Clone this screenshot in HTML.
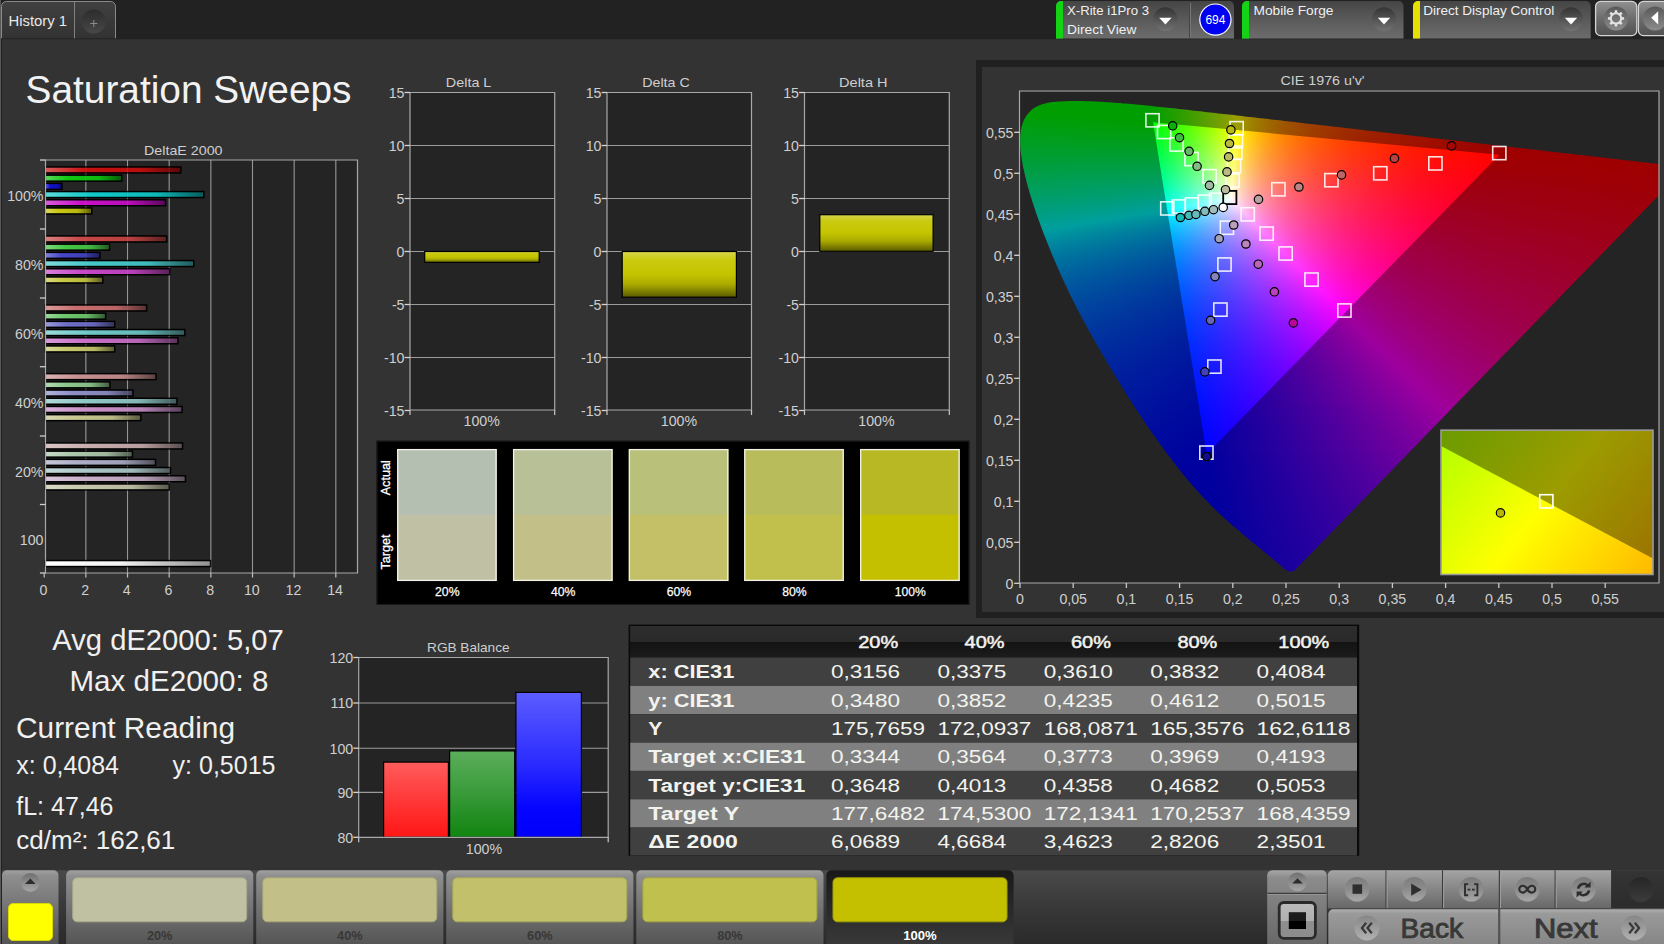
<!DOCTYPE html>
<html><head><meta charset="utf-8"><title>Saturation Sweeps</title><style>
html,body{margin:0;padding:0}
body{width:1664px;height:944px;overflow:hidden;position:relative;background:#333;font-family:"Liberation Sans", sans-serif}
#plot{position:absolute;left:1020px;top:92px;width:639px;height:491px;background:#242424;overflow:hidden}
.cl{position:absolute;left:0;top:0;width:100%;height:100%}
.cl i{display:block;height:2px}
.r1 i{height:1px}
#ov{position:absolute;left:0;top:0}
#ov text{font-family:"Liberation Sans", sans-serif}
.a{position:absolute}
</style></head><body>
<div class="a" style="left:975.5px;top:60px;width:700px;height:558px;background:#202020"></div>
<div class="a" style="left:982px;top:67px;width:700px;height:545px;background:#333"></div>
<div id="plot"><div class="cl r1" style="clip-path:polygon(274.2px 478.8px,270.7px 479.8px,267.7px 478.8px,265.3px 477.4px,263.3px 475.9px,261.5px 474.4px,259.8px 472.8px,258.0px 471.3px,256.2px 469.8px,254.4px 468.3px,252.6px 466.8px,250.7px 465.3px,248.9px 463.8px,247.0px 462.3px,245.2px 460.8px,243.4px 459.3px,241.5px 457.8px,239.7px 456.3px,237.9px 454.8px,236.1px 453.3px,234.2px 451.8px,232.4px 450.2px,230.6px 448.7px,228.8px 447.2px,227.0px 445.7px,225.2px 444.2px,223.4px 442.7px,221.6px 441.2px,219.8px 439.6px,218.0px 438.1px,216.2px 436.6px,214.4px 435.0px,212.6px 433.5px,210.9px 431.9px,209.1px 430.4px,207.3px 428.8px,205.6px 427.2px,203.9px 425.7px,202.1px 424.1px,200.4px 422.5px,198.7px 420.9px,197.0px 419.3px,195.4px 417.7px,193.7px 416.1px,192.0px 414.4px,190.4px 412.8px,188.8px 411.1px,187.2px 409.5px,185.6px 407.8px,184.0px 406.2px,182.4px 404.5px,180.9px 402.8px,179.3px 401.1px,177.8px 399.4px,176.2px 397.7px,174.7px 396.0px,173.2px 394.3px,171.7px 392.6px,170.3px 390.9px,168.8px 389.1px,167.4px 387.4px,165.9px 385.7px,164.5px 383.9px,163.0px 382.2px,161.6px 380.4px,160.2px 378.7px,158.8px 376.9px,157.4px 375.1px,156.0px 373.4px,154.7px 371.6px,153.3px 369.8px,151.9px 368.0px,150.6px 366.3px,149.2px 364.5px,147.9px 362.7px,146.5px 360.9px,145.2px 359.1px,143.9px 357.3px,142.5px 355.5px,141.2px 353.7px,139.9px 351.9px,138.6px 350.1px,137.3px 348.3px,136.0px 346.5px,134.7px 344.7px,133.5px 342.9px,132.2px 341.1px,130.9px 339.3px,129.7px 337.5px,128.4px 335.6px,127.1px 333.8px,125.9px 332.0px,124.7px 330.2px,123.4px 328.3px,122.2px 326.5px,121.0px 324.7px,119.8px 322.8px,118.5px 321.0px,117.3px 319.1px,116.1px 317.3px,114.9px 315.5px,113.7px 313.6px,112.5px 311.8px,111.4px 309.9px,110.2px 308.1px,109.0px 306.2px,107.8px 304.4px,106.7px 302.5px,105.5px 300.6px,104.4px 298.8px,103.2px 296.9px,102.0px 295.1px,100.9px 293.2px,99.8px 291.3px,98.6px 289.5px,97.5px 287.6px,96.4px 285.7px,95.2px 283.9px,94.1px 282.0px,93.0px 280.1px,91.9px 278.3px,90.7px 276.4px,89.6px 274.5px,88.5px 272.6px,87.4px 270.8px,86.3px 268.9px,85.2px 267.0px,84.1px 265.1px,83.0px 263.2px,81.9px 261.4px,80.8px 259.5px,79.7px 257.6px,78.6px 255.7px,77.5px 253.8px,76.4px 252.0px,75.4px 250.1px,74.3px 248.2px,73.2px 246.3px,72.1px 244.4px,71.1px 242.5px,70.0px 240.6px,69.0px 238.7px,67.9px 236.8px,66.9px 234.9px,65.8px 233.0px,64.8px 231.1px,63.8px 229.2px,62.7px 227.3px,61.7px 225.4px,60.7px 223.5px,59.7px 221.6px,58.7px 219.7px,57.7px 217.7px,56.7px 215.8px,55.7px 213.9px,54.8px 212.0px,53.8px 210.1px,52.8px 208.1px,51.9px 206.2px,50.9px 204.3px,50.0px 202.4px,49.1px 200.4px,48.1px 198.5px,47.2px 196.5px,46.3px 194.6px,45.4px 192.7px,44.5px 190.7px,43.6px 188.8px,42.7px 186.8px,41.8px 184.9px,40.9px 182.9px,40.0px 181.0px,39.2px 179.0px,38.3px 177.1px,37.5px 175.1px,36.6px 173.2px,35.8px 171.2px,34.9px 169.3px,34.1px 167.3px,33.3px 165.3px,32.4px 163.4px,31.6px 161.4px,30.8px 159.4px,30.0px 157.5px,29.2px 155.5px,28.4px 153.5px,27.6px 151.6px,26.8px 149.6px,26.0px 147.6px,25.3px 145.6px,24.5px 143.7px,23.7px 141.7px,23.0px 139.7px,22.2px 137.7px,21.5px 135.7px,20.7px 133.8px,20.0px 131.8px,19.3px 129.8px,18.5px 127.8px,17.8px 125.8px,17.1px 123.8px,16.4px 121.8px,15.7px 119.8px,15.1px 117.8px,14.4px 115.8px,13.7px 113.8px,13.1px 111.8px,12.4px 109.8px,11.8px 107.8px,11.2px 105.8px,10.5px 103.8px,9.9px 101.8px,9.3px 99.8px,8.8px 97.8px,8.2px 95.7px,7.6px 93.7px,7.1px 91.7px,6.5px 89.7px,6.0px 87.6px,5.5px 85.6px,5.0px 83.6px,4.6px 81.5px,4.1px 79.5px,3.7px 77.4px,3.2px 75.4px,2.8px 73.3px,2.5px 71.3px,2.1px 69.2px,1.8px 67.2px,1.5px 65.1px,1.2px 63.0px,0.9px 61.0px,0.7px 58.9px,0.5px 56.8px,0.4px 54.7px,0.3px 52.6px,0.2px 50.5px,0.2px 48.5px,0.2px 46.4px,0.3px 44.3px,0.5px 42.2px,0.7px 40.1px,1.0px 37.9px,1.4px 35.8px,1.9px 33.8px,2.6px 31.7px,3.3px 29.6px,4.2px 27.6px,5.3px 25.5px,6.5px 23.6px,7.9px 21.7px,9.5px 19.9px,11.3px 18.2px,13.2px 16.6px,15.4px 15.3px,17.7px 14.0px,20.2px 13.0px,22.7px 12.1px,25.3px 11.4px,28.0px 10.8px,30.6px 10.3px,33.3px 10.0px,36.0px 9.7px,38.7px 9.5px,41.4px 9.4px,44.1px 9.3px,46.8px 9.2px,49.4px 9.1px,52.1px 9.1px,54.8px 9.1px,57.5px 9.1px,60.2px 9.1px,62.9px 9.1px,65.5px 9.2px,68.2px 9.2px,70.9px 9.3px,73.6px 9.4px,76.2px 9.6px,78.9px 9.7px,81.6px 9.8px,84.3px 10.0px,86.9px 10.2px,89.6px 10.3px,92.3px 10.5px,94.9px 10.7px,97.6px 10.9px,100.2px 11.1px,102.9px 11.4px,105.6px 11.6px,108.2px 11.8px,110.9px 12.0px,113.5px 12.3px,116.2px 12.5px,118.8px 12.8px,121.5px 13.1px,124.2px 13.3px,126.8px 13.6px,129.5px 13.8px,132.1px 14.1px,134.8px 14.4px,137.4px 14.7px,140.1px 14.9px,142.7px 15.2px,145.4px 15.5px,148.0px 15.8px,150.7px 16.1px,153.3px 16.3px,155.9px 16.6px,158.6px 16.9px,161.2px 17.2px,163.9px 17.5px,166.5px 17.8px,169.2px 18.1px,171.8px 18.4px,174.5px 18.7px,177.1px 19.0px,179.8px 19.3px,182.4px 19.6px,185.0px 19.9px,187.7px 20.2px,190.3px 20.5px,193.0px 20.8px,195.6px 21.1px,198.3px 21.4px,200.9px 21.7px,203.6px 22.0px,206.2px 22.2px,208.8px 22.5px,211.5px 22.8px,214.1px 23.1px,216.8px 23.5px,219.4px 23.8px,222.1px 24.1px,224.7px 24.4px,227.3px 24.7px,230.0px 25.0px,232.6px 25.3px,235.3px 25.6px,237.9px 25.9px,240.6px 26.2px,243.2px 26.5px,245.9px 26.8px,248.5px 27.1px,251.1px 27.4px,253.8px 27.7px,256.4px 28.0px,259.1px 28.3px,261.7px 28.6px,264.4px 28.9px,267.0px 29.2px,269.6px 29.5px,272.3px 29.8px,274.9px 30.1px,277.6px 30.4px,280.2px 30.8px,282.9px 31.1px,285.5px 31.4px,288.1px 31.7px,290.8px 32.0px,293.4px 32.3px,296.1px 32.6px,298.7px 32.9px,301.4px 33.2px,304.0px 33.5px,306.6px 33.8px,309.3px 34.1px,311.9px 34.4px,314.6px 34.7px,317.2px 35.0px,319.9px 35.3px,322.5px 35.6px,325.1px 35.9px,327.8px 36.2px,330.4px 36.5px,333.1px 36.8px,335.7px 37.1px,338.4px 37.4px,341.0px 37.7px,343.6px 38.0px,346.3px 38.4px,348.9px 38.7px,351.6px 39.0px,354.2px 39.3px,356.9px 39.6px,359.5px 39.9px,362.1px 40.2px,364.8px 40.5px,367.4px 40.8px,370.1px 41.1px,372.7px 41.4px,375.4px 41.7px,378.0px 42.0px,380.6px 42.3px,383.3px 42.6px,385.9px 42.9px,388.6px 43.2px,391.2px 43.6px,393.9px 43.9px,396.5px 44.2px,399.1px 44.5px,401.8px 44.8px,404.4px 45.1px,407.1px 45.4px,409.7px 45.7px,412.4px 46.0px,415.0px 46.3px,417.6px 46.6px,420.3px 46.9px,422.9px 47.2px,425.6px 47.5px,428.2px 47.8px,430.9px 48.1px,433.5px 48.4px,436.1px 48.7px,438.8px 49.0px,441.4px 49.3px,444.1px 49.6px,446.7px 49.9px,449.4px 50.2px,452.0px 50.6px,454.6px 50.9px,457.3px 51.2px,459.9px 51.5px,462.6px 51.8px,465.2px 52.1px,467.9px 52.4px,470.5px 52.7px,473.1px 53.0px,475.8px 53.3px,478.4px 53.6px,481.1px 53.9px,483.7px 54.2px,486.4px 54.5px,489.0px 54.8px,491.6px 55.1px,494.3px 55.4px,496.9px 55.7px,499.6px 56.0px,502.2px 56.3px,504.9px 56.6px,507.5px 56.9px,510.2px 57.2px,512.8px 57.5px,515.4px 57.8px,518.1px 58.1px,520.7px 58.4px,523.4px 58.7px,526.0px 59.0px,528.7px 59.4px,531.3px 59.7px,533.9px 60.0px,536.6px 60.3px,539.2px 60.6px,541.9px 60.9px,544.5px 61.2px,547.1px 61.5px,549.8px 61.8px,552.4px 62.1px,555.1px 62.4px,557.7px 62.7px,560.4px 63.0px,563.0px 63.3px,565.6px 63.6px,568.3px 63.9px,570.9px 64.2px,573.6px 64.5px,576.2px 64.8px,578.9px 65.1px,581.5px 65.4px,584.2px 65.8px,586.8px 66.1px,589.4px 66.4px,592.1px 66.7px,594.7px 67.0px,597.4px 67.3px,600.0px 67.6px,602.7px 67.9px,605.3px 68.2px,607.9px 68.5px,610.6px 68.8px,613.2px 69.1px,615.9px 69.4px,618.5px 69.7px,621.1px 70.0px,623.8px 70.3px,626.4px 70.6px,629.1px 70.9px,631.7px 71.2px,634.4px 71.5px,637.0px 71.8px,639.7px 72.1px,642.3px 72.4px,644.9px 72.7px,647.6px 73.1px,650.2px 73.4px,652.9px 73.7px,655.5px 74.0px,658.2px 74.3px,660.8px 74.6px,664.2px 77.1px)"><i></i><i></i><i></i><i></i><i></i><i></i><i></i><i></i><i></i><i style="background:linear-gradient(90deg,#009e00 31px,#009e00 87px)"></i><i style="background:linear-gradient(90deg,#009e00 24px,#009e00 101px)"></i><i style="background:linear-gradient(90deg,#009e00 21px,#009e00 113px)"></i><i style="background:linear-gradient(90deg,#009e00 18px,#009e00 123px)"></i><i style="background:linear-gradient(90deg,#009e00 15px,#009e00 130px,#059e00 134px)"></i><i style="background:linear-gradient(90deg,#009e00 13px,#009e00 130px,#129e00 143px)"></i><i style="background:linear-gradient(90deg,#009e00 12px,#009e00 130px,#219e00 153px)"></i><i style="background:linear-gradient(90deg,#009e00 10px,#009e00 130px,#2f9e00 162px)"></i><i style="background:linear-gradient(90deg,#009e00 9px,#009e00 131px,#3e9e00 171px)"></i><i style="background:linear-gradient(90deg,#009e00 8px,#009e00 131px,#259e00 156px,#4e9e00 180px)"></i><i style="background:linear-gradient(90deg,#009e01 7px,#009e00 131px,#2c9e00 160px,#5f9e00 189px)"></i><i style="background:linear-gradient(90deg,#009e02 6px,#009e00 131px,#349e00 165px,#719e00 198px)"></i><i style="background:linear-gradient(90deg,#009e03 5px,#009e00 40px,#019e00 132px,#3e9e00 171px,#829e00 206px)"></i><i style="background:linear-gradient(90deg,#009e04 4px,#009e00 50px,#009e00 132px,#239e00 155px,#479e00 176px,#6d9e00 196px,#969e00 215px)"></i><i style="background:linear-gradient(90deg,#009e05 4px,#009e00 61px,#009e00 132px,#249e00 156px,#4a9e00 178px,#739e00 199px,#9d9e00 218px,#9e9200 224px)"></i><i style="background:linear-gradient(90deg,#009e06 3px,#009e00 72px,#009e00 132px,#239e00 155px,#4a9e00 178px,#739e00 199px,#9d9e00 218px,#9e8000 233px)"></i><i style="background:linear-gradient(90deg,#009e07 3px,#009e00 82px,#009e00 132px,#219e00 154px,#489e00 177px,#719e00 198px,#9e9e00 218px,#9e8700 229px,#9e7300 241px)"></i><i style="background:linear-gradient(90deg,#009e08 2px,#009e00 93px,#009e00 132px,#219e00 154px,#489e00 177px,#719e00 198px,#9e9e00 218px,#9e8000 233px,#9e6700 250px)"></i><i style="background:linear-gradient(90deg,#009e09 2px,#009e00 104px,#009e00 132px,#1f9e00 153px,#489e00 177px,#719e00 198px,#9e9e00 218px,#9e7b00 236px,#9e5c00 259px)"></i><i style="background:linear-gradient(90deg,#009e0b 1px,#009e00 133px,#249e00 156px,#4a9e00 178px,#729e00 198px,#9e9e00 218px,#9e8800 228px,#9e7400 240px,#9e5300 268px)"></i><i style="background:linear-gradient(90deg,#009e0c 1px,#009e00 133px,#249e00 156px,#4a9e00 178px,#729e00 198px,#9e9e00 218px,#9e8400 230px,#9e6f00 243px,#9e5d00 258px,#9e4b00 276px)"></i><i style="background:linear-gradient(90deg,#009e0d 0px,#009e00 133px,#239e00 156px,#489e00 177px,#709e00 197px,#9e9d00 218px,#9e8200 231px,#9e6a00 247px,#9e5500 265px,#9e4400 285px)"></i><i style="background:linear-gradient(90deg,#009e0e 0px,#009e02 133px,#229e00 155px,#489e00 177px,#6e9e00 196px,#9e9d00 218px,#9e7f00 233px,#9e6600 250px,#9e5000 270px,#9e3e00 293px)"></i><i style="background:linear-gradient(90deg,#009e0f 0px,#009e03 133px,#209e00 154px,#489e00 177px,#729e00 198px,#9d9e00 217px,#9e7d00 234px,#9e6200 253px,#9e4b00 275px,#9e3800 302px)"></i><i style="background:linear-gradient(90deg,#009e10 0px,#019e04 134px,#259e01 157px,#4a9e00 178px,#729e00 198px,#9d9e00 217px,#9e7b00 235px,#9e5e00 256px,#9e4600 281px,#9e3300 311px)"></i><i style="background:linear-gradient(90deg,#009e11 0px,#009e06 134px,#249e03 157px,#4a9e00 178px,#729e00 198px,#9d9e00 217px,#9e7900 236px,#9e5a00 259px,#9e4200 286px,#9e2e00 320px)"></i><i style="background:linear-gradient(90deg,#009e12 0px,#009e07 134px,#249e04 157px,#4a9e02 178px,#729e00 198px,#9e9e00 217px,#9e7700 237px,#9e5800 261px,#9e3e00 291px,#9e2a00 328px)"></i><i style="background:linear-gradient(90deg,#009e13 0px,#009e08 134px,#249e06 157px,#4a9e03 178px,#729e00 198px,#9e9e00 217px,#9e8800 227px,#9e7500 238px,#9e5500 264px,#9e3b00 296px,#9e2600 337px)"></i><i style="background:linear-gradient(90deg,#009e14 0px,#009e0a 134px,#229e07 156px,#4a9e05 178px,#729e02 198px,#9e9e00 217px,#9e8800 227px,#9e7300 239px,#9e6200 252px,#9e5100 267px,#9e3700 302px,#9e2200 346px)"></i><i style="background:linear-gradient(90deg,#009e15 0px,#009e0b 134px,#219e09 155px,#489e06 177px,#709e04 197px,#9e9e01 217px,#9e8600 228px,#9e7200 240px,#9e5f00 254px,#9e4f00 269px,#9e3400 306px,#9e1f00 354px)"></i><i style="background:linear-gradient(90deg,#009e16 0px,#009e0d 134px,#1f9e0b 154px,#489e08 177px,#709e05 197px,#9c9e03 216px,#9e8200 230px,#9e6e00 242px,#9e5c00 256px,#9e4c00 272px,#9e3100 312px,#9e1c00 363px)"></i><i style="background:linear-gradient(90deg,#009e17 0px,#019e0e 135px,#249e0c 157px,#499e09 178px,#729e07 198px,#9c9e04 216px,#9e8202 230px,#9e6d00 243px,#9e5a00 258px,#9e4a00 275px,#9e2e00 317px,#9e1900 372px)"></i><i style="background:linear-gradient(90deg,#009e18 0px,#009e0f 135px,#239e0d 157px,#499e0b 178px,#739e09 198px,#9c9e06 216px,#9e8203 230px,#9e6d01 243px,#9e5900 259px,#9e4800 277px,#9e2b00 322px,#9e1600 380px)"></i><i style="background:linear-gradient(90deg,#009e19 0px,#009e11 135px,#239e0f 157px,#499e0d 178px,#739e0a 198px,#9d9e08 216px,#9e8105 230px,#9e6b02 244px,#9e5700 260px,#9e4600 279px,#9e3700 301px,#9e2900 326px,#9e1400 389px)"></i><i style="background:linear-gradient(90deg,#009e1a 0px,#009e12 135px,#239e10 157px,#499e0e 178px,#739e0c 198px,#9d9e0a 216px,#9e8106 230px,#9e6904 245px,#9e5501 262px,#9e4300 282px,#9e3400 305px,#9e2700 332px,#9e1100 398px)"></i><i style="background:linear-gradient(90deg,#009e1b 0px,#009e14 135px,#219e12 156px,#499e10 178px,#739e0e 198px,#9d9e0c 216px,#9e8108 230px,#9e6905 245px,#9e5402 263px,#9e4100 284px,#9e3200 308px,#9e2500 336px,#9e0f00 406px)"></i><i style="background:linear-gradient(90deg,#009e1c 0px,#009e15 135px,#1e9e14 154px,#459e12 176px,#6a9e10 194px,#9e9c0d 217px,#9e810a 230px,#9e6706 246px,#9e5203 264px,#9e4001 286px,#9e3000 311px,#9e2200 341px,#9e0d00 415px)"></i><i style="background:linear-gradient(90deg,#009e1e 0px,#019e17 136px,#239e15 157px,#479e13 177px,#6a9e12 194px,#9e9c0f 217px,#9e7e0b 231px,#9e6607 247px,#9e5004 266px,#9e3d02 289px,#9e2e00 315px,#9e2000 346px,#9e0b00 424px)"></i><i style="background:linear-gradient(90deg,#009e1f 0px,#009e18 136px,#249e17 158px,#4b9e15 179px,#739e13 198px,#9e9e11 216px,#9e800d 230px,#9e6609 247px,#9e4f05 267px,#9e3c02 290px,#9e2c00 318px,#9e1f00 350px,#9e0a00 432px)"></i><i style="background:linear-gradient(90deg,#009e20 0px,#009e1a 136px,#249e18 158px,#4b9e17 179px,#739e15 198px,#9e9e13 216px,#9e7e0e 231px,#9e640a 248px,#9e4e06 268px,#9e3b03 292px,#9e2b01 320px,#9e1d00 354px,#9e0800 441px)"></i><i style="background:linear-gradient(90deg,#009e21 0px,#009e1b 136px,#229e1a 157px,#499e18 178px,#719e17 197px,#9e9e15 216px,#9e7e10 231px,#9e640b 248px,#9e4d07 269px,#9e3904 294px,#9e2901 324px,#9e1b00 359px,#9e0600 450px)"></i><i style="background:linear-gradient(90deg,#009e22 0px,#009e1d 136px,#229e1b 157px,#499e1a 178px,#719e19 197px,#9e9e17 216px,#9e7d11 231px,#9e620c 249px,#9e4c08 270px,#9e3805 296px,#9e2702 327px,#9e1a00 363px,#9e0500 458px)"></i><i style="background:linear-gradient(90deg,#009e23 0px,#009e1e 136px,#209e1d 156px,#479e1c 177px,#6f9e1b 196px,#9e9d19 216px,#9e7d13 231px,#9e610d 250px,#9e4a09 272px,#9e3605 299px,#9e2602 330px,#9e1800 368px,#9e0300 467px)"></i><i style="background:linear-gradient(90deg,#009e24 0px,#019e20 137px,#239e1f 158px,#499e1d 178px,#6f9e1c 196px,#9e9d1b 216px,#9e7b14 232px,#9e5f0e 251px,#9e480a 274px,#9e3406 301px,#9e2403 334px,#9e1600 373px,#9e0200 476px)"></i><i style="background:linear-gradient(90deg,#009e25 0px,#009e21 137px,#239e20 158px,#499e1f 178px,#6f9e1e 196px,#9e9d1d 216px,#9e7b16 232px,#9e5e0f 252px,#9e460b 275px,#9e3306 303px,#9e2303 337px,#9e1500 377px,#9e0000 485px)"></i><i style="background:linear-gradient(90deg,#009e26 0px,#009e23 137px,#239e22 158px,#499e21 178px,#6d9e20 195px,#9e9d1f 216px,#9e7b17 232px,#9e5d11 252px,#9e450b 276px,#9e3207 305px,#9e2104 340px,#9e1300 383px,#9e0800 438px,#9e0000 493px)"></i><i style="background:linear-gradient(90deg,#009e27 0px,#009e24 137px,#219e24 157px,#479e23 177px,#6b9e22 194px,#9e9c21 216px,#9e7918 233px,#9e5c12 253px,#9e440c 278px,#9e3008 308px,#9e1f04 346px,#9e1101 392px,#9e0400 459px,#9e0000 502px)"></i><i style="background:linear-gradient(90deg,#009e29 0px,#009e26 137px,#219e25 157px,#479e24 177px,#6b9e24 194px,#9e9c22 216px,#9e781a 233px,#9e5b13 254px,#9e420d 280px,#9e2e08 311px,#9e1d04 351px,#9e0f01 401px,#9e0000 483px,#9e0000 511px)"></i><i style="background:linear-gradient(90deg,#009e2a 0px,#009e27 137px,#1f9e27 156px,#459e26 176px,#689e26 193px,#9e9e25 215px,#9e9c24 216px,#9e761b 234px,#9e5914 255px,#9e410e 281px,#9e2d09 313px,#9e1b04 355px,#9e0d01 408px,#9e0000 484px,#9e0000 519px)"></i><i style="background:linear-gradient(90deg,#009e2b 0px,#019e29 138px,#249e28 159px,#4b9e28 179px,#749e27 198px,#9e9e27 215px,#9e781d 233px,#9e5915 255px,#9e400f 282px,#9e2c09 314px,#9e1a05 359px,#9e0b01 415px,#9e0000 483px,#9e0000 528px)"></i><i style="background:linear-gradient(90deg,#009e2c 0px,#009e2b 138px,#249e2a 159px,#4a9e2a 179px,#729e29 197px,#9e9e29 215px,#9e8923 224px,#9e781f 233px,#9e5916 255px,#9e3f0f 283px,#9e2a0a 317px,#9e1805 364px,#9e0901 424px,#9e0000 483px,#9e0000 537px)"></i><i style="background:linear-gradient(90deg,#009e2d 0px,#009e2c 138px,#249e2c 159px,#4a9e2c 179px,#729e2b 197px,#9e9e2b 215px,#9e8925 224px,#9e7720 233px,#9e5717 256px,#9e3e10 284px,#9e290a 319px,#9e1605 369px,#9e0801 432px,#9e0000 482px,#9e0000 545px)"></i><i style="background:linear-gradient(90deg,#009e2e 0px,#009e2e 138px,#229e2e 158px,#489e2d 178px,#709e2d 196px,#9e9e2d 215px,#9e8827 224px,#9e7521 234px,#9e5618 257px,#9e3c11 286px,#9e280b 321px,#9e1505 373px,#9e0601 440px,#9e0000 481px,#9e0000 554px)"></i><i style="background:linear-gradient(90deg,#009e2f 0px,#009e2f 138px,#229e2f 158px,#489e2f 178px,#709e2f 196px,#9e9d2f 215px,#9e8829 224px,#9e7523 234px,#9e5419 258px,#9e3b12 287px,#9e260b 324px,#9e1306 379px,#9e0401 450px,#9e0000 480px,#9e0000 563px)"></i><i style="background:linear-gradient(90deg,#009e31 0px,#009e31 138px,#209e31 157px,#469e31 177px,#6d9e31 195px,#9e9d31 215px,#9e882a 224px,#9e7525 234px,#9e541a 258px,#9e3a12 288px,#9e250c 326px,#9e1206 383px,#9e0301 458px,#9e0000 479px,#9e0000 571px)"></i><i style="background:linear-gradient(90deg,#009e32 0px,#009e33 138px,#1e9e33 156px,#469e33 177px,#6d9e33 195px,#9e9d33 215px,#9e872c 224px,#9e7326 235px,#9e531b 259px,#9e3913 290px,#9e240c 328px,#9e1006 388px,#9e0201 467px,#9e0000 580px)"></i><i style="background:linear-gradient(90deg,#009e33 0px,#009e34 139px,#239e35 159px,#489e35 178px,#6d9e35 195px,#9e9d35 215px,#9e872e 224px,#9e7327 235px,#9e521c 260px,#9e3814 291px,#9e230d 331px,#9e0f06 393px,#9e0001 476px,#9e0000 589px)"></i><i style="background:linear-gradient(90deg,#009e34 0px,#009e36 139px,#239e36 159px,#489e37 178px,#6b9e37 194px,#9e9c37 215px,#9e8730 224px,#9e7229 235px,#9e511e 260px,#9e3714 292px,#9e220d 333px,#9e0f07 394px,#9e0002 475px,#9e0000 597px)"></i><i style="background:linear-gradient(90deg,#009e35 0px,#009e38 139px,#219e38 158px,#469e39 177px,#699e39 193px,#9e9c39 215px,#9e8732 224px,#9e722a 235px,#9e6024 247px,#9e501e 261px,#9e3515 294px,#9e210e 335px,#9e0e07 396px,#9e0002 475px,#9e0000 606px)"></i><i style="background:linear-gradient(90deg,#009e36 0px,#009e39 139px,#219e3a 158px,#469e3b 177px,#709e3b 196px,#9e9e3c 214px,#9e9c3b 215px,#9e8433 225px,#9e702b 236px,#9e4f1f 262px,#9e3416 295px,#9e200e 337px,#9e0e08 397px,#9e0003 474px,#9e0000 615px)"></i><i style="background:linear-gradient(90deg,#009e38 0px,#009e3b 139px,#209e3c 158px,#489e3c 178px,#729e3d 197px,#9e9e3e 214px,#9e8635 224px,#9e712e 235px,#9e6027 247px,#9e4f21 261px,#9e3417 295px,#9e1f0f 338px,#9e0d08 397px,#9e0003 473px,#9e0000 623px)"></i><i style="background:linear-gradient(90deg,#009e39 0px,#009e3d 139px,#1e9e3d 157px,#489e3e 178px,#709e3f 196px,#9e9e40 214px,#9e8637 224px,#9e712f 235px,#9e5e28 248px,#9e4e22 262px,#9e3317 296px,#9e1e0f 340px,#9e0d09 398px,#9e0004 472px,#9e0000 632px)"></i><i style="background:linear-gradient(90deg,#009e3a 0px,#019e3e 140px,#249e3f 160px,#4a9e40 179px,#709e41 196px,#9e9e43 214px,#9e8639 224px,#9e7131 235px,#9e5e29 248px,#9e4e23 262px,#9e3218 297px,#9e1d10 341px,#9e0d09 398px,#9e0004 471px,#9e0000 639px)"></i><i style="background:linear-gradient(90deg,#009e3b 0px,#009e40 140px,#249e41 160px,#4a9e42 179px,#709e44 196px,#9e9d45 214px,#9e853b 224px,#9e7132 235px,#9e5e2b 248px,#9e4e24 262px,#9e3219 297px,#9e1d11 341px,#9e0d0a 398px,#9e0005 470px,#9e0000 639px)"></i><i style="background:linear-gradient(90deg,#009e3c 0px,#009e42 140px,#239e43 160px,#4a9e44 179px,#709e46 196px,#9e9d47 214px,#9e853d 224px,#9e7034 235px,#9e5d2c 248px,#9e4d26 262px,#9e321a 297px,#9e1d11 341px,#9e0d0b 397px,#9e0005 469px,#9e0000 639px)"></i><i style="background:linear-gradient(90deg,#009e3e 0px,#009e44 140px,#219e45 159px,#479e46 178px,#6e9e48 195px,#9e9d49 214px,#9e853f 224px,#9e7036 235px,#9e5d2e 248px,#9e4d27 262px,#9e321b 297px,#9e1d12 341px,#9e0d0b 397px,#9e0006 468px,#9e0000 639px)"></i><i style="background:linear-gradient(90deg,#009e3f 1px,#009e45 140px,#1f9e47 158px,#479e48 178px,#6c9e4a 194px,#9e9d4b 214px,#9e8440 224px,#9e7037 235px,#9e5d2f 248px,#9e4d28 262px,#9e321c 297px,#9e1d13 341px,#9e0d0c 396px,#9e0006 467px,#9e0000 639px)"></i><i style="background:linear-gradient(90deg,#009e40 1px,#009e47 140px,#1d9e48 157px,#459e4a 177px,#6c9e4c 194px,#9e9c4d 214px,#9e8442 224px,#9e7039 235px,#9e5d30 248px,#9e4d29 262px,#9e311d 297px,#9e1c14 341px,#9e0d0c 396px,#9e0007 466px,#9e0000 639px)"></i><i style="background:linear-gradient(90deg,#009e41 1px,#019e49 141px,#239e4b 160px,#479e4c 178px,#6c9e4e 194px,#9e9c4f 214px,#9e8444 224px,#9e6f3b 235px,#9e5c32 248px,#9e4c2b 262px,#9e311e 297px,#9e1c14 341px,#9e0c0d 396px,#9e0007 465px,#9e0000 639px)"></i><i style="background:linear-gradient(90deg,#009e43 1px,#009e4b 141px,#239e4d 160px,#479e4e 178px,#719e50 196px,#9e9e53 213px,#9e9c52 214px,#9e8446 224px,#9e6f3c 235px,#9e5c33 248px,#9e4c2c 262px,#9e311f 297px,#9e1c15 341px,#9e0c0e 395px,#9e0008 464px,#9e0000 639px)"></i><i style="background:linear-gradient(90deg,#009e44 1px,#009e4d 141px,#229e4e 160px,#479e50 178px,#719e53 196px,#9e9e55 213px,#9e9c54 214px,#9e8348 224px,#9e6f3e 235px,#9e5c35 248px,#9e4c2d 262px,#9e3120 297px,#9e1c16 341px,#9e0c0e 395px,#9e0008 463px,#9e0001 639px)"></i><i style="background:linear-gradient(90deg,#009e45 2px,#009e4e 141px,#229e50 160px,#499e53 179px,#739e55 197px,#9e9e57 213px,#9e854b 223px,#9e7041 234px,#9e5d37 247px,#9e4d2f 261px,#9e3121 296px,#9e1c17 340px,#9e0c0f 394px,#9e0009 462px,#9e0001 639px)"></i><i style="background:linear-gradient(90deg,#009e46 2px,#009e50 141px,#229e52 160px,#499e55 179px,#719e57 196px,#9e9e5a 213px,#9e854d 223px,#9e7042 234px,#9e5c38 247px,#9e4c30 261px,#9e3122 296px,#9e1c18 340px,#9e0c10 393px,#9e0009 461px,#9e0001 639px)"></i><i style="background:linear-gradient(90deg,#009e48 2px,#009e52 141px,#1e9e54 158px,#479e57 178px,#6f9e59 195px,#9e9e5c 213px,#9e854f 223px,#9e6f44 234px,#9e5c3a 247px,#9e4c31 261px,#9e3023 296px,#9e1c18 340px,#9e0c10 393px,#9e000a 460px,#9e0001 639px)"></i><i style="background:linear-gradient(90deg,#009e49 2px,#019e54 142px,#249e56 161px,#499e59 179px,#6f9e5b 195px,#9e9d5e 213px,#9e8451 223px,#9e6f46 234px,#9e5c3b 247px,#9e4c33 261px,#9e3024 296px,#9e1b19 340px,#9e0c11 393px,#9e000b 459px,#9e0002 639px)"></i><i style="background:linear-gradient(90deg,#009e4a 3px,#009e56 142px,#239e58 161px,#499e5b 179px,#6f9e5e 195px,#9e9d60 213px,#9e8453 223px,#9e6f47 234px,#9e5c3d 247px,#9e4b34 261px,#9e3025 296px,#9e1b1a 340px,#9e0c12 392px,#9e000b 458px,#9e0002 639px)"></i><i style="background:linear-gradient(90deg,#009e4c 3px,#009e58 142px,#239e5a 161px,#499e5d 179px,#6f9e60 195px,#9e9d63 213px,#9e8455 223px,#9e6f49 234px,#9e5b3e 247px,#9e4b35 261px,#9e3026 296px,#9e1b1b 340px,#9e0c12 392px,#9e000c 457px,#9e0002 639px)"></i><i style="background:linear-gradient(90deg,#009e4d 3px,#009e5a 142px,#219e5c 160px,#479e5f 178px,#6c9e62 194px,#9e9d65 213px,#9e8457 223px,#9e6e4b 234px,#9e5b40 247px,#9e4b37 261px,#9e3027 295px,#9e1b1b 340px,#9e0c13 391px,#9e000c 456px,#9e0003 639px)"></i><i style="background:linear-gradient(90deg,#009e4e 3px,#009e5c 142px,#219e5e 160px,#479e61 178px,#6a9e64 193px,#9e9c67 213px,#9e8359 223px,#9e6e4d 234px,#9e5b41 247px,#9e4b38 261px,#9e3028 295px,#9e1b1c 340px,#9e0c14 391px,#9e000d 455px,#9e0003 639px)"></i><i style="background:linear-gradient(90deg,#009e50 4px,#009e5e 142px,#1d9e60 158px,#449e63 177px,#6a9e67 193px,#9d9e6b 212px,#9e9c6a 213px,#9e835b 223px,#9e6e4e 234px,#9e5a43 247px,#9e4a39 261px,#9e3029 295px,#9e1a1d 340px,#9e0c14 391px,#9e000d 454px,#9e0003 639px)"></i><i style="background:linear-gradient(90deg,#009e51 4px,#019e60 143px,#239e63 161px,#469e66 178px,#729e6a 196px,#9e9e6d 212px,#9e9c6c 213px,#9e835d 223px,#9e6d50 234px,#9e5b45 246px,#9e4b3b 260px,#9e2f2a 295px,#9e1a1e 340px,#9e0c15 390px,#9e000e 453px,#9e0003 639px)"></i><i style="background:linear-gradient(90deg,#009e52 4px,#009e62 143px,#249e65 162px,#4b9e68 180px,#729e6c 196px,#9e9e70 212px,#9e8560 222px,#9e6f53 233px,#9e5d47 245px,#9e4c3d 259px,#9e302c 293px,#9e1b1f 338px,#9e0c16 388px,#9e000e 452px,#9e0004 639px)"></i><i style="background:linear-gradient(90deg,#009e53 4px,#009e64 143px,#249e67 162px,#4b9e6b 180px,#729e6e 196px,#9e9e72 212px,#9e8764 221px,#9e7056 232px,#9e5c49 245px,#9e4c3f 259px,#9e302d 293px,#9e1b20 338px,#9e0c16 388px,#9e000f 451px,#9e0004 639px)"></i><i style="background:linear-gradient(90deg,#009e55 5px,#009e66 143px,#229e69 161px,#499e6d 179px,#729e71 196px,#9e9e75 212px,#9e8666 221px,#9e7057 232px,#9e5c4b 245px,#9e4b40 259px,#9e302e 293px,#9e1a20 338px,#9e0c17 388px,#9e0010 450px,#9e0004 639px)"></i><i style="background:linear-gradient(90deg,#009e56 5px,#009e68 143px,#229e6b 161px,#489e6f 179px,#6f9e73 195px,#9e9e77 212px,#9e8668 221px,#9e7059 232px,#9e5c4c 245px,#9e4b41 259px,#9e302f 293px,#9e1a21 338px,#9e0c18 387px,#9e0010 449px,#9e0005 639px)"></i><i style="background:linear-gradient(90deg,#009e58 5px,#009e6a 143px,#209e6d 160px,#469e71 178px,#6d9e75 194px,#9e9d7a 212px,#9e866a 221px,#9e6f5b 232px,#9e5b4e 245px,#9e4b43 259px,#9e2f30 293px,#9e1a22 338px,#9e0c18 387px,#9e0011 448px,#9e0005 639px)"></i><i style="background:linear-gradient(90deg,#009e59 5px,#009e6c 143px,#1d9e6f 159px,#469e73 178px,#6d9e78 194px,#9e9d7c 212px,#9e856c 221px,#9e6f5d 232px,#9e5b4f 245px,#9e4a44 259px,#9e2f31 293px,#9e1a23 338px,#9e0c19 386px,#9e0011 447px,#9e0005 639px)"></i><i style="background:linear-gradient(90deg,#009e5a 6px,#019e6e 144px,#239e72 162px,#489e76 179px,#6d9e7a 194px,#9e9d7f 212px,#9e856e 221px,#9e6f5f 232px,#9e5b51 245px,#9e4a45 259px,#9e2f32 293px,#9e1924 338px,#9e0b1a 386px,#9e0012 446px,#9e0006 639px)"></i><i style="background:linear-gradient(90deg,#009e5c 6px,#009e70 144px,#239e74 162px,#489e78 179px,#6d9e7d 194px,#9e9c81 212px,#9e8570 221px,#9e6f61 232px,#9e5a52 245px,#9e4a47 259px,#9e2f33 293px,#9e1924 338px,#9e0b1a 386px,#9e0013 445px,#9e0006 639px)"></i><i style="background:linear-gradient(90deg,#009e5d 6px,#009e72 144px,#219e76 161px,#469e7a 178px,#6b9e7f 193px,#9e9c84 212px,#9e8573 221px,#9e6e62 232px,#9e5a54 245px,#9e4a48 259px,#9e2e35 293px,#9e1925 338px,#9e0b1b 386px,#9e0013 445px,#9e0006 639px)"></i><i style="background:linear-gradient(90deg,#009e5f 7px,#009e68 82px,#009e74 144px,#219e78 161px,#469e7d 178px,#709e82 195px,#9d9e88 211px,#9e9c86 212px,#9e8475 221px,#9e6e64 232px,#9e5a56 245px,#9e4949 259px,#9e2e36 293px,#9e1926 338px,#9e0b1c 386px,#9e0014 444px,#9e0006 639px)"></i><i style="background:linear-gradient(90deg,#009e60 7px,#009e6a 82px,#009e76 144px,#1e9e7a 160px,#439e7f 177px,#709e84 195px,#9e9e8a 211px,#9e9c88 212px,#9e8477 221px,#9e6e66 232px,#9e5a57 245px,#9e494b 259px,#9e2e37 293px,#9e1927 338px,#9e0b1c 385px,#9e0014 443px,#9e0007 639px)"></i><i style="background:linear-gradient(90deg,#009e61 7px,#009e6c 82px,#009e78 144px,#1e9e7c 160px,#489e82 179px,#739e87 196px,#9e9e8d 211px,#9e867b 220px,#9e6f69 231px,#9e5c5b 243px,#9e4b4e 257px,#9e2f39 291px,#9e1928 336px,#9e0b1d 383px,#9e0015 442px,#9e0007 639px)"></i><i style="background:linear-gradient(90deg,#009e63 7px,#009e6e 83px,#019e7a 145px,#249e7f 163px,#4a9e85 180px,#739e8a 196px,#9e9e90 211px,#9e867d 220px,#9e6f6b 231px,#9e5c5d 243px,#9e4b4f 257px,#9e2f3a 291px,#9e1929 336px,#9e0b1e 383px,#9e0016 441px,#9e0007 639px)"></i><i style="background:linear-gradient(90deg,#009e64 8px,#009e6f 83px,#009e7d 145px,#249e82 163px,#4a9e87 180px,#709e8c 195px,#9e9e92 211px,#9e857f 220px,#9e6e6d 231px,#9e5b5e 243px,#9e4a51 257px,#9e2e3b 291px,#9e192a 336px,#9e0b1f 383px,#9e0016 440px,#9e0008 639px)"></i><i style="background:linear-gradient(90deg,#009e66 8px,#009e71 83px,#009e7f 145px,#229e84 162px,#489e89 179px,#709e8f 195px,#9e9d95 211px,#9e8581 220px,#9e6e6f 231px,#9e5b60 243px,#9e4a52 257px,#9e2e3c 291px,#9e192a 336px,#9e0b20 382px,#9e0017 439px,#9e0008 639px)"></i><i style="background:linear-gradient(90deg,#009e67 8px,#009e73 83px,#009e81 145px,#219e86 162px,#489e8c 179px,#6e9e91 194px,#9e9d98 211px,#9e8584 220px,#9e6e71 231px,#9e5b62 243px,#9e4a54 257px,#9e2e3d 291px,#9e182b 336px,#9e0b20 382px,#9e0017 438px,#9e0008 639px)"></i><i style="background:linear-gradient(90deg,#009e69 9px,#009e74 83px,#009e83 145px,#1f9e88 161px,#489e8e 179px,#6e9e94 194px,#9e9d9a 211px,#9e8486 220px,#9e6e73 231px,#9e5a63 243px,#9e4955 257px,#9e2e3e 291px,#9e182c 336px,#9e0b21 381px,#9e0018 437px,#9e000f 525px,#9e0009 639px)"></i><i style="background:linear-gradient(90deg,#009e6a 9px,#009e76 84px,#009e85 145px,#1d9e8a 160px,#459e90 178px,#6b9e96 193px,#9e9d9d 211px,#9e8488 220px,#9e6d75 231px,#9e5a65 243px,#9e4956 257px,#9e2d3f 291px,#9e182d 336px,#9e0b22 381px,#9e0019 436px,#9e0010 524px,#9e0009 638px)"></i><i style="background:linear-gradient(90deg,#009e6b 9px,#009e78 84px,#019e88 146px,#439e92 177px,#8b9e9e 204px,#9e999d 212px,#9e8188 221px,#9e6b75 232px,#9e5865 244px,#9e4857 258px,#9e2d40 292px,#9e172d 337px,#9e0a22 381px,#9e0019 435px,#9e0010 523px,#9e0009 637px)"></i><i style="background:linear-gradient(90deg,#009e6d 10px,#009e7a 85px,#009e8a 146px,#3e9e94 175px,#799e9e 198px,#9e969d 213px,#9e7f89 222px,#9e6976 233px,#9e5766 245px,#9e4658 259px,#9e2c40 293px,#9e172e 338px,#9e0a23 381px,#9e001a 434px,#9e0011 522px,#9e000a 636px)"></i><i style="background:linear-gradient(90deg,#009e6f 10px,#009e7c 85px,#009e8c 146px,#329e95 170px,#699e9e 192px,#9e939d 214px,#9e7c89 223px,#9e6776 234px,#9e5465 247px,#9e4457 261px,#9e2a40 295px,#9e162e 340px,#9e0a23 382px,#9e001b 433px,#9e0011 521px,#9e000a 635px)"></i><i style="background:linear-gradient(90deg,#009e70 10px,#009e7e 85px,#009e8f 146px,#299e96 166px,#599e9e 186px,#9e909d 215px,#9e7a89 224px,#9e6577 235px,#9e5266 248px,#9e4358 262px,#9e2941 296px,#9e152f 341px,#9e0a24 382px,#9e001b 432px,#9e0012 520px,#9e000a 634px)"></i><i style="background:linear-gradient(90deg,#009e72 11px,#009e80 85px,#009e91 146px,#209e97 162px,#4a9e9e 180px,#9e8d9d 216px,#9e7789 225px,#9e6377 236px,#9e5166 249px,#9e4258 263px,#9e2941 297px,#9e152f 342px,#9e001c 431px,#9e0012 519px,#9e000b 633px)"></i><i style="background:linear-gradient(90deg,#009e73 11px,#009e82 85px,#009e93 146px,#179e97 158px,#3b9e9e 174px,#9e8a9d 217px,#9e7388 227px,#9e6076 238px,#9e4e65 251px,#9e3f58 265px,#9e2741 299px,#9e142f 344px,#9e001d 430px,#9e0013 517px,#9e000b 632px)"></i><i style="background:linear-gradient(90deg,#009e75 11px,#009e84 86px,#019e96 147px,#2f9e9e 169px,#9e879d 218px,#9e7188 228px,#9e5e76 239px,#9e4d66 252px,#9e3e58 266px,#9e2641 301px,#9e1330 345px,#9e001d 429px,#9e0013 516px,#9e000b 631px)"></i><i style="background:linear-gradient(90deg,#009e76 12px,#009e85 86px,#009e98 147px,#219e9e 163px,#9e849d 219px,#9e6e88 229px,#9e5c77 240px,#9e3d59 267px,#9e2542 302px,#9e1230 347px,#9e001e 428px,#9e0014 515px,#9e000c 630px)"></i><i style="background:linear-gradient(90deg,#009e78 12px,#009e87 86px,#009e9a 147px,#149e9e 157px,#52929e 186px,#9e819d 220px,#9e6c88 230px,#9e5a77 241px,#9e3c59 268px,#9e2442 303px,#9e1230 348px,#9e001f 427px,#9e0014 514px,#9e000c 629px)"></i><i style="background:linear-gradient(90deg,#009e79 12px,#009e89 86px,#009e9d 147px,#46919e 181px,#9e7f9d 221px,#9e6a89 231px,#9e5877 242px,#9e3b5a 269px,#9e2343 304px,#9e1131 349px,#9e001f 426px,#9e0015 513px,#9e000c 628px)"></i><i style="background:linear-gradient(90deg,#009e7b 13px,#009e8a 81px,#009d9e 147px,#458f9e 181px,#9e7c9d 222px,#9e6889 232px,#9e5778 243px,#9e3959 271px,#9e2243 306px,#9e1131 351px,#9e0020 425px,#9e0015 512px,#9e000d 627px)"></i><i style="background:linear-gradient(90deg,#009e7c 13px,#009e8c 81px,#009e9e 138px,#009b9e 147px,#438d9e 181px,#9e799d 223px,#9e6689 233px,#9e5578 244px,#9e385a 272px,#9e2143 307px,#9e1031 352px,#9e0021 424px,#9e0016 511px,#9e000d 626px)"></i><i style="background:linear-gradient(90deg,#009e7e 13px,#009e8d 78px,#009e9e 132px,#00989e 147px,#408b9e 180px,#9e779d 224px,#9e6489 234px,#9e5378 245px,#9e375a 273px,#9e2144 308px,#9e0f31 354px,#9e0022 423px,#9e0016 510px,#9e000e 625px)"></i><i style="background:linear-gradient(90deg,#009e80 14px,#009e8e 74px,#009e9e 126px,#00969e 148px,#47879e 184px,#9e749d 225px,#9e628a 235px,#9e5077 247px,#9e355b 274px,#9e2044 310px,#9e0f32 355px,#9e0022 422px,#9e0017 509px,#9e000e 624px)"></i><i style="background:linear-gradient(90deg,#009e81 14px,#009e8f 71px,#009e9e 120px,#00949e 148px,#48859e 185px,#9e729d 226px,#9e608a 236px,#9e4f78 248px,#9e345b 275px,#9e1f44 311px,#9e0e32 356px,#9e0023 421px,#9e0017 508px,#9e000e 623px)"></i><i style="background:linear-gradient(90deg,#009e83 14px,#009e9e 114px,#00919e 148px,#47839e 185px,#9e709d 227px,#9e5e8a 237px,#9e4d78 249px,#9e335b 277px,#9e1e44 313px,#9e0d32 358px,#9e0024 420px,#9e0018 507px,#9e000f 622px)"></i><i style="background:linear-gradient(90deg,#009e85 15px,#009e9e 108px,#008f9e 148px,#46819e 185px,#9e6d9d 228px,#9e5c8a 238px,#9e4c78 250px,#9e325b 278px,#9e1d44 314px,#9e0d33 359px,#9e0025 419px,#9e0018 506px,#9e000f 621px)"></i><i style="background:linear-gradient(90deg,#009e86 15px,#009e9e 102px,#008d9e 148px,#437f9e 184px,#9e6b9d 229px,#9e4d7b 249px,#9e3460 274px,#9e214a 305px,#9e1239 343px,#9e0025 418px,#9e0019 505px,#9e000f 620px)"></i><i style="background:linear-gradient(90deg,#009e88 15px,#009e9e 96px,#008b9e 148px,#427d9e 184px,#9e699d 230px,#9e4b7b 250px,#9e3360 275px,#9e204b 306px,#9e1139 344px,#9e0026 417px,#9e0019 504px,#9e0010 619px)"></i><i style="background:linear-gradient(90deg,#009e8a 16px,#009e9e 90px,#00899e 149px,#497a9e 188px,#9e679d 231px,#9e4a7c 251px,#9e3261 276px,#9e1f4b 307px,#9e113a 345px,#9e0027 416px,#9e001a 503px,#9e0010 618px)"></i><i style="background:linear-gradient(90deg,#009e8b 16px,#009e9e 84px,#00879e 149px,#49779e 189px,#9e659d 232px,#9e487c 252px,#9e3161 277px,#9e1f4c 308px,#9e103a 346px,#9e0028 415px,#9e001a 502px,#9e0011 617px)"></i><i style="background:linear-gradient(90deg,#009e8d 16px,#009e9e 78px,#00859e 149px,#48769e 189px,#9e629d 233px,#9e477c 253px,#9e3062 278px,#9e1e4c 309px,#9e0f3b 347px,#9e0028 414px,#9e001b 501px,#9e0011 616px)"></i><i style="background:linear-gradient(90deg,#009e8f 17px,#009e9e 72px,#00839e 149px,#47749e 189px,#9e609d 234px,#9e457d 254px,#9e2f62 279px,#9e1d4c 310px,#9e0f3b 348px,#9e0029 413px,#9e001c 500px,#9e0011 615px)"></i><i style="background:linear-gradient(90deg,#009e90 17px,#009e9e 66px,#00829e 149px,#44739e 188px,#9e5e9d 235px,#9e447d 255px,#9e2e62 280px,#9e1d4d 311px,#9e0e3c 349px,#9e002a 412px,#9e001c 499px,#9e0012 614px)"></i><i style="background:linear-gradient(90deg,#009e92 18px,#009e9e 60px,#00809e 149px,#43719e 188px,#9e5c9d 236px,#9e437d 256px,#9e2d63 281px,#9e1c4d 312px,#9e0e3c 350px,#9e002b 411px,#9e001d 498px,#9e0012 613px)"></i><i style="background:linear-gradient(90deg,#009e94 18px,#009e9e 54px,#017e9e 150px,#4a6e9e 192px,#9e5b9d 237px,#9e417d 257px,#9e2c63 282px,#9e1b4e 313px,#9e0d3c 351px,#9e002b 411px,#9e001d 497px,#9e0013 612px)"></i><i style="background:linear-gradient(90deg,#009e96 18px,#009e9e 48px,#007c9e 150px,#496c9e 192px,#9e599d 238px,#9e407e 258px,#9e2b64 283px,#9e1a4e 314px,#9e0d3d 351px,#9e002c 410px,#9e001e 496px,#9e0013 611px)"></i><i style="background:linear-gradient(90deg,#009e98 19px,#009e9e 42px,#007a9e 150px,#496a9e 193px,#9e579d 239px,#9e3f7e 259px,#9e2a64 284px,#9e1a4f 315px,#9e0d3e 352px,#9e002d 409px,#9e001e 495px,#9e0013 610px)"></i><i style="background:linear-gradient(90deg,#009e99 19px,#009e9e 36px,#00799e 150px,#47699e 192px,#9e559d 240px,#9e3d7e 260px,#9e2964 285px,#9e194f 316px,#9e0c3e 353px,#9e002e 408px,#9e001f 494px,#9e0014 610px)"></i><i style="background:linear-gradient(90deg,#009e9b 19px,#009b9e 39px,#00779e 150px,#46679e 192px,#9e539d 241px,#9e3c7e 261px,#9e2865 286px,#9e184f 317px,#9e0c3e 354px,#9e002f 407px,#9e0020 493px,#9e0014 609px)"></i><i style="background:linear-gradient(90deg,#009e9d 20px,#00769e 150px,#45669e 192px,#9e519d 242px,#9e3b7f 262px,#9e2865 287px,#9e1850 318px,#9e0b3f 355px,#9e0030 406px,#9e0020 492px,#9e0014 608px)"></i><i style="background:linear-gradient(90deg,#009e9e 20px,#01749e 151px,#4b639e 196px,#9e509d 243px,#9e397f 263px,#9e2765 288px,#9e1750 319px,#9e0b3f 356px,#9e0030 405px,#9e0021 491px,#9e0015 607px)"></i><i style="background:linear-gradient(90deg,#009c9e 21px,#00729e 151px,#4a629e 196px,#9e4e9d 244px,#9e387f 264px,#9e2666 289px,#9e1751 320px,#9e0a40 357px,#9e0031 404px,#9e0021 490px,#9e0015 606px)"></i><i style="background:linear-gradient(90deg,#009a9e 21px,#00719e 151px,#4a609e 197px,#9e4c9d 245px,#9e377f 265px,#9e2566 290px,#9e1651 321px,#9e0a40 358px,#9e0032 402px,#9e0027 458px,#9e0016 605px)"></i><i style="background:linear-gradient(90deg,#00989e 21px,#006f9e 151px,#485f9e 196px,#9e4b9d 246px,#9e3680 266px,#9e2466 291px,#9e1652 321px,#9e0a41 358px,#9e0033 401px,#9e0027 457px,#9e0016 604px)"></i><i style="background:linear-gradient(90deg,#00969e 22px,#006e9e 151px,#475e9e 196px,#9e499d 247px,#9e3580 267px,#9e2367 292px,#9e1552 322px,#9e0941 359px,#9e0034 401px,#9e0028 458px,#9e0017 603px)"></i><i style="background:linear-gradient(90deg,#00959e 22px,#006c9e 151px,#465c9e 196px,#9e489d 248px,#9e3380 268px,#9e2267 293px,#9e1453 323px,#9e0941 360px,#9e0035 400px,#9e0028 458px,#9e0017 602px)"></i><i style="background:linear-gradient(90deg,#00939e 23px,#016b9e 152px,#4a5a9e 199px,#9e469d 249px,#9e3280 269px,#9e2267 294px,#9e1453 324px,#9e0842 361px,#9e0036 399px,#9e0029 458px,#9e0017 601px)"></i><i style="background:linear-gradient(90deg,#00919e 23px,#00699e 152px,#4b589e 200px,#9e459d 250px,#9e3181 270px,#9e2168 295px,#9e1353 325px,#9e0842 362px,#9e0037 398px,#9e0029 459px,#9e0018 600px)"></i><i style="background:linear-gradient(90deg,#00909e 23px,#00689e 152px,#4a579e 200px,#9e439d 251px,#9e3081 271px,#9e2068 296px,#9e1354 326px,#9e0843 362px,#9e0037 397px,#9e002a 458px,#9e0018 599px)"></i><i style="background:linear-gradient(90deg,#008e9e 24px,#00679e 152px,#49569e 200px,#9e429e 252px,#9e2f81 272px,#9e1f68 297px,#9e1254 327px,#9e0743 363px,#9e0038 396px,#9e002a 459px,#9e0019 598px)"></i><i style="background:linear-gradient(90deg,#008d9e 24px,#00659e 152px,#48559e 200px,#9e409e 253px,#9e2e81 273px,#9e1e69 298px,#9e1154 328px,#9e0744 364px,#9e0039 395px,#9e002a 459px,#9e0019 597px)"></i><i style="background:linear-gradient(90deg,#008b9e 24px,#00649e 152px,#45549e 199px,#9e3f9e 254px,#9e2d81 274px,#9e1d69 299px,#9e1155 329px,#9e0644 365px,#9e003a 394px,#9e002b 459px,#9e0019 596px)"></i><i style="background:linear-gradient(90deg,#00899e 25px,#01639e 153px,#4b519e 203px,#9e3d9e 255px,#9e2c82 275px,#9e1d69 300px,#9e1055 330px,#9e0645 365px,#9e003b 393px,#9e002b 459px,#9e001a 595px)"></i><i style="background:linear-gradient(90deg,#00889e 25px,#00619e 153px,#4a509e 203px,#9e3c9e 256px,#9e2b82 276px,#9e1c6a 301px,#9e1055 331px,#9e0545 366px,#9e003c 392px,#9e002c 460px,#9e001a 594px)"></i><i style="background:linear-gradient(90deg,#00869e 26px,#00609e 153px,#4b4f9e 204px,#9e3b9e 257px,#9e2a82 277px,#9e1b6a 302px,#9e0f56 332px,#9e0546 367px,#9e003d 391px,#9e002c 460px,#9e001b 593px)"></i><i style="background:linear-gradient(90deg,#00859e 26px,#005f9e 153px,#4a4e9e 204px,#9e399e 258px,#9e2982 278px,#9e1a6a 303px,#9e0e56 333px,#9e0546 368px,#9e003e 390px,#9e002d 460px,#9e001b 592px)"></i><i style="background:linear-gradient(90deg,#00849e 26px,#005e9e 153px,#494d9e 204px,#9e389e 259px,#9e2781 280px,#9e1a6a 304px,#9e0e57 333px,#9e0447 368px,#9e003f 389px,#9e002d 460px,#9e001c 591px)"></i><i style="background:linear-gradient(90deg,#00829e 27px,#005d9e 153px,#464c9e 203px,#9e379e 260px,#9e2681 281px,#9e196b 305px,#9e0e57 334px,#9e0447 369px,#9e0040 388px,#9e002e 460px,#9e001c 590px)"></i><i style="background:linear-gradient(90deg,#00819e 27px,#015b9e 154px,#4c499e 207px,#9e359e 261px,#9e2582 282px,#9e186b 306px,#9e0d58 335px,#9e0447 370px,#9e0041 387px,#9e002e 461px,#9e001d 589px)"></i><i style="background:linear-gradient(90deg,#007f9e 28px,#005a9e 154px,#4b489e 207px,#9e349e 262px,#9e2482 283px,#9e176b 307px,#9e0c58 336px,#9e0348 371px,#9e0042 386px,#9e002f 461px,#9e001d 588px)"></i><i style="background:linear-gradient(90deg,#007e9e 28px,#00599e 154px,#4b479e 208px,#9e339e 263px,#9e2382 284px,#9e176c 308px,#9e0c58 337px,#9e0348 371px,#9e0043 385px,#9e002f 461px,#9e001d 587px)"></i><i style="background:linear-gradient(90deg,#007c9e 29px,#00589e 154px,#4a469e 208px,#9e329e 264px,#9e2282 285px,#9e166c 309px,#9e0b59 338px,#9e0249 372px,#9e0044 384px,#9e0030 461px,#9e001e 586px)"></i><i style="background:linear-gradient(90deg,#007b9e 29px,#00579e 154px,#48459e 207px,#9e319e 265px,#9e2282 286px,#9e156c 310px,#9e0b59 339px,#9e0249 373px,#9e003c 413px,#9e0030 461px,#9e001e 585px)"></i><i style="background:linear-gradient(90deg,#007a9e 29px,#00569e 154px,#47459e 207px,#9e2f9e 266px,#9e2182 287px,#9e156c 311px,#9e0b5a 339px,#9e024a 373px,#9e003c 413px,#9e0031 461px,#9e001f 584px)"></i><i style="background:linear-gradient(90deg,#00799e 30px,#01559e 155px,#4b439e 210px,#9e2e9e 267px,#9e2083 288px,#9e146d 312px,#9e0a5a 340px,#9e014a 374px,#9e003d 414px,#9e0031 461px,#9e001f 583px)"></i><i style="background:linear-gradient(90deg,#00779e 30px,#00549e 155px,#4b419e 211px,#9e2d9e 268px,#9e1f83 289px,#9e136d 313px,#9e0a5a 341px,#9e014a 375px,#9e003d 415px,#9e0031 462px,#9e0020 582px)"></i><i style="background:linear-gradient(90deg,#00769e 31px,#00539e 155px,#4b409e 211px,#9e2c9e 269px,#9e1f84 289px,#9e136e 313px,#9e095b 341px,#9e014b 375px,#9e003e 414px,#9e0032 461px,#9e0020 581px)"></i><i style="background:linear-gradient(90deg,#00759e 31px,#00529e 155px,#4b3f9e 212px,#9e2b9e 270px,#9e1e84 290px,#9e126e 314px,#9e095c 342px,#9e004b 376px,#9e003e 415px,#9e0033 461px,#9e0021 580px)"></i><i style="background:linear-gradient(90deg,#00749e 31px,#00519e 155px,#493f9e 211px,#9e2a9e 271px,#9e1d84 291px,#9e126e 315px,#9e085c 343px,#9e004c 377px,#9e003e 416px,#9e0033 462px,#9e0021 579px)"></i><i style="background:linear-gradient(90deg,#00729e 32px,#00509e 155px,#483e9e 211px,#9e299e 272px,#9e1c85 292px,#9e116f 316px,#9e085c 344px,#9e004c 377px,#9e0034 461px,#9e0022 578px)"></i><i style="background:linear-gradient(90deg,#00719e 32px,#014e9e 156px,#4c3c9e 214px,#9e289e 273px,#9e1b85 293px,#9e106f 317px,#9e075d 345px,#9e004d 378px,#9e0034 462px,#9e0022 577px)"></i><i style="background:linear-gradient(90deg,#00709e 33px,#004e9e 156px,#4b3b9e 214px,#9e279e 274px,#9e1a85 294px,#9e106f 318px,#9e075d 346px,#9e004d 379px,#9e0034 462px,#9e0022 577px)"></i><i style="background:linear-gradient(90deg,#006f9e 33px,#004d9e 156px,#4b3a9e 215px,#9e269e 275px,#9e1a85 295px,#9e0f6f 319px,#9e065d 347px,#9e004d 380px,#9e0035 463px,#9e0023 576px)"></i><i style="background:linear-gradient(90deg,#006e9e 34px,#004c9e 156px,#4b399e 215px,#9e259e 276px,#9e1985 296px,#9e0f70 320px,#9e065d 348px,#9e004e 380px,#9e0035 462px,#9e0023 575px)"></i><i style="background:linear-gradient(90deg,#006d9e 34px,#004b9e 156px,#4a399e 215px,#9e249e 277px,#9e1885 297px,#9e0e70 321px,#9e055e 349px,#9e004e 381px,#9e0036 463px,#9e0024 574px)"></i><i style="background:linear-gradient(90deg,#006c9e 34px,#004a9e 156px,#49389e 215px,#9e239e 278px,#9e1786 298px,#9e0d70 322px,#9e055f 349px,#9e004f 381px,#9e0036 462px,#9e0024 573px)"></i><i style="background:linear-gradient(90deg,#006a9e 35px,#01499e 157px,#4c369e 218px,#9e229e 279px,#9e1686 299px,#9e0d70 323px,#9e0055 369px,#9e004f 382px,#9e0037 463px,#9e0025 572px)"></i><i style="background:linear-gradient(90deg,#00699e 35px,#00489e 157px,#4b359e 218px,#9e219e 280px,#9e1686 300px,#9e0c71 324px,#9e0056 368px,#9e0050 383px,#9e0037 463px,#9e0025 571px)"></i><i style="background:linear-gradient(90deg,#00689e 36px,#00479e 157px,#4c349e 219px,#9e209e 281px,#9e1586 301px,#9e0c72 324px,#9e0058 367px,#9e0050 383px,#9e0038 463px,#9e0026 570px)"></i><i style="background:linear-gradient(90deg,#00679e 36px,#00469e 157px,#4b349e 219px,#9e1f9e 282px,#9e1486 302px,#9e0b72 325px,#9e0059 366px,#9e0051 384px,#9e0038 463px,#9e0026 569px)"></i><i style="background:linear-gradient(90deg,#00669e 37px,#00469e 157px,#4b339e 219px,#9e1e9e 283px,#9e1386 303px,#9e0b72 326px,#9e005a 365px,#9e0051 385px,#9e0039 463px,#9e0027 568px)"></i><i style="background:linear-gradient(90deg,#00659e 37px,#00459e 157px,#4a329e 219px,#9e1d9e 284px,#9e1386 304px,#9e0a72 327px,#9e005b 364px,#9e0052 385px,#9e0039 463px,#9e0027 567px)"></i><i style="background:linear-gradient(90deg,#00649e 38px,#01449e 158px,#4c319e 221px,#9e1c9e 285px,#9e1287 305px,#9e0973 328px,#9e005d 363px,#9e0052 386px,#9e003a 463px,#9e0028 566px)"></i><i style="background:linear-gradient(90deg,#00639e 38px,#00439e 158px,#4c309e 222px,#9e1b9e 286px,#9e1187 306px,#9e0973 329px,#9e005e 362px,#9e0053 386px,#9e003a 463px,#9e0028 565px)"></i><i style="background:linear-gradient(90deg,#00629e 38px,#00429e 158px,#4b2f9e 222px,#9e1a9e 287px,#9e1187 307px,#9e0873 330px,#9e005f 361px,#9e0053 387px,#9e003b 463px,#9e0029 564px)"></i><i style="background:linear-gradient(90deg,#00619e 39px,#00419e 158px,#4c2e9e 223px,#9e199e 288px,#9e1087 308px,#9e0873 331px,#9e0061 360px,#9e0054 387px,#9e003b 463px,#9e0029 563px)"></i><i style="background:linear-gradient(90deg,#00609e 39px,#00419e 158px,#4b2e9e 223px,#9e199e 289px,#9e0f87 309px,#9e0773 332px,#9e0062 359px,#9e0054 388px,#9e003c 463px,#9e002a 562px)"></i><i style="background:linear-gradient(90deg,#005f9e 40px,#00409e 158px,#492d9e 222px,#9e189e 290px,#9e0f87 310px,#9e0774 333px,#9e0063 358px,#9e0054 389px,#9e003c 463px,#9e002a 561px)"></i><i style="background:linear-gradient(90deg,#005e9e 40px,#013f9e 159px,#4c2c9e 225px,#9e179e 291px,#9e0e87 311px,#9e0675 333px,#9e0065 357px,#9e0055 389px,#9e003d 463px,#9e002b 560px)"></i><i style="background:linear-gradient(90deg,#005d9e 41px,#003e9e 159px,#4d2b9e 226px,#9e169e 292px,#9e0d87 312px,#9e0675 334px,#9e0066 357px,#9e0055 390px,#9e003d 463px,#9e002b 559px)"></i><i style="background:linear-gradient(90deg,#005c9e 41px,#003e9e 159px,#4c2a9e 226px,#9e159e 293px,#9e0d88 313px,#9e0575 335px,#9e0067 356px,#9e0056 390px,#9e003e 463px,#9e002c 558px)"></i><i style="background:linear-gradient(90deg,#005b9e 42px,#003d9e 159px,#4d299e 227px,#9e149e 294px,#9e0c88 314px,#9e0575 336px,#9e0068 355px,#9e0056 391px,#9e003e 463px,#9e002c 557px)"></i><i style="background:linear-gradient(90deg,#005a9e 42px,#003c9e 159px,#4c299e 227px,#9e149e 295px,#9e0b88 315px,#9e0475 337px,#9e006a 354px,#9e0057 391px,#9e003f 462px,#9e002d 556px)"></i><i style="background:linear-gradient(90deg,#00599e 43px,#003b9e 159px,#4a289e 226px,#9e139e 296px,#9e0b88 316px,#9e0476 338px,#9e006b 353px,#9e0057 392px,#9e003f 463px,#9e002e 555px)"></i><i style="background:linear-gradient(90deg,#00589e 43px,#003b9e 159px,#49289e 226px,#9e129e 297px,#9e0a89 316px,#9e0376 338px,#9e006d 352px,#9e0058 392px,#9e0040 462px,#9e002e 554px)"></i><i style="background:linear-gradient(90deg,#00579e 44px,#003a9e 160px,#4c269e 229px,#9e119e 298px,#9e0a89 317px,#9e0377 339px,#9e006e 351px,#9e0058 393px,#9e0041 463px,#9e002f 553px)"></i><i style="background:linear-gradient(90deg,#00569e 44px,#00399e 160px,#4d269e 230px,#9e119e 299px,#9e0989 318px,#9e0277 340px,#9e0059 393px,#9e0041 462px,#9e002f 552px)"></i><i style="background:linear-gradient(90deg,#00569e 44px,#00399e 160px,#4c259e 230px,#9e109e 300px,#9e0989 319px,#9e0277 341px,#9e0059 394px,#9e0042 462px,#9e0030 551px)"></i><i style="background:linear-gradient(90deg,#00559e 45px,#00389e 160px,#4c249e 231px,#9e0f9e 301px,#9e0889 320px,#9e0177 342px,#9e005a 394px,#9e0042 462px,#9e0030 550px)"></i><i style="background:linear-gradient(90deg,#00549e 45px,#00379e 160px,#4b249e 230px,#9e0e9e 302px,#9e078a 321px,#9e0177 343px,#9e005a 395px,#9e0043 462px,#9e0031 549px)"></i><i style="background:linear-gradient(90deg,#00539e 46px,#00379e 160px,#4a239e 230px,#9e0e9e 303px,#9e078a 322px,#9e0078 344px,#9e005a 396px,#9e0043 463px,#9e0031 548px)"></i><i style="background:linear-gradient(90deg,#00529e 46px,#00369e 161px,#4d229e 233px,#9e0d9e 304px,#9e068a 323px,#9e0078 344px,#9e005b 396px,#9e0044 462px,#9e0032 547px)"></i><i style="background:linear-gradient(90deg,#00519e 47px,#00359e 161px,#4c229e 233px,#9e0c9e 305px,#9e068a 324px,#9e0079 345px,#9e005c 396px,#9e0044 462px,#9e0033 546px)"></i><i style="background:linear-gradient(90deg,#00519e 47px,#00359e 161px,#4c219e 234px,#9e0c9e 306px,#9e058a 325px,#9e0079 346px,#9e005c 397px,#9e0045 462px,#9e0033 545px)"></i><i style="background:linear-gradient(90deg,#00509e 48px,#00349e 161px,#4c209e 234px,#9e0b9e 307px,#9e048a 326px,#9e0079 347px,#9e005c 397px,#9e0045 462px,#9e0034 544px)"></i><i style="background:linear-gradient(90deg,#004f9e 48px,#00339e 161px,#4b209e 234px,#9e0a9e 308px,#9e048a 327px,#9e0079 348px,#9e005d 398px,#9e0046 462px,#9e0034 543px)"></i><i style="background:linear-gradient(90deg,#004e9e 49px,#00339e 161px,#4b1f9e 234px,#9e0a9e 309px,#9e038a 328px,#9e0079 349px,#9e005d 399px,#9e0046 463px,#9e0035 543px)"></i><i style="background:linear-gradient(90deg,#004d9e 49px,#00329e 162px,#4d1e9e 237px,#9e099e 310px,#9e0083 338px,#9e007a 349px,#9e005e 399px,#9e0047 462px,#9e0035 542px)"></i><i style="background:linear-gradient(90deg,#004c9e 50px,#00319e 162px,#4d1e9e 237px,#9e089e 311px,#9e0084 338px,#9e007a 350px,#9e005e 400px,#9e0048 462px,#9e0036 541px)"></i><i style="background:linear-gradient(90deg,#004c9e 50px,#00319e 162px,#4d1d9e 238px,#9e089e 312px,#9e0085 337px,#9e007b 351px,#9e005e 400px,#9e0048 462px,#9e0036 540px)"></i><i style="background:linear-gradient(90deg,#004b9e 51px,#00309e 162px,#4c1c9e 238px,#9e079e 313px,#9e0087 336px,#9e007b 352px,#9e005f 401px,#9e0049 462px,#9e0037 539px)"></i><i style="background:linear-gradient(90deg,#004a9e 51px,#00309e 162px,#4c1c9e 238px,#9e069e 314px,#9e0089 335px,#9e007b 353px,#9e005f 401px,#9e0049 462px,#9e0038 538px)"></i><i style="background:linear-gradient(90deg,#00499e 52px,#002f9e 162px,#4a1c9e 237px,#9e069e 315px,#9e008b 334px,#9e007c 353px,#9e0060 401px,#9e004a 461px,#9e0038 537px)"></i><i style="background:linear-gradient(90deg,#00499e 52px,#002f9e 163px,#4d1b9e 240px,#9e059e 316px,#9e008d 333px,#9e007c 354px,#9e0060 402px,#9e004a 462px,#9e0039 536px)"></i><i style="background:linear-gradient(90deg,#00489e 53px,#002e9e 163px,#4d1a9e 241px,#9e049e 317px,#9e008f 332px,#9e007c 355px,#9e0061 402px,#9e004b 461px,#9e0039 535px)"></i><i style="background:linear-gradient(90deg,#00479e 53px,#002d9e 163px,#4c199e 241px,#9e049e 318px,#9e0091 331px,#9e007c 356px,#9e0061 403px,#9e004c 461px,#9e003a 534px)"></i><i style="background:linear-gradient(90deg,#00469e 54px,#002d9e 163px,#4d199e 242px,#9e039e 319px,#9e0093 330px,#9e007d 356px,#9e0062 403px,#9e004c 461px,#9e003b 533px)"></i><i style="background:linear-gradient(90deg,#00469e 54px,#002c9e 163px,#4c189e 242px,#9e039e 320px,#9e007c 358px,#9e0062 404px,#9e004d 461px,#9e003b 532px)"></i><i style="background:linear-gradient(90deg,#00459e 55px,#002c9e 163px,#4b189e 241px,#9e029e 321px,#9e007d 358px,#9e0063 404px,#9e004d 461px,#9e003c 531px)"></i><i style="background:linear-gradient(90deg,#00449e 55px,#012b9e 164px,#4d179e 244px,#9e019e 322px,#9e007d 359px,#9e0063 405px,#9e004e 461px,#9e003d 530px)"></i><i style="background:linear-gradient(90deg,#00449e 56px,#002b9e 164px,#4c179e 244px,#9e019e 323px,#9e007e 360px,#9e0064 405px,#9e004e 461px,#9e003d 529px)"></i><i style="background:linear-gradient(90deg,#00439e 56px,#002a9e 164px,#4d169e 245px,#9e009e 324px,#9e007e 360px,#9e0064 405px,#9e004f 460px,#9e003e 528px)"></i><i style="background:linear-gradient(90deg,#00429e 57px,#002a9e 164px,#4d159e 246px,#9e009e 325px,#9e007f 361px,#9e0065 406px,#9e0050 460px,#9e003e 527px)"></i><i style="background:linear-gradient(90deg,#00429e 57px,#00299e 164px,#4d159e 246px,#9e009e 326px,#9e007f 362px,#9e0065 406px,#9e0050 460px,#9e003f 526px)"></i><i style="background:linear-gradient(90deg,#00419e 58px,#00299e 164px,#4b159e 245px,#9e009e 327px,#9e007f 363px,#9e0065 407px,#9e0051 460px,#9e0040 525px)"></i><i style="background:linear-gradient(90deg,#00409e 58px,#01289e 165px,#4e149e 248px,#9e009e 328px,#9e007f 364px,#9e0066 407px,#9e0051 460px,#9e0040 524px)"></i><i style="background:linear-gradient(90deg,#003f9e 59px,#00289e 165px,#4d139e 248px,#95009e 320px,#9e009e 329px,#9e0080 364px,#9e0067 407px,#9e0052 459px,#9e0041 523px)"></i><i style="background:linear-gradient(90deg,#003f9e 60px,#00279e 165px,#4d139e 249px,#93009e 319px,#9e009e 330px,#9e0080 365px,#9e0067 408px,#9e0052 460px,#9e0042 522px)"></i><i style="background:linear-gradient(90deg,#003e9e 60px,#00279e 165px,#4d129e 249px,#91009e 318px,#9e009e 331px,#9e0080 366px,#9e0068 408px,#9e0053 459px,#9e0042 521px)"></i><i style="background:linear-gradient(90deg,#003d9e 61px,#00269e 165px,#46149e 242px,#8f009e 317px,#9e009e 332px,#9e0081 366px,#9e0068 408px,#9e0054 459px,#9e0043 520px)"></i><i style="background:linear-gradient(90deg,#003d9e 61px,#00269e 165px,#43149e 240px,#8d009e 316px,#9e009e 333px,#9e0081 367px,#9e0068 409px,#9e0054 459px,#9e0044 519px)"></i><i style="background:linear-gradient(90deg,#003c9e 62px,#01259e 166px,#45139e 242px,#8b009e 315px,#9e009e 334px,#9e0081 368px,#9e0069 409px,#9e0055 458px,#9e0044 518px)"></i><i style="background:linear-gradient(90deg,#003c9e 62px,#00259e 166px,#43139e 241px,#89009e 314px,#9e009e 335px,#9e0081 369px,#9e0069 410px,#9e0055 459px,#9e0045 517px)"></i><i style="background:linear-gradient(90deg,#003b9e 63px,#00249e 166px,#43139e 241px,#87009e 313px,#9e009e 336px,#9e0081 370px,#9e006a 410px,#9e0056 458px,#9e0046 516px)"></i><i style="background:linear-gradient(90deg,#003a9e 63px,#00249e 166px,#41129e 240px,#85009e 312px,#9e009e 337px,#9e0082 370px,#9e006b 410px,#9e0057 458px,#9e0046 515px)"></i><i style="background:linear-gradient(90deg,#003a9e 64px,#00249e 166px,#41129e 240px,#84009e 311px,#9e009e 338px,#9e0082 371px,#9e006b 411px,#9e0057 458px,#9e0047 514px)"></i><i style="background:linear-gradient(90deg,#00399e 64px,#00239e 166px,#3f129e 238px,#82009e 310px,#9e009e 339px,#9e0082 372px,#9e006c 411px,#9e0058 458px,#9e0048 513px)"></i><i style="background:linear-gradient(90deg,#00389e 65px,#01229e 167px,#3f129e 239px,#80009e 309px,#9e009e 340px,#9e0083 372px,#9e006c 411px,#9e0059 457px,#9e0049 512px)"></i><i style="background:linear-gradient(90deg,#00389e 66px,#00229e 167px,#3f119e 239px,#7e009e 308px,#9e009e 341px,#9e0083 373px,#9e006c 412px,#9e0059 457px,#9e0049 511px)"></i><i style="background:linear-gradient(90deg,#00379e 66px,#00229e 167px,#3d119e 238px,#7c009e 307px,#9e009e 342px,#9e0084 374px,#9e006d 412px,#9e005a 457px,#9e004a 510px)"></i><i style="background:linear-gradient(90deg,#00379e 67px,#00219e 167px,#3d119e 238px,#7b009e 306px,#9e009e 343px,#9e0084 375px,#9e006d 413px,#9e005b 457px,#9e004a 510px)"></i><i style="background:linear-gradient(90deg,#00369e 67px,#00219e 167px,#79009e 305px,#9e009e 344px,#9e0084 376px,#9e006e 413px,#9e005b 457px,#9e004b 509px)"></i><i style="background:linear-gradient(90deg,#00359e 68px,#00209e 167px,#77009e 304px,#9e009e 345px,#9e0085 376px,#9e006f 413px,#9e005c 457px,#9e004c 508px)"></i><i style="background:linear-gradient(90deg,#00359e 68px,#01209e 168px,#76009e 303px,#9e009e 346px,#9e0085 377px,#9e006f 414px,#9e005c 457px,#9e004d 507px)"></i><i style="background:linear-gradient(90deg,#00349e 69px,#001f9e 168px,#74009e 302px,#9e009e 347px,#9e0085 378px,#9e006f 414px,#9e005d 456px,#9e004d 506px)"></i><i style="background:linear-gradient(90deg,#00349e 69px,#001f9e 168px,#72009e 301px,#9e009e 348px,#9e0086 378px,#9e0070 414px,#9e005e 456px,#9e004e 505px)"></i><i style="background:linear-gradient(90deg,#00339e 70px,#001f9e 168px,#72009e 301px,#9e009e 349px,#9e0086 379px,#9e0070 415px,#9e005e 456px,#9e004f 504px)"></i><i style="background:linear-gradient(90deg,#00339e 71px,#001e9e 168px,#70009e 300px,#9e009e 350px,#9e0086 380px,#9e0071 415px,#9e005f 456px,#9e0050 503px)"></i><i style="background:linear-gradient(90deg,#00329e 71px,#001e9e 168px,#6e009e 299px,#9e009e 351px,#9e0086 381px,#9e0072 415px,#9e0060 455px,#9e0050 502px)"></i><i style="background:linear-gradient(90deg,#00319e 72px,#011d9e 169px,#6d009e 298px,#9e009e 352px,#9e0086 382px,#9e0072 416px,#9e0060 455px,#9e0051 501px)"></i><i style="background:linear-gradient(90deg,#00319e 72px,#001d9e 169px,#6b009e 297px,#9e009e 353px,#9e0087 382px,#9e0072 416px,#9e0061 455px,#9e0052 500px)"></i><i style="background:linear-gradient(90deg,#00309e 73px,#001d9e 169px,#6a009e 296px,#9e009e 354px,#9e0087 383px,#9e0073 416px,#9e0061 455px,#9e0053 499px)"></i><i style="background:linear-gradient(90deg,#00309e 73px,#001c9e 169px,#68009e 295px,#9e009e 355px,#9e0088 383px,#9e0074 416px,#9e0062 454px,#9e0053 498px)"></i><i style="background:linear-gradient(90deg,#002f9e 74px,#001c9e 169px,#67009e 294px,#9e009e 356px,#9e0088 384px,#9e0074 417px,#9e0063 454px,#9e0054 497px)"></i><i style="background:linear-gradient(90deg,#002f9e 75px,#001c9e 169px,#65009e 293px,#9e009e 357px,#9e0088 385px,#9e0075 417px,#9e0064 454px,#9e0055 496px)"></i><i style="background:linear-gradient(90deg,#002e9e 75px,#001b9e 169px,#64009e 292px,#9e009e 358px,#9e0088 386px,#9e0075 417px,#9e0065 453px,#9e0056 495px)"></i><i style="background:linear-gradient(90deg,#002e9e 76px,#001b9e 170px,#62009e 291px,#9e009e 359px,#9e0088 387px,#9e0075 418px,#9e0065 453px,#9e0057 494px)"></i><i style="background:linear-gradient(90deg,#002d9e 76px,#001a9e 170px,#61009e 290px,#9e009e 360px,#9e0089 387px,#9e0076 418px,#9e0066 453px,#9e0057 493px)"></i><i style="background:linear-gradient(90deg,#002d9e 77px,#001a9e 170px,#5f009e 289px,#9e009e 361px,#9e0089 388px,#9e0077 418px,#9e0058 492px)"></i><i style="background:linear-gradient(90deg,#002c9e 77px,#001a9e 170px,#5e009e 288px,#9e009e 362px,#9e008a 388px,#9e0077 418px,#9e0059 491px)"></i><i style="background:linear-gradient(90deg,#002c9e 78px,#00199e 170px,#5d009e 287px,#9e009e 363px,#9e008a 389px,#9e0077 419px,#9e005a 490px)"></i><i style="background:linear-gradient(90deg,#002b9e 79px,#00199e 170px,#5b009e 286px,#9e009e 364px,#9e008a 390px,#9e0078 419px,#9e005b 489px)"></i><i style="background:linear-gradient(90deg,#002b9e 79px,#00199e 171px,#5a009e 285px,#9e009e 365px,#9e008b 390px,#9e0079 419px,#9e005c 488px)"></i><i style="background:linear-gradient(90deg,#002a9e 80px,#00189e 171px,#59009e 284px,#9e009e 366px,#9e008b 391px,#9e0079 419px,#9e005c 487px)"></i><i style="background:linear-gradient(90deg,#002a9e 80px,#00189e 171px,#57009e 283px,#9e009e 367px,#9e008b 392px,#9e007a 420px,#9e005d 486px)"></i><i style="background:linear-gradient(90deg,#00299e 81px,#00189e 171px,#56009e 282px,#9e009e 368px,#9e008b 393px,#9e007a 420px,#9e005e 485px)"></i><i style="background:linear-gradient(90deg,#00299e 82px,#00179e 171px,#55009e 281px,#9e009e 369px,#9e007b 420px,#9e005f 484px)"></i><i style="background:linear-gradient(90deg,#00289e 82px,#00179e 171px,#53009e 280px,#9e009e 370px,#9e007c 420px,#9e0060 483px)"></i><i style="background:linear-gradient(90deg,#00289e 83px,#00179e 172px,#52009e 279px,#9e009e 371px,#9e007c 420px,#9e0061 482px)"></i><i style="background:linear-gradient(90deg,#00279e 83px,#00169e 172px,#51009e 278px,#9e009e 372px,#9e007c 421px,#9e0062 481px)"></i><i style="background:linear-gradient(90deg,#00279e 84px,#00169e 172px,#4f009e 277px,#9e009e 373px,#9e007d 421px,#9e0062 480px)"></i><i style="background:linear-gradient(90deg,#00279e 84px,#00169e 172px,#4e009e 276px,#9e009e 374px,#9e007e 421px,#9e0063 479px)"></i><i style="background:linear-gradient(90deg,#00269e 85px,#00159e 172px,#4d009e 275px,#9e009e 375px,#9e007e 421px,#9e0064 478px)"></i><i style="background:linear-gradient(90deg,#00259e 86px,#00159e 172px,#4c009e 274px,#9e009e 376px,#9e007f 422px,#9e0065 477px)"></i><i style="background:linear-gradient(90deg,#00259e 86px,#00159e 173px,#4a009e 273px,#9e009e 377px,#9e007f 422px,#9e0066 476px)"></i><i style="background:linear-gradient(90deg,#00259e 87px,#00149e 173px,#49009e 272px,#9e009e 378px,#9e0080 422px,#9e0067 476px)"></i><i style="background:linear-gradient(90deg,#00249e 87px,#00149e 173px,#48009e 271px,#9e009e 379px,#9e0080 423px,#9e0068 475px)"></i><i style="background:linear-gradient(90deg,#00249e 88px,#00149e 173px,#47009e 270px,#9e009e 380px,#9e0081 423px,#9e0069 474px)"></i><i style="background:linear-gradient(90deg,#00239e 89px,#00139e 173px,#46009e 269px,#9e009e 381px,#9e0081 423px,#9e0069 473px)"></i><i style="background:linear-gradient(90deg,#00239e 89px,#00139e 173px,#45009e 268px,#9e009e 382px,#9e0082 423px,#9e006a 472px)"></i><i style="background:linear-gradient(90deg,#00229e 90px,#00139e 174px,#43009e 267px,#9e009e 383px,#9e0083 423px,#9e006b 471px)"></i><i style="background:linear-gradient(90deg,#00229e 90px,#00129e 174px,#43009e 267px,#9e009e 384px,#9e0083 424px,#9e006c 470px)"></i><i style="background:linear-gradient(90deg,#00229e 91px,#00129e 174px,#42009e 266px,#9e009e 385px,#9e0083 424px,#9e006d 469px)"></i><i style="background:linear-gradient(90deg,#00219e 92px,#00129e 174px,#41009e 265px,#9e009e 386px,#9e0084 424px,#9e006e 468px)"></i><i style="background:linear-gradient(90deg,#00219e 92px,#00129e 174px,#40009e 264px,#9e009e 387px,#9e0085 424px,#9e006f 467px)"></i><i style="background:linear-gradient(90deg,#00209e 93px,#00119e 174px,#3e009e 263px,#9e009e 388px,#9e0085 424px,#9e0070 466px)"></i><i style="background:linear-gradient(90deg,#00209e 93px,#00119e 175px,#3d009e 262px,#9e009e 389px,#9e0086 424px,#9e0071 465px)"></i><i style="background:linear-gradient(90deg,#001f9e 94px,#00119e 175px,#3c009e 261px,#9e009e 390px,#9e0086 425px,#9e0072 464px)"></i><i style="background:linear-gradient(90deg,#001f9e 95px,#00109e 175px,#3b009e 260px,#9e009e 391px,#9e0087 425px,#9e0073 463px)"></i><i style="background:linear-gradient(90deg,#001f9e 95px,#00109e 175px,#3a009e 259px,#9e009e 392px,#9e0088 425px,#9e0074 462px)"></i><i style="background:linear-gradient(90deg,#001e9e 96px,#00109e 175px,#39009e 258px,#9e009e 393px,#9e0088 425px,#9e0075 461px)"></i><i style="background:linear-gradient(90deg,#001e9e 96px,#00109e 175px,#38009e 257px,#9e009e 394px,#9e0089 425px,#9e0076 460px)"></i><i style="background:linear-gradient(90deg,#001d9e 97px,#000f9e 175px,#37009e 256px,#9e009e 395px,#9e008a 425px,#9e0077 459px)"></i><i style="background:linear-gradient(90deg,#001d9e 98px,#000f9e 176px,#36009e 255px,#9e009e 396px,#9e008a 425px,#9e0078 458px)"></i><i style="background:linear-gradient(90deg,#001d9e 98px,#000f9e 176px,#35009e 254px,#9e009e 397px,#9e008a 426px,#9e007a 457px)"></i><i style="background:linear-gradient(90deg,#001c9e 99px,#000e9e 176px,#34009e 253px,#9e009e 398px,#9e007b 456px)"></i><i style="background:linear-gradient(90deg,#001c9e 100px,#000e9e 176px,#33009e 252px,#9e009e 399px,#9e007c 455px)"></i><i style="background:linear-gradient(90deg,#001b9e 100px,#000e9e 176px,#32009e 251px,#9e009e 400px,#9e007d 454px)"></i><i style="background:linear-gradient(90deg,#001b9e 101px,#000e9e 176px,#31009e 250px,#9e009e 401px,#9e007e 453px)"></i><i style="background:linear-gradient(90deg,#001b9e 101px,#000d9e 177px,#30009e 249px,#9e009e 402px,#9e007f 452px)"></i><i style="background:linear-gradient(90deg,#001a9e 102px,#000d9e 177px,#2f009e 248px,#9e009e 403px,#9e0080 451px)"></i><i style="background:linear-gradient(90deg,#001a9e 103px,#000d9e 177px,#2e009e 247px,#9e009e 404px,#9e0081 450px)"></i><i style="background:linear-gradient(90deg,#001a9e 103px,#000d9e 177px,#2d009e 246px,#9e009e 405px,#9e0082 449px)"></i><i style="background:linear-gradient(90deg,#00199e 104px,#000c9e 177px,#2c009e 245px,#9e009e 406px,#9e0084 448px)"></i><i style="background:linear-gradient(90deg,#00199e 104px,#000c9e 177px,#2b009e 244px,#9e009e 407px,#9e0085 447px)"></i><i style="background:linear-gradient(90deg,#00189e 105px,#000c9e 178px,#2a009e 243px,#9e009e 408px,#9e0086 446px)"></i><i style="background:linear-gradient(90deg,#00189e 106px,#000c9e 178px,#29009e 242px,#9e009e 409px,#9e0087 445px)"></i><i style="background:linear-gradient(90deg,#00189e 106px,#000b9e 178px,#28009e 241px,#9e009e 410px,#9e0088 444px)"></i><i style="background:linear-gradient(90deg,#00179e 107px,#000b9e 178px,#28009e 240px,#9e009e 411px,#9e0089 443px)"></i><i style="background:linear-gradient(90deg,#00179e 108px,#000b9e 178px,#27009e 239px,#9e009e 412px,#9e008a 443px)"></i><i style="background:linear-gradient(90deg,#00179e 108px,#000b9e 178px,#26009e 238px,#9e009e 413px,#9e008b 442px)"></i><i style="background:linear-gradient(90deg,#00169e 109px,#000a9e 179px,#25009e 237px,#9e009e 414px,#9e008d 441px)"></i><i style="background:linear-gradient(90deg,#00169e 110px,#000a9e 179px,#24009e 236px,#9e009e 415px,#9e008e 440px)"></i><i style="background:linear-gradient(90deg,#00169e 110px,#000a9e 179px,#23009e 235px,#9e009e 416px,#9e008f 439px)"></i><i style="background:linear-gradient(90deg,#00159e 111px,#000a9e 179px,#22009e 234px,#9e009e 417px,#9e0090 438px)"></i><i style="background:linear-gradient(90deg,#00159e 111px,#000a9e 179px,#21009e 233px,#5f009e 327px,#9e009e 418px,#9e0092 437px)"></i><i style="background:linear-gradient(90deg,#00159e 112px,#00099e 179px,#21009e 232px,#5e009e 327px,#9e009e 419px,#9e0093 436px)"></i><i style="background:linear-gradient(90deg,#00149e 113px,#00099e 180px,#20009e 232px,#5e009e 328px,#9e009e 420px,#9e0094 435px)"></i><i style="background:linear-gradient(90deg,#00149e 113px,#00099e 180px,#20009e 231px,#5e009e 328px,#9e009e 421px,#9e0095 434px)"></i><i style="background:linear-gradient(90deg,#00149e 114px,#00099e 180px,#1f009e 230px,#5e009e 328px,#9e009e 422px,#9e0097 433px)"></i><i style="background:linear-gradient(90deg,#00139e 115px,#00089e 180px,#1e009e 229px,#5d009e 328px,#9e009e 423px,#9e0098 432px)"></i><i style="background:linear-gradient(90deg,#00139e 115px,#00089e 180px,#1d009e 228px,#5d009e 328px,#9e009e 424px,#9e0099 431px)"></i><i style="background:linear-gradient(90deg,#00129e 116px,#00089e 180px,#1c009e 227px,#5c009e 328px,#9e009e 425px,#9e009b 430px)"></i><i style="background:linear-gradient(90deg,#00129e 117px,#00089e 181px,#1b009e 226px,#9e009c 429px)"></i><i style="background:linear-gradient(90deg,#00129e 117px,#00079e 181px,#1b009e 225px,#57009e 322px,#9e009e 428px)"></i><i style="background:linear-gradient(90deg,#00129e 118px,#00079e 181px,#1a009e 224px,#5a009e 327px,#9d009e 427px)"></i><i style="background:linear-gradient(90deg,#00119e 119px,#00079e 181px,#19009e 223px,#59009e 326px,#9c009e 426px)"></i><i style="background:linear-gradient(90deg,#00119e 119px,#00079e 181px,#18009e 222px,#58009e 325px,#9a009e 425px)"></i><i style="background:linear-gradient(90deg,#00119e 120px,#00079e 181px,#18009e 221px,#57009e 324px,#99009e 424px)"></i><i style="background:linear-gradient(90deg,#00109e 121px,#00069e 182px,#17009e 220px,#56009e 323px,#98009e 423px)"></i><i style="background:linear-gradient(90deg,#00109e 121px,#00069e 182px,#16009e 219px,#55009e 322px,#96009e 422px)"></i><i style="background:linear-gradient(90deg,#00109e 122px,#00069e 182px,#15009e 218px,#54009e 321px,#95009e 421px)"></i><i style="background:linear-gradient(90deg,#000f9e 123px,#00069e 182px,#14009e 217px,#53009e 320px,#94009e 420px)"></i><i style="background:linear-gradient(90deg,#000f9e 123px,#00069e 182px,#14009e 216px,#52009e 319px,#92009e 419px)"></i><i style="background:linear-gradient(90deg,#000f9e 124px,#00059e 182px,#13009e 215px,#51009e 318px,#91009e 418px)"></i><i style="background:linear-gradient(90deg,#000e9e 125px,#00059e 183px,#12009e 214px,#50009e 317px,#90009e 417px)"></i><i style="background:linear-gradient(90deg,#000e9e 125px,#00059e 183px,#12009e 213px,#4f009e 316px,#8f009e 416px)"></i><i style="background:linear-gradient(90deg,#000e9e 126px,#00059e 183px,#11009e 212px,#4e009e 315px,#8d009e 415px)"></i><i style="background:linear-gradient(90deg,#000d9e 127px,#00049e 183px,#10009e 211px,#4d009e 314px,#8c009e 414px)"></i><i style="background:linear-gradient(90deg,#000d9e 128px,#00049e 183px,#0f009e 210px,#4c009e 313px,#8b009e 413px)"></i><i style="background:linear-gradient(90deg,#000d9e 128px,#00049e 183px,#0f009e 209px,#4b009e 312px,#8a009e 412px)"></i><i style="background:linear-gradient(90deg,#000c9e 129px,#00049e 184px,#0e009e 208px,#88009e 411px)"></i><i style="background:linear-gradient(90deg,#000c9e 130px,#00049e 184px,#0d009e 207px,#87009e 410px)"></i><i style="background:linear-gradient(90deg,#000c9e 130px,#00039e 184px,#0d009e 206px,#86009e 409px)"></i><i style="background:linear-gradient(90deg,#000c9e 131px,#00039e 184px,#0c009e 205px,#85009e 409px)"></i><i style="background:linear-gradient(90deg,#000b9e 132px,#00039e 184px,#0b009e 204px,#84009e 408px)"></i><i style="background:linear-gradient(90deg,#000b9e 132px,#00039e 184px,#0a009e 203px,#83009e 407px)"></i><i style="background:linear-gradient(90deg,#000b9e 133px,#00039e 185px,#0a009e 202px,#82009e 406px)"></i><i style="background:linear-gradient(90deg,#000a9e 134px,#00029e 185px,#09009e 201px,#81009e 405px)"></i><i style="background:linear-gradient(90deg,#000a9e 135px,#00029e 185px,#08009e 200px,#80009e 404px)"></i><i style="background:linear-gradient(90deg,#000a9e 135px,#00029e 185px,#3e009e 296px,#7e009e 403px)"></i><i style="background:linear-gradient(90deg,#000a9e 136px,#00029e 185px,#3d009e 295px,#7d009e 402px)"></i><i style="background:linear-gradient(90deg,#00099e 137px,#00029e 185px,#3d009e 295px,#7c009e 401px)"></i><i style="background:linear-gradient(90deg,#00099e 137px,#00029e 185px,#3c009e 293px,#7b009e 400px)"></i><i style="background:linear-gradient(90deg,#00099e 138px,#00019e 186px,#7a009e 399px)"></i><i style="background:linear-gradient(90deg,#00089e 139px,#00019e 186px,#79009e 398px)"></i><i style="background:linear-gradient(90deg,#00089e 140px,#00019e 186px,#78009e 397px)"></i><i style="background:linear-gradient(90deg,#00089e 140px,#00019e 186px,#77009e 396px)"></i><i style="background:linear-gradient(90deg,#00089e 141px,#00019e 186px,#76009e 395px)"></i><i style="background:linear-gradient(90deg,#00079e 142px,#00019e 186px,#74009e 394px)"></i><i style="background:linear-gradient(90deg,#00079e 143px,#00009e 187px,#73009e 393px)"></i><i style="background:linear-gradient(90deg,#00079e 143px,#00009e 187px,#72009e 392px)"></i><i style="background:linear-gradient(90deg,#00069e 144px,#00009e 187px,#71009e 391px)"></i><i style="background:linear-gradient(90deg,#00069e 145px,#00009e 187px,#70009e 390px)"></i><i style="background:linear-gradient(90deg,#00069e 146px,#00009e 187px,#6f009e 389px)"></i><i style="background:linear-gradient(90deg,#00069e 146px,#00009e 187px,#6e009e 388px)"></i><i style="background:linear-gradient(90deg,#00059e 147px,#00009e 188px,#6d009e 387px)"></i><i style="background:linear-gradient(90deg,#00059e 148px,#00009e 188px,#6c009e 386px)"></i><i style="background:linear-gradient(90deg,#00059e 149px,#00009e 188px,#6b009e 385px)"></i><i style="background:linear-gradient(90deg,#00059e 149px,#00009e 188px,#6a009e 384px)"></i><i style="background:linear-gradient(90deg,#00049e 150px,#00009e 188px,#69009e 383px)"></i><i style="background:linear-gradient(90deg,#00049e 151px,#00009e 188px,#68009e 382px)"></i><i style="background:linear-gradient(90deg,#00049e 152px,#00009e 189px,#67009e 381px)"></i><i style="background:linear-gradient(90deg,#00049e 152px,#00009e 189px,#66009e 380px)"></i><i style="background:linear-gradient(90deg,#00039e 153px,#00009e 189px,#65009e 379px)"></i><i style="background:linear-gradient(90deg,#00039e 154px,#00009e 189px,#64009e 378px)"></i><i style="background:linear-gradient(90deg,#00039e 155px,#00009e 189px,#63009e 377px)"></i><i style="background:linear-gradient(90deg,#00029e 156px,#00009e 189px,#62009e 376px)"></i><i style="background:linear-gradient(90deg,#00029e 156px,#00009e 190px,#62009e 376px)"></i><i style="background:linear-gradient(90deg,#00029e 157px,#00009e 190px,#61009e 375px)"></i><i style="background:linear-gradient(90deg,#00029e 158px,#00009e 190px,#60009e 374px)"></i><i style="background:linear-gradient(90deg,#00019e 159px,#00009e 190px,#5f009e 373px)"></i><i style="background:linear-gradient(90deg,#00019e 160px,#00009e 190px,#5e009e 372px)"></i><i style="background:linear-gradient(90deg,#00019e 160px,#00009e 190px,#5d009e 371px)"></i><i style="background:linear-gradient(90deg,#00019e 161px,#00009e 191px,#5c009e 370px)"></i><i style="background:linear-gradient(90deg,#00009e 162px,#00009e 191px,#5c009e 369px)"></i><i style="background:linear-gradient(90deg,#00009e 163px,#00009e 191px,#5b009e 368px)"></i><i style="background:linear-gradient(90deg,#00009e 164px,#00009e 191px,#5a009e 367px)"></i><i style="background:linear-gradient(90deg,#00009e 165px,#00009e 191px,#59009e 366px)"></i><i style="background:linear-gradient(90deg,#00009e 165px,#00009e 191px,#58009e 365px)"></i><i style="background:linear-gradient(90deg,#00009e 166px,#00009e 192px,#57009e 364px)"></i><i style="background:linear-gradient(90deg,#00009e 167px,#00009e 192px,#56009e 363px)"></i><i style="background:linear-gradient(90deg,#00009e 168px,#00009e 192px,#55009e 362px)"></i><i style="background:linear-gradient(90deg,#00009e 169px,#00009e 192px,#55009e 361px)"></i><i style="background:linear-gradient(90deg,#00009e 170px,#00009e 192px,#54009e 360px)"></i><i style="background:linear-gradient(90deg,#00009e 170px,#00009e 192px,#53009e 359px)"></i><i style="background:linear-gradient(90deg,#00009e 171px,#00009e 193px,#52009e 358px)"></i><i style="background:linear-gradient(90deg,#00009e 172px,#00009e 193px,#51009e 357px)"></i><i style="background:linear-gradient(90deg,#00009e 173px,#00009e 193px,#50009e 356px)"></i><i style="background:linear-gradient(90deg,#00009e 174px,#00009e 193px,#50009e 355px)"></i><i style="background:linear-gradient(90deg,#00009e 175px,#00009e 193px,#4f009e 354px)"></i><i style="background:linear-gradient(90deg,#00009e 176px,#00009e 193px,#4e009e 353px)"></i><i style="background:linear-gradient(90deg,#00009e 177px,#00009e 193px,#4d009e 352px)"></i><i style="background:linear-gradient(90deg,#00009e 178px,#00009e 194px,#4c009e 351px)"></i><i style="background:linear-gradient(90deg,#00009e 179px,#00009e 194px,#4c009e 350px)"></i><i style="background:linear-gradient(90deg,#00009e 179px,#00009e 194px,#4b009e 349px)"></i><i style="background:linear-gradient(90deg,#00009e 180px,#00009e 194px,#4a009e 348px)"></i><i style="background:linear-gradient(90deg,#00009e 181px,#00009e 194px,#49009e 347px)"></i><i style="background:linear-gradient(90deg,#00009e 182px,#00009e 194px,#48009e 346px)"></i><i style="background:linear-gradient(90deg,#00009e 183px,#00009e 195px,#48009e 345px)"></i><i style="background:linear-gradient(90deg,#00009e 184px,#00009e 195px,#47009e 344px)"></i><i style="background:linear-gradient(90deg,#00009e 185px,#00009e 195px,#46009e 343px)"></i><i style="background:linear-gradient(90deg,#00009e 186px,#00009e 195px,#46009e 343px)"></i><i style="background:linear-gradient(90deg,#00009e 187px,#00009e 195px,#45009e 342px)"></i><i style="background:linear-gradient(90deg,#00009e 188px,#00009e 195px,#44009e 341px)"></i><i style="background:linear-gradient(90deg,#00009e 189px,#00009e 196px,#44009e 340px)"></i><i style="background:linear-gradient(90deg,#00009e 190px,#00009e 196px,#43009e 339px)"></i><i style="background:linear-gradient(90deg,#00009e 191px,#04009e 205px,#42009e 338px)"></i><i style="background:linear-gradient(90deg,#00009e 192px,#41009e 337px)"></i><i style="background:linear-gradient(90deg,#00009e 193px,#41009e 336px)"></i><i style="background:linear-gradient(90deg,#00009e 194px,#40009e 335px)"></i><i style="background:linear-gradient(90deg,#00009e 195px,#3f009e 334px)"></i><i style="background:linear-gradient(90deg,#00009e 196px,#3e009e 333px)"></i><i style="background:linear-gradient(90deg,#00009e 197px,#3e009e 332px)"></i><i style="background:linear-gradient(90deg,#01009e 198px,#3d009e 331px)"></i><i style="background:linear-gradient(90deg,#01009e 200px,#3c009e 330px)"></i><i style="background:linear-gradient(90deg,#02009e 201px,#3c009e 329px)"></i><i style="background:linear-gradient(90deg,#02009e 202px,#3b009e 328px)"></i><i style="background:linear-gradient(90deg,#03009e 203px,#3a009e 327px)"></i><i style="background:linear-gradient(90deg,#03009e 204px,#3a009e 326px)"></i><i style="background:linear-gradient(90deg,#03009e 205px,#39009e 325px)"></i><i style="background:linear-gradient(90deg,#04009e 206px,#38009e 324px)"></i><i style="background:linear-gradient(90deg,#04009e 207px,#38009e 323px)"></i><i style="background:linear-gradient(90deg,#04009e 208px,#37009e 322px)"></i><i style="background:linear-gradient(90deg,#05009e 210px,#36009e 321px)"></i><i style="background:linear-gradient(90deg,#05009e 211px,#36009e 320px)"></i><i style="background:linear-gradient(90deg,#06009e 212px,#35009e 319px)"></i><i style="background:linear-gradient(90deg,#06009e 213px,#34009e 318px)"></i><i style="background:linear-gradient(90deg,#06009e 214px,#34009e 317px)"></i><i style="background:linear-gradient(90deg,#07009e 215px,#33009e 316px)"></i><i style="background:linear-gradient(90deg,#08009e 217px,#32009e 315px)"></i><i style="background:linear-gradient(90deg,#08009e 218px,#32009e 314px)"></i><i style="background:linear-gradient(90deg,#08009e 219px,#31009e 313px)"></i><i style="background:linear-gradient(90deg,#09009e 220px,#30009e 312px)"></i><i style="background:linear-gradient(90deg,#09009e 221px,#30009e 311px)"></i><i style="background:linear-gradient(90deg,#09009e 222px,#2f009e 310px)"></i><i style="background:linear-gradient(90deg,#0a009e 224px,#2e009e 309px)"></i><i style="background:linear-gradient(90deg,#0a009e 225px,#2e009e 309px)"></i><i style="background:linear-gradient(90deg,#0b009e 226px,#2e009e 308px)"></i><i style="background:linear-gradient(90deg,#0b009e 227px,#2d009e 307px)"></i><i style="background:linear-gradient(90deg,#0b009e 228px,#2c009e 306px)"></i><i style="background:linear-gradient(90deg,#0c009e 230px,#2c009e 305px)"></i><i style="background:linear-gradient(90deg,#0c009e 231px,#2b009e 304px)"></i><i style="background:linear-gradient(90deg,#0d009e 232px,#2b009e 303px)"></i><i style="background:linear-gradient(90deg,#0d009e 233px,#2a009e 302px)"></i><i style="background:linear-gradient(90deg,#0d009e 234px,#29009e 301px)"></i><i style="background:linear-gradient(90deg,#0e009e 236px,#29009e 300px)"></i><i style="background:linear-gradient(90deg,#0e009e 237px,#28009e 299px)"></i><i style="background:linear-gradient(90deg,#0f009e 238px,#28009e 298px)"></i><i style="background:linear-gradient(90deg,#0f009e 239px,#27009e 297px)"></i><i style="background:linear-gradient(90deg,#10009e 241px,#26009e 296px)"></i><i style="background:linear-gradient(90deg,#10009e 242px,#26009e 295px)"></i><i style="background:linear-gradient(90deg,#10009e 243px,#25009e 294px)"></i><i style="background:linear-gradient(90deg,#11009e 244px,#25009e 293px)"></i><i style="background:linear-gradient(90deg,#11009e 245px,#24009e 292px)"></i><i style="background:linear-gradient(90deg,#12009e 247px,#24009e 291px)"></i><i style="background:linear-gradient(90deg,#12009e 248px,#23009e 290px)"></i><i style="background:linear-gradient(90deg,#12009e 249px,#22009e 289px)"></i><i style="background:linear-gradient(90deg,#12009e 250px,#22009e 288px)"></i><i style="background:linear-gradient(90deg,#13009e 252px,#21009e 287px)"></i><i style="background:linear-gradient(90deg,#13009e 253px,#21009e 286px)"></i><i style="background:linear-gradient(90deg,#14009e 254px,#20009e 285px)"></i><i style="background:linear-gradient(90deg,#14009e 255px,#20009e 284px)"></i><i style="background:linear-gradient(90deg,#14009e 256px,#1f009e 283px)"></i><i style="background:linear-gradient(90deg,#15009e 257px,#1f009e 282px)"></i><i style="background:linear-gradient(90deg,#15009e 259px,#1e009e 281px)"></i><i style="background:linear-gradient(90deg,#16009e 260px,#1e009e 280px)"></i><i style="background:linear-gradient(90deg,#16009e 261px,#1d009e 279px)"></i><i style="background:linear-gradient(90deg,#16009e 262px,#1d009e 278px)"></i><i style="background:linear-gradient(90deg,#17009e 264px,#1c009e 277px)"></i><i style="background:linear-gradient(90deg,#18009e 266px,#1b009e 276px)"></i><i></i><i></i><i></i><i></i><i></i><i></i><i></i><i></i><i></i><i></i><i></i></div><div class="cl r1" style="left:132px;top:29px;width:349px;height:335px;clip-path:polygon(347.5px 33.7px,1.0px 1.2px,54.7px 333.0px)"><i></i><i style="background:linear-gradient(90deg,#00ff01 0px,#00ff01 1px,#1aff00 12px)"></i><i style="background:linear-gradient(90deg,#00ff03 0px,#02ff03 2px,#34ff00 22px)"></i><i style="background:linear-gradient(90deg,#00ff05 0px,#01ff05 2px,#15ff03 10px,#51ff00 33px)"></i><i style="background:linear-gradient(90deg,#00ff07 0px,#01ff07 2px,#26ff04 17px,#71ff00 44px)"></i><i style="background:linear-gradient(90deg,#00ff0a 0px,#01ff09 2px,#35ff05 23px,#62ff02 39px,#90ff00 54px)"></i><i style="background:linear-gradient(90deg,#00ff0c 0px,#00ff0b 2px,#08ff0b 5px,#48ff06 30px,#7dff02 48px,#b5ff00 65px)"></i><i style="background:linear-gradient(90deg,#00ff0e 0px,#00ff0e 2px,#13ff0c 10px,#5cff07 37px,#9aff03 57px,#dcff00 76px)"></i><i style="background:linear-gradient(90deg,#00ff10 0px,#02ff10 3px,#18ff0e 12px,#65ff09 40px,#a4ff05 60px,#ff0 85px,#fffb00 86px)"></i><i style="background:linear-gradient(90deg,#00ff12 0px,#02ff12 3px,#1aff10 13px,#6aff0b 42px,#b1ff06 64px,#ffff01 85px,#ffd500 97px)"></i><i style="background:linear-gradient(90deg,#00ff15 0px,#01ff14 3px,#15ff13 11px,#67ff0e 41px,#aeff09 63px,#fffe04 85px,#ffd801 96px,#ffb700 108px)"></i><i style="background:linear-gradient(90deg,#00ff17 0px,#01ff17 3px,#15ff15 11px,#67ff10 41px,#aeff0c 63px,#fffe07 85px,#ffe405 92px,#ffcc02 100px,#ffa000 118px)"></i><i style="background:linear-gradient(90deg,#00ff19 0px,#00ff19 3px,#0fff18 9px,#64ff13 40px,#abff0f 62px,#fffe0a 85px,#ffdd07 94px,#ffbe03 105px,#ffa401 116px,#ff8c00 129px)"></i><i style="background:linear-gradient(90deg,#00ff1c 0px,#00ff1b 3px,#0cff1a 8px,#36ff18 24px,#64ff16 40px,#abff12 62px,#fffd0d 85px,#ffd709 96px,#ffb305 109px,#ff9401 124px,#ff7a00 140px)"></i><i style="background:linear-gradient(90deg,#00ff1e 1px,#00ff1e 3px,#19ff1c 13px,#67ff18 41px,#abff14 62px,#fffd10 85px,#ffd00a 98px,#ffaa06 113px,#ff8902 130px,#ff6c00 150px)"></i><i style="background:linear-gradient(90deg,#00ff20 1px,#02ff20 4px,#18ff1f 13px,#6aff1a 42px,#b2ff17 64px,#fdff13 84px,#ffca0c 100px,#ffa107 117px,#ff7e03 137px,#ff5f00 161px)"></i><i style="background:linear-gradient(90deg,#0f2 1px,#01ff22 4px,#15ff21 12px,#67ff1d 41px,#afff1a 63px,#feff16 84px,#ffdf12 93px,#ffc70e 101px,#ff9a08 120px,#ff7303 144px,#ff5400 172px)"></i><i style="background:linear-gradient(90deg,#00ff25 1px,#01ff24 4px,#12ff24 11px,#66ff20 41px,#afff1d 63px,#feff19 84px,#ffdf14 93px,#ffc410 102px,#ffab0d 112px,#ff9209 124px,#ff6b04 150px,#ff4b00 182px)"></i><i style="background:linear-gradient(90deg,#00ff27 1px,#01ff27 4px,#10ff26 10px,#6f2 41px,#afff1f 63px,#ffff1c 84px,#ffde17 93px,#ffc012 103px,#ffa60e 114px,#ff8d0a 127px,#ff7707 141px,#ff6404 156px,#ff4200 193px)"></i><i style="background:linear-gradient(90deg,#00ff2a 1px,#00ff29 4px,#0fff29 10px,#3aff27 26px,#66ff25 41px,#afff22 63px,#ffff1f 84px,#ffdb19 94px,#ffbb14 105px,#ff9f0f 117px,#ff850b 131px,#ff7008 146px,#ff5c05 163px,#ff3a00 204px)"></i><i style="background:linear-gradient(90deg,#00ff2c 2px,#00ff2c 4px,#19ff2b 14px,#69ff28 42px,#afff25 63px,#ff2 84px,#ffda1c 94px,#ffb816 106px,#ff9b11 119px,#ff800c 134px,#ff6a09 150px,#ff5505 169px,#ff4302 190px,#f30 214px)"></i><i style="background:linear-gradient(90deg,#00ff2e 2px,#02ff2e 5px,#19ff2d 14px,#69ff2a 42px,#afff28 63px,#fffe25 84px,#ffd71e 95px,#ffb518 107px,#ff9612 121px,#ff7b0d 137px,#ff6409 155px,#ff5005 175px,#ff3d02 198px,#ff2d00 225px)"></i><i style="background:linear-gradient(90deg,#00ff31 2px,#01ff30 5px,#13ff30 12px,#66ff2d 41px,#acff2b 62px,#fffe28 84px,#ffd621 95px,#ffb21a 108px,#ff9214 123px,#ff770e 140px,#ff5e0a 160px,#ff4906 182px,#ff3702 207px,#ff2700 236px)"></i><i style="background:linear-gradient(90deg,#0f3 2px,#01ff33 5px,#13ff32 12px,#66ff30 41px,#acff2e 62px,#fffd2b 84px,#ffd323 96px,#ffaf1c 109px,#ff8e15 125px,#ff720f 143px,#ff5a0b 163px,#ff4506 187px,#ff3203 214px,#f20 246px)"></i><i style="background:linear-gradient(90deg,#00ff36 2px,#01ff35 5px,#0dff35 10px,#62ff33 40px,#a8ff31 61px,#fffd2e 84px,#ffcf25 97px,#ffaa1d 111px,#ff8a16 127px,#ff6e10 146px,#ff550b 168px,#ff3f06 194px,#ff2d03 223px,#ff1d00 257px)"></i><i style="background:linear-gradient(90deg,#00ff38 2px,#00ff38 5px,#0aff38 9px,#36ff37 25px,#62ff36 40px,#a8ff34 61px,#fdff32 83px,#fffd31 84px,#ffcf27 97px,#ffa71f 112px,#ff8617 129px,#ff6a11 149px,#ff500b 173px,#ff3b07 200px,#ff2903 231px,#ff1900 268px)"></i><i style="background:linear-gradient(90deg,#00ff3b 3px,#00ff3a 5px,#17ff3a 14px,#65ff38 41px,#a8ff37 61px,#feff35 83px,#fffc34 84px,#ffce2a 97px,#ffa520 113px,#ff8319 131px,#ff6512 152px,#ff4d0c 176px,#ff3707 205px,#ff2403 239px,#ff1500 278px)"></i><i style="background:linear-gradient(90deg,#00ff3d 3px,#02ff3d 6px,#14ff3d 13px,#65ff3b 41px,#a5ff3a 60px,#feff38 83px,#fffc38 84px,#ffe131 91px,#ffcb2c 98px,#ffa222 114px,#ff7f1a 133px,#ff6213 155px,#ff480d 181px,#ff3308 211px,#ff2003 247px,#f10 289px)"></i><i style="background:linear-gradient(90deg,#00ff40 3px,#02ff3f 6px,#16ff3f 14px,#68ff3e 42px,#b0ff3d 63px,#feff3c 83px,#ffca2e 98px,#ffa224 114px,#ff7d1b 134px,#ff5f14 157px,#ff450d 185px,#ff2f08 217px,#ff1d03 255px,#ff0d00 300px)"></i><i style="background:linear-gradient(90deg,#00ff42 3px,#01ff42 6px,#13ff42 13px,#68ff41 42px,#b0ff40 63px,#ffff3f 83px,#ffe438 90px,#ffca31 98px,#ff9f26 115px,#ff7b1d 135px,#ff5c15 159px,#ff420e 188px,#ff2c08 222px,#ff1a03 262px,#ff0a00 310px)"></i><i style="background:linear-gradient(90deg,#00ff45 3px,#01ff45 6px,#0eff44 11px,#37ff44 26px,#65ff44 41px,#b0ff43 63px,#ffff42 83px,#ffe43b 90px,#ffca34 98px,#ff9d28 116px,#ff781e 137px,#ff5915 162px,#ff3f0e 192px,#ff2908 228px,#ff1604 270px,#ff0700 321px)"></i><i style="background:linear-gradient(90deg,#00ff47 3px,#00ff47 6px,#0dff47 11px,#37ff47 26px,#64ff46 41px,#acff46 62px,#ffff45 83px,#ffe33e 90px,#ffc936 98px,#ff9c2a 116px,#ff761f 138px,#ff5616 164px,#ff3c0f 195px,#ff2609 233px,#ff1304 278px,#ff0400 332px)"></i><i style="background:linear-gradient(90deg,#00ff4a 3px,#00ff4a 6px,#0aff4a 10px,#37ff4a 26px,#64ff49 41px,#acff49 62px,#fffe49 83px,#ffe341 90px,#ffc939 98px,#ffb032 107px,#ff9a2c 117px,#ff7320 140px,#ff5317 167px,#ff380f 200px,#ff2309 239px,#ff1004 286px,#ff0100 342px)"></i><i style="background:linear-gradient(90deg,#00ff4c 4px,#02ff4c 7px,#17ff4c 15px,#67ff4c 42px,#adff4c 62px,#fffe4c 83px,#ffdf43 91px,#ffc53b 99px,#ffad34 108px,#ff972d 118px,#ff7122 141px,#ff5118 169px,#ff3610 203px,#ff210a 243px,#ff0e04 292px,#f00 349px)"></i><i style="background:linear-gradient(90deg,#00ff4f 4px,#02ff4f 7px,#14ff4f 14px,#67ff4f 42px,#adff4f 62px,#fffd4f 83px,#ffde45 91px,#ffc53e 99px,#ffad36 108px,#ff972f 118px,#ff7023 141px,#ff5019 169px,#ff3611 203px,#ff200b 243px,#ff0e05 293px,#f00 349px)"></i><i style="background:linear-gradient(90deg,#00ff52 4px,#01ff52 7px,#11ff52 13px,#64ff52 41px,#a9ff53 61px,#fffd52 83px,#ffde48 91px,#ffc440 99px,#ffac39 108px,#ff9631 118px,#ff7025 141px,#ff501b 169px,#ff3512 203px,#ff200c 243px,#ff0d06 294px,#ff0001 349px)"></i><i style="background:linear-gradient(90deg,#00ff54 4px,#01ff54 7px,#0eff54 12px,#64ff55 41px,#a5ff56 60px,#fdff56 82px,#fffd56 83px,#ffde4b 91px,#ffc443 99px,#ffac3b 108px,#ff9634 118px,#ff7027 141px,#ff511d 168px,#ff3614 202px,#ff200d 242px,#ff0d07 293px,#ff0002 348px)"></i><i style="background:linear-gradient(90deg,#00ff57 4px,#00ff57 7px,#08ff57 10px,#32ff58 25px,#60ff58 40px,#a5ff59 60px,#feff5a 82px,#fffc59 83px,#ffdd4e 91px,#ffc446 99px,#ffac3d 108px,#ff9636 118px,#ff6f29 141px,#ff501e 168px,#ff3515 202px,#ff200e 242px,#ff0d07 293px,#ff0003 347px)"></i><i style="background:linear-gradient(90deg,#00ff5a 4px,#00ff5a 7px,#08ff5a 10px,#32ff5a 25px,#60ff5b 40px,#a2ff5c 59px,#feff5d 82px,#fffc5c 83px,#ffdd51 91px,#ffc348 99px,#ffab40 108px,#ff9538 118px,#ff6f2b 141px,#ff5020 168px,#ff3516 202px,#ff200f 242px,#ff0d08 292px,#ff0003 346px)"></i><i style="background:linear-gradient(90deg,#00ff5c 5px,#02ff5c 8px,#18ff5d 16px,#6aff5e 43px,#b1ff5f 63px,#feff61 82px,#ffe056 90px,#ffc64c 98px,#ffad43 107px,#ff973b 117px,#ff702d 140px,#ff5122 167px,#ff3618 200px,#ff2010 241px,#ff0d09 291px,#ff0004 345px)"></i><i style="background:linear-gradient(90deg,#00ff5f 5px,#02ff5f 8px,#15ff60 15px,#66ff61 42px,#b1ff63 63px,#ffff64 82px,#ffe35a 89px,#ffc850 97px,#ffaf47 106px,#ff983e 116px,#ff712f 139px,#ff5124 166px,#ff361a 199px,#ff2011 239px,#ff0e0a 289px,#ff0005 344px)"></i><i style="background:linear-gradient(90deg,#00ff62 5px,#01ff62 8px,#12ff62 14px,#66ff64 42px,#b1ff66 63px,#ffff68 82px,#ffe35d 89px,#ffc853 97px,#ffaf49 106px,#ff9840 116px,#ff7031 139px,#ff5125 166px,#ff361b 199px,#ff2012 239px,#ff0d0b 289px,#ff0006 343px)"></i><i style="background:linear-gradient(90deg,#00ff64 5px,#01ff65 8px,#0eff65 13px,#3aff66 28px,#66ff67 42px,#adff69 62px,#fffe6b 82px,#ffe260 89px,#ffc756 97px,#ffae4c 106px,#ff9743 116px,#ff7033 139px,#ff5027 166px,#ff361c 199px,#ff2013 239px,#ff0d0c 289px,#ff0007 342px)"></i><i style="background:linear-gradient(90deg,#00ff67 5px,#00ff67 8px,#0bff68 12px,#36ff69 27px,#63ff6a 41px,#aaff6d 61px,#fffe6f 82px,#ffe263 89px,#ffc758 97px,#ffae4e 106px,#ff9745 116px,#ff7136 138px,#ff5129 165px,#ff361e 198px,#ff2015 238px,#ff0d0d 288px,#ff0007 341px)"></i><i style="background:linear-gradient(90deg,#00ff6a 5px,#00ff6a 8px,#08ff6b 11px,#33ff6c 26px,#63ff6e 41px,#aaff70 61px,#fffe72 82px,#ffe166 89px,#ffc65b 97px,#ffad51 106px,#ff9747 116px,#ff7137 138px,#ff512a 165px,#ff361f 198px,#ff2016 237px,#ff0d0e 287px,#ff0008 340px)"></i><i style="background:linear-gradient(90deg,#00ff6d 6px,#00ff6d 8px,#16ff6e 16px,#66ff71 42px,#aaff73 61px,#fffd76 82px,#ffe16a 89px,#ffc65e 97px,#ffad53 106px,#ff964a 116px,#ff7039 138px,#ff502c 165px,#ff3520 198px,#ff2017 237px,#ff0d0f 286px,#ff0009 339px)"></i><i style="background:linear-gradient(90deg,#00ff70 6px,#02ff70 9px,#12ff71 15px,#66ff74 42px,#af7 61px,#fdff7a 81px,#fffd79 82px,#ffe06d 89px,#ffc661 97px,#ffad56 106px,#ff984d 115px,#ff713c 137px,#ff512e 164px,#ff3622 197px,#ff2018 236px,#ff0d10 285px,#ff000a 338px)"></i><i style="background:linear-gradient(90deg,#00ff73 6px,#01ff73 9px,#0fff74 14px,#62ff77 41px,#a6ff7a 60px,#fdff7e 81px,#fffc7d 82px,#ffe070 89px,#ffc564 97px,#ffac58 106px,#ff974f 115px,#ff713e 137px,#ff502f 164px,#ff3623 196px,#ff2019 235px,#ff0d11 284px,#ff000b 337px)"></i><i style="background:linear-gradient(90deg,#00ff75 6px,#01ff76 9px,#0cff76 13px,#62ff7a 41px,#a6ff7d 60px,#feff81 81px,#fffc80 82px,#ffe073 89px,#ffc567 97px,#ffac5b 106px,#ff9751 115px,#ff7040 137px,#ff5031 164px,#ff3625 196px,#ff201a 235px,#ff0d12 284px,#ff000b 336px)"></i><i style="background:linear-gradient(90deg,#00ff78 6px,#01ff79 9px,#06ff79 11px,#32ff7b 26px,#5eff7d 40px,#a2ff81 59px,#feff85 81px,#fffb84 82px,#ffdf76 89px,#ffc469 97px,#ffab5e 106px,#ff9654 115px,#ff7042 137px,#ff5032 164px,#ff3626 196px,#ff201c 235px,#ff0d13 283px,#ff000c 335px)"></i><i style="background:linear-gradient(90deg,#00ff7b 6px,#00ff7c 9px,#08ff7c 12px,#34ff7e 27px,#62ff81 41px,#aeff85 62px,#ffff89 81px,#ffe27b 88px,#ffc76e 96px,#ffad61 105px,#ff9857 114px,#ff7144 136px,#ff5135 162px,#ff3728 194px,#ff201d 233px,#ff0d14 282px,#ff000d 334px)"></i><i style="background:linear-gradient(90deg,#00ff7e 7px,#00ff7f 9px,#16ff80 17px,#68ff84 43px,#b2ff89 63px,#ffff8d 81px,#ffe27e 88px,#ffc671 96px,#ffad64 105px,#ff985a 114px,#ff7146 136px,#ff5136 162px,#ff3629 194px,#ff201e 233px,#ff0d15 281px,#ff000e 333px)"></i><i style="background:linear-gradient(90deg,#00ff81 7px,#02ff82 10px,#16ff83 17px,#68ff88 43px,#aeff8c 62px,#ffff91 81px,#ffe182 88px,#ffc674 96px,#ffac67 105px,#ff975c 114px,#ff7048 136px,#ff5138 162px,#ff362b 194px,#ff201f 232px,#ff0d16 280px,#ff000f 332px)"></i><i style="background:linear-gradient(90deg,#00ff84 7px,#02ff85 10px,#10ff86 15px,#65ff8b 42px,#aeff90 62px,#fffe94 81px,#ffe185 88px,#ffc577 96px,#ffac69 105px,#ff975e 114px,#ff714b 135px,#ff513a 161px,#ff362c 193px,#ff2021 231px,#ff0d17 279px,#ff0010 331px)"></i><i style="background:linear-gradient(90deg,#00ff87 7px,#01ff88 10px,#0cff88 14px,#36ff8b 28px,#64ff8e 42px,#abff93 61px,#fffe98 81px,#ffe188 88px,#ffc57a 96px,#ffab6c 105px,#ff9661 114px,#ff714d 135px,#ff513c 161px,#ff362e 193px,#ff2022 231px,#ff0d18 279px,#f01 330px)"></i><i style="background:linear-gradient(90deg,#00ff8a 7px,#01ff8b 10px,#09ff8b 13px,#33ff8e 27px,#61ff91 41px,#a7ff96 60px,#fffd9c 81px,#ffe08c 88px,#ffc47d 96px,#ffab6f 105px,#ff9663 114px,#ff704f 135px,#ff503d 161px,#ff362f 192px,#ff2023 230px,#ff0d19 278px,#f01 329px)"></i><i style="background:linear-gradient(90deg,#00ff8d 7px,#00ff8e 10px,#06ff8e 12px,#33ff91 27px,#61ff95 41px,#a7ff9a 60px,#fffd9f 81px,#ffe08f 88px,#ffc480 96px,#ffad73 104px,#ff9867 113px,#ff7152 134px,#ff5140 160px,#ff3731 191px,#ff2025 229px,#ff0e1a 276px,#ff0012 328px)"></i><i style="background:linear-gradient(90deg,#00ff90 8px,#00ff91 10px,#14ff92 17px,#64ff98 42px,#a7ff9e 60px,#fdffa4 80px,#fffca3 81px,#ffdf92 88px,#ffc483 96px,#ffad76 104px,#ff9769 113px,#ff7154 134px,#ff5141 160px,#ff3632 191px,#ff2026 229px,#ff0d1b 276px,#ff0013 327px)"></i><i style="background:linear-gradient(90deg,#00ff93 8px,#00ff94 10px,#11ff95 16px,#64ff9c 42px,#a7ffa1 60px,#fdffa8 80px,#fffca7 81px,#ffdf96 88px,#ffc386 96px,#ffac78 104px,#ff976c 113px,#ff7156 134px,#ff5043 160px,#ff3634 191px,#ff2027 229px,#ff0d1c 276px,#ff0014 326px)"></i><i style="background:linear-gradient(90deg,#00ff96 8px,#02ff97 11px,#0dff98 15px,#60ff9f 41px,#a3ffa5 59px,#feffac 80px,#fffcaa 81px,#ffde99 88px,#ffc389 96px,#ffac7b 104px,#ff966e 113px,#ff7058 134px,#ff5045 160px,#ff3635 191px,#ff2028 228px,#ff0d1d 275px,#ff0015 325px)"></i><i style="background:linear-gradient(90deg,#00ff9a 8px,#01ff9a 11px,#0aff9b 14px,#60ffa3 41px,#a3ffa8 59px,#feffb0 80px,#fffbae 81px,#ffde9c 88px,#ffc28c 96px,#ffab7e 104px,#ff9671 113px,#ff705a 134px,#ff5047 159px,#ff3637 190px,#ff202a 227px,#ff0d1e 274px,#ff0016 324px)"></i><i style="background:linear-gradient(90deg,#00ff9d 8px,#01ff9d 11px,#09ff9e 14px,#34ffa2 28px,#63ffa6 42px,#afffad 62px,#ffffb5 80px,#ffe1a2 87px,#ffc591 95px,#ffad82 103px,#ff9775 112px,#ff715d 133px,#ff5149 158px,#ff3639 189px,#ff202b 226px,#ff0e20 272px,#ff0017 323px)"></i><i style="background:linear-gradient(90deg,#00ffa0 8px,#00ffa1 11px,#06ffa1 13px,#34ffa5 28px,#63ffaa 42px,#afffb1 62px,#ffffb9 80px,#ffe1a6 87px,#ffc896 94px,#ffad85 103px,#ff9777 112px,#ff705f 133px,#ff514b 158px,#ff363a 189px,#ff202c 226px,#ff0d21 272px,#ff0018 322px)"></i><i style="background:linear-gradient(90deg,#00ffa3 8px,#00ffa4 11px,#03ffa4 12px,#30ffa9 27px,#5fffad 41px,#abffb5 61px,#fffebc 80px,#ffe0a9 87px,#ffc799 94px,#ffaf8a 102px,#ff997b 111px,#ff7162 132px,#ff514d 157px,#ff363c 188px,#ff202e 225px,#ff0d22 271px,#ff0019 321px)"></i><i style="background:linear-gradient(90deg,#00ffa6 9px,#00ffa7 11px,#14ffa9 18px,#66ffb1 43px,#acffb9 61px,#fffec0 80px,#ffe0ad 87px,#ffc79c 94px,#ffaf8c 102px,#ff987e 111px,#ff7164 132px,#ff514f 157px,#ff373e 187px,#ff202f 224px,#ff0d23 270px,#ff001a 320px)"></i><i style="background:linear-gradient(90deg,#0fa 9px,#02ffaa 12px,#0effac 16px,#63ffb5 42px,#acffbc 61px,#fffec4 80px,#ffdfb0 87px,#ffc69f 94px,#ffae8f 102px,#ff9880 111px,#ff7166 132px,#ff5151 157px,#ff363f 187px,#ff2030 224px,#ff0d24 270px,#ff001b 319px)"></i><i style="background:linear-gradient(90deg,#00ffad 9px,#01ffae 12px,#0affaf 15px,#36ffb3 29px,#62ffb8 42px,#a8ffc0 60px,#fffdc8 80px,#ffdfb4 87px,#ffc6a2 94px,#ffae92 102px,#ff9783 111px,#ff7068 132px,#ff5052 157px,#ff3641 187px,#ff2032 223px,#ff0e25 268px,#ff001b 318px)"></i><i style="background:linear-gradient(90deg,#00ffb0 9px,#01ffb1 12px,#0affb2 15px,#36ffb7 29px,#62ffbc 42px,#a8ffc4 60px,#fcffcd 79px,#fffdcc 80px,#ffdeb7 87px,#ffc5a6 94px,#ffad95 102px,#ff9785 111px,#ff716b 131px,#ff5155 156px,#ff3642 186px,#ff2033 222px,#ff0e26 267px,#ff001c 317px)"></i><i style="background:linear-gradient(90deg,#00ffb3 9px,#00ffb4 12px,#03ffb5 13px,#2fffba 27px,#5effbf 41px,#a4ffc7 59px,#fdffd2 79px,#fffcd0 80px,#ffdebb 87px,#ffc5a9 94px,#ffad98 102px,#ff9688 111px,#ff716e 131px,#ff5057 156px,#ff3644 186px,#ff2034 223px,#ff0d27 269px,#ff001d 317px)"></i><i style="background:linear-gradient(90deg,#00ffb7 9px,#00ffb8 12px,#03ffb8 13px,#2effbd 27px,#5effc3 41px,#a4ffcb 59px,#fdffd6 79px,#fffcd4 80px,#ffddbe 87px,#ffc4ac 94px,#ffac9b 102px,#ff968b 111px,#ff7070 131px,#ff5058 156px,#ff3645 186px,#ff2036 222px,#ff0d28 268px,#ff001e 316px)"></i><i style="background:linear-gradient(90deg,#00ffba 10px,#0fb 12px,#0effbd 17px,#62ffc7 42px,#a4ffcf 59px,#feffdb 79px,#fffbd8 80px,#ffddc2 87px,#ffc4af 94px,#ffac9e 102px,#ff958d 111px,#ff7072 131px,#ff505a 156px,#ff3547 186px,#ff1f37 222px,#ff0d29 268px,#ff001f 315px)"></i><i style="background:linear-gradient(90deg,#00ffbe 10px,#02ffbf 13px,#0effc0 17px,#38ffc6 30px,#65ffcb 43px,#b0ffd5 62px,#feffdf 79px,#ffe0c8 86px,#ffc7b5 93px,#ffaea3 101px,#ff9792 110px,#ff7175 130px,#ff505d 155px,#ff3649 185px,#ff2038 221px,#ff0d2a 267px,#ff0020 314px)"></i><i style="background:linear-gradient(90deg,#00ffc1 10px,#01ffc2 13px,#0effc4 17px,#37ffc9 30px,#65ffcf 43px,#b1ffd9 62px,#ffffe4 79px,#ffe0cc 86px,#ffc6b8 93px,#ffada6 101px,#ff9794 110px,#ff7077 130px,#ff515f 154px,#ff364b 184px,#ff203a 220px,#ff0d2c 265px,#ff0021 313px)"></i><i style="background:linear-gradient(90deg,#00ffc4 10px,#01ffc6 13px,#0affc7 16px,#37ffcd 30px,#65ffd3 43px,#acffdd 61px,#ffffe8 79px,#ffdfd0 86px,#ffc6bc 93px,#ffada9 101px,#f99 109px,#ff727b 129px,#ff5161 154px,#ff364d 183px,#ff203b 219px,#ff0d2d 264px,#f02 312px)"></i><i style="background:linear-gradient(90deg,#00ffc8 10px,#00ffc9 13px,#03ffc9 14px,#30ffd0 28px,#61ffd7 42px,#adffe1 61px,#fffeec 79px,#ffdfd3 86px,#ffc5bf 93px,#ffacac 101px,#ff989c 109px,#ff717d 129px,#ff5063 154px,#ff364e 183px,#ff203d 219px,#ff0d2e 264px,#ff0023 311px)"></i><i style="background:linear-gradient(90deg,#00ffcb 10px,#0fc 13px,#03ffcd 14px,#30ffd3 28px,#61ffda 42px,#a8ffe5 60px,#fffef0 79px,#ffded7 86px,#ffc5c2 93px,#ffacaf 101px,#ff989e 109px,#ff717f 129px,#ff5166 153px,#ff3650 182px,#ff203e 218px,#ff0d2f 263px,#ff0024 310px)"></i><i style="background:linear-gradient(90deg,#00ffcf 11px,#00ffd0 13px,#12ffd3 19px,#64ffdf 43px,#a8ffe9 60px,#fffdf5 79px,#ffdedb 86px,#ffc4c6 93px,#ffabb2 101px,#ff97a1 109px,#ff7081 129px,#ff5067 153px,#ff3652 182px,#ff2040 218px,#ff0d30 263px,#ff0025 309px)"></i><i style="background:linear-gradient(90deg,#00ffd3 11px,#02ffd4 14px,#0effd6 18px,#64ffe3 43px,#a9ffed 60px,#fffdf9 79px,#ffdddf 86px,#ffc4c9 93px,#ffabb5 101px,#ff97a4 109px,#ff7084 129px,#ff5069 153px,#ff3653 182px,#ff2041 217px,#ff0d32 261px,#ff0026 308px)"></i><i style="background:linear-gradient(90deg,#00ffd6 11px,#00ffd7 13px,#08ffd8 16px,#32ffdf 29px,#60ffe6 42px,#a4fff1 59px,#fdffff 78px,#fffcfd 79px,#ffdde2 86px,#ffc3cc 93px,#ffaab8 101px,#ff96a7 109px,#ff6f86 129px,#ff516c 152px,#ff3655 181px,#ff2043 216px,#ff0d33 260px,#ff0027 307px)"></i><i style="background:linear-gradient(90deg,#00ffda 11px,#01ffdb 14px,#2bffe2 27px,#59ffe9 40px,#9cfff4 57px,#dfffff 72px,#fff7fd 80px,#ffd8e3 87px,#ffbfcd 94px,#ff93a7 110px,#ff6d87 130px,#ff4f6d 153px,#ff3556 182px,#ff1f44 217px,#ff0c34 261px,#ff0028 306px)"></i><i style="background:linear-gradient(90deg,#0fd 11px,#01ffdf 14px,#4dffeb 37px,#87fff5 52px,#c4ffff 66px,#fff2fd 81px,#ffd4e3 88px,#ffbbce 95px,#ff90a8 111px,#ff6b88 131px,#ff4e6e 154px,#ff3457 183px,#ff1f45 217px,#ff0c35 260px,#ff0029 305px)"></i><i style="background:linear-gradient(90deg,#00ffe1 11px,#00ffe2 14px,#46ffee 35px,#77fff6 48px,#a9ffff 60px,#ffedfd 82px,#ffd0e3 89px,#ffb8ce 96px,#ff8ea9 112px,#ff6988 132px,#ff4c6f 155px,#ff3359 183px,#ff1e46 217px,#ff0c36 260px,#ff002a 304px)"></i><i style="background:linear-gradient(90deg,#00ffe5 12px,#03ffe6 15px,#2dffee 28px,#5cfff6 41px,#8fffff 54px,#ffe8fd 83px,#ffcce4 90px,#ffb4cf 97px,#ff8baa 113px,#ff698b 132px,#ff4c70 155px,#ff335a 183px,#ff1e47 217px,#ff0c37 259px,#ff002b 303px)"></i><i style="background:linear-gradient(90deg,#00ffe8 12px,#02ffea 15px,#1cffef 23px,#49fff7 36px,#7ff 48px,#ffe3fd 84px,#ffc7e4 91px,#ffb1cf 98px,#f8a 114px,#ff678b 133px,#ff4a71 156px,#ff325b 184px,#ff1e48 217px,#ff0c38 259px,#ff002c 302px)"></i><i style="background:linear-gradient(90deg,#00ffec 12px,#00ffed 14px,#08ffef 17px,#33fff7 30px,#5fffff 42px,#ffdefd 85px,#ffc3e4 92px,#ffadd0 99px,#ff86ab 115px,#ff658c 134px,#ff4972 157px,#ff315c 185px,#ff1d49 218px,#ff0c39 259px,#ff002e 301px)"></i><i style="background:linear-gradient(90deg,#00fff0 12px,#01fff2 15px,#4cfeff 37px,#ffd9fd 86px,#ffbfe5 93px,#ffaad0 100px,#ff83ac 116px,#ff638d 135px,#ff4773 158px,#ff305d 185px,#ff1d4a 218px,#ff0b3a 259px,#ff002f 300px)"></i><i style="background:linear-gradient(90deg,#00fff4 12px,#01fff5 15px,#25fffc 26px,#36feff 31px,#5ff6ff 43px,#ffd5fd 87px,#ffa9d3 100px,#ff83ae 116px,#ff628f 135px,#ff4775 158px,#ff305f 185px,#ff1c4c 218px,#ff0b3c 258px,#ff0030 299px)"></i><i style="background:linear-gradient(90deg,#00fff7 12px,#00fff9 15px,#1effff 24px,#38faff 32px,#8ee9ff 57px,#ffd0fd 88px,#ffa3d1 102px,#ff7ead 118px,#ff5f8f 137px,#ff4575 159px,#ff2f5f 186px,#ff1c4d 218px,#ff0b3d 258px,#ff0031 298px)"></i><i style="background:linear-gradient(90deg,#00fffc 13px,#03fffe 16px,#48f3ff 37px,#ffccfd 89px,#ffa0d1 103px,#ff7cae 119px,#ff5d8f 138px,#ff4476 160px,#ff2e60 187px,#ff1c4e 218px,#ff0b3e 258px,#ff0032 297px)"></i><i style="background:linear-gradient(90deg,#00feff 13px,#02fdff 16px,#46efff 37px,#94dfff 60px,#ffc8fd 90px,#ff9fd5 103px,#ff7bb0 119px,#ff5d92 138px,#ff4478 160px,#ff2d62 187px,#ff1b4f 218px,#ff0b3f 257px,#f03 296px)"></i><i style="background:linear-gradient(90deg,#00fbff 13px,#02f9ff 16px,#45ebff 37px,#92dbff 60px,#ffc4fd 91px,#ff9cd5 104px,#ff79b1 120px,#ff5b92 139px,#ff4279 161px,#ff2d63 187px,#ff1b51 218px,#ff0b40 257px,#ff0034 295px)"></i><i style="background:linear-gradient(90deg,#00f7ff 13px,#01f5ff 16px,#40e8ff 36px,#93d7ff 61px,#ffc0fd 92px,#ff99d5 105px,#ff77b2 121px,#ff5b94 139px,#ff427b 161px,#ff2d65 187px,#ff1b52 217px,#ff0b41 256px,#ff0035 294px)"></i><i style="background:linear-gradient(90deg,#00f3ff 13px,#01f2ff 16px,#3fe5ff 36px,#91d4ff 61px,#ffbcfd 93px,#ff96d6 106px,#ff74b2 122px,#ff5995 140px,#ff407b 162px,#ff2c66 187px,#ff1b54 217px,#ff0b43 255px,#ff0037 293px)"></i><i style="background:linear-gradient(90deg,#00f0ff 13px,#0ef 16px,#3ee1ff 36px,#92d0ff 62px,#ffb8fd 94px,#ff93d6 107px,#ff72b3 123px,#ff5796 141px,#ff3f7c 163px,#ff2b67 188px,#ff1a55 217px,#ff0a44 255px,#ff0038 292px)"></i><i style="background:linear-gradient(90deg,#00ecff 14px,#03eaff 17px,#4cdbff 41px,#ffb4fd 95px,#ff90d6 108px,#ff70b3 124px,#ff5597 142px,#ff3f7e 163px,#ff2b68 188px,#ff1a56 217px,#ff0a45 255px,#ff0039 291px)"></i><i style="background:linear-gradient(90deg,#00e8ff 14px,#02e7ff 17px,#4bd7ff 41px,#ffb0fe 96px,#ff8dd7 109px,#ff6eb4 125px,#ff5497 143px,#ff3d7f 164px,#ff2a6a 188px,#ff1a57 217px,#ff0a46 254px,#ff003a 290px)"></i><i style="background:linear-gradient(90deg,#00e5ff 14px,#02e3ff 17px,#4ad4ff 41px,#99c4ff 66px,#ffadfe 97px,#ff8ad7 110px,#ff6cb5 126px,#ff5298 144px,#ff3c7f 165px,#ff296b 189px,#ff1958 218px,#ff0a47 254px,#ff003b 289px)"></i><i style="background:linear-gradient(90deg,#00e2ff 14px,#01e0ff 17px,#45d2ff 40px,#96c1ff 66px,#ffa9fe 98px,#ff88d8 111px,#ff69b5 127px,#ff5099 145px,#ff3c81 165px,#ff296c 189px,#ff195a 217px,#ff0a49 253px,#ff003d 288px)"></i><i style="background:linear-gradient(90deg,#00dfff 14px,#01ddff 17px,#44cfff 40px,#94beff 66px,#ffa6fe 99px,#ff85d8 112px,#ff67b6 128px,#ff4f99 146px,#ff3a82 166px,#ff286d 190px,#ff185b 218px,#ff0949 254px,#ff003e 287px)"></i><i style="background:linear-gradient(90deg,#00dcff 14px,#00daff 17px,#40ccff 39px,#92bbff 66px,#ffa2fe 100px,#ff82d8 113px,#ff67b8 128px,#ff4e9b 146px,#ff3a84 166px,#ff286e 190px,#ff185c 217px,#ff094b 253px,#ff003f 286px)"></i><i style="background:linear-gradient(90deg,#00d9ff 14px,#00d7ff 17px,#3fc9ff 39px,#93b7ff 67px,#ff9ffe 101px,#ff80d9 114px,#ff65b9 129px,#ff4d9c 147px,#ff3984 167px,#ff2770 190px,#ff185e 217px,#ff094c 252px,#ff0040 285px)"></i><i style="background:linear-gradient(90deg,#00d5ff 15px,#02d3ff 18px,#4fc3ff 45px,#ff9cfe 102px,#ff7dd9 115px,#ff63b9 130px,#ff4b9d 148px,#ff3785 168px,#ff2670 191px,#ff175e 218px,#ff094d 252px,#ff0041 284px)"></i><i style="background:linear-gradient(90deg,#00d2ff 15px,#02d0ff 18px,#4bc0ff 44px,#98b0ff 70px,#ff98fe 103px,#ff7bd9 116px,#ff61ba 131px,#ff4a9f 148px,#ff3787 168px,#ff2672 191px,#ff1760 217px,#ff0a50 248px,#ff0043 283px)"></i><i style="background:linear-gradient(90deg,#00cfff 15px,#01ceff 18px,#4abeff 44px,#99acff 71px,#ff95fe 104px,#ff78da 117px,#ff5fba 132px,#ff499f 149px,#ff3687 169px,#ff2573 192px,#ff1661 218px,#f04 282px)"></i><i style="background:linear-gradient(90deg,#00cdff 15px,#01cbff 18px,#49bbff 44px,#97aaff 71px,#ff92fe 105px,#ff76da 118px,#ff5dbb 133px,#ff47a0 150px,#ff3589 169px,#ff2575 191px,#ff1763 217px,#ff0a53 247px,#ff0045 281px)"></i><i style="background:linear-gradient(90deg,#00caff 15px,#00c8ff 18px,#45b9ff 43px,#98a7ff 72px,#ff8ffe 106px,#ff73da 119px,#ff5bbb 134px,#ff46a0 151px,#ff348a 170px,#ff2475 192px,#ff1663 218px,#ff0047 280px)"></i><i style="background:linear-gradient(90deg,#00c7ff 15px,#00c5ff 18px,#44b6ff 43px,#96a4ff 72px,#ff8cfe 107px,#ff71db 120px,#ff5abe 134px,#ff45a2 151px,#ff338b 170px,#ff2477 192px,#ff1665 217px,#ff0048 279px)"></i><i style="background:linear-gradient(90deg,#00c4ff 16px,#02c2ff 19px,#53b0ff 49px,#ff89fe 108px,#ff6edb 121px,#ff58be 135px,#ff44a3 152px,#ff328c 171px,#ff2378 192px,#ff1666 217px,#ff0049 278px)"></i><i style="background:linear-gradient(90deg,#00c1ff 16px,#02c0ff 19px,#4faeff 48px,#ff86fe 109px,#ff6cdb 122px,#ff57be 136px,#ff43a5 152px,#ff328e 171px,#ff237a 192px,#ff1568 217px,#ff004b 277px)"></i><i style="background:linear-gradient(90deg,#00bfff 16px,#01bdff 19px,#4eacff 48px,#9c9aff 76px,#ff83fe 110px,#ff6adc 123px,#ff55bf 137px,#ff42a6 153px,#ff318e 172px,#ff227b 193px,#ff1569 217px,#ff004c 276px)"></i><i style="background:linear-gradient(90deg,#00bcff 16px,#01bbff 19px,#4daaff 48px,#9a98ff 76px,#ff81fe 111px,#ff68dc 124px,#ff53bf 138px,#ff40a6 154px,#ff2f8f 173px,#ff217b 194px,#ff146a 218px,#ff004d 275px)"></i><i style="background:linear-gradient(90deg,#00baff 16px,#00b8ff 19px,#49a8ff 47px,#9b95ff 77px,#ff7efe 112px,#ff65dc 125px,#ff51c0 139px,#ff3fa7 155px,#ff2f91 173px,#ff217d 194px,#ff146c 217px,#ff004f 274px)"></i><i style="background:linear-gradient(90deg,#00b7ff 16px,#00b6ff 19px,#48a5ff 47px,#9993ff 77px,#ff7bfe 113px,#ff63dc 126px,#ff4fc0 140px,#ff3da7 156px,#ff2e91 174px,#ff207e 194px,#ff146d 217px,#ff0050 273px)"></i><i style="background:linear-gradient(90deg,#00b5ff 17px,#02b3ff 20px,#54a0ff 52px,#ff79fe 114px,#ff63df 126px,#ff4fc3 140px,#ff3da9 156px,#ff2d93 174px,#ff2080 194px,#ff146e 217px,#ff0051 272px)"></i><i style="background:linear-gradient(90deg,#00b2ff 17px,#02b1ff 20px,#539eff 52px,#ff76fe 115px,#ff61df 127px,#ff4dc3 141px,#ff3caa 157px,#ff2c94 175px,#ff1f80 195px,#ff136f 218px,#ff0052 272px)"></i><i style="background:linear-gradient(90deg,#00b0ff 17px,#01aeff 20px,#529cff 52px,#ff74fe 116px,#ff5fdf 128px,#ff4bc3 142px,#ff3aaa 158px,#ff2c95 175px,#ff1e82 195px,#ff1371 217px,#ff0054 271px)"></i><i style="background:linear-gradient(90deg,#00aeff 17px,#01acff 20px,#4e9aff 51px,#9c88ff 81px,#ff71fe 117px,#ff5de0 129px,#ff4ac4 143px,#ff39ab 159px,#ff2b96 176px,#ff1e83 195px,#ff1272 217px,#f05 270px)"></i><i style="background:linear-gradient(90deg,#00acff 17px,#0af 20px,#4d98ff 51px,#9d86ff 82px,#ff6ffe 118px,#ff5be0 130px,#ff48c4 144px,#ff38ad 159px,#ff2a97 176px,#ff1e85 195px,#ff1273 217px,#ff0057 269px)"></i><i style="background:linear-gradient(90deg,#00a9ff 17px,#00a8ff 20px,#4c96ff 51px,#9b84ff 82px,#ff6cfe 119px,#ff59e0 131px,#ff46c5 145px,#ff37ad 160px,#ff2998 177px,#ff1d85 196px,#ff1275 217px,#ff0058 268px)"></i><i style="background:linear-gradient(90deg,#00a7ff 18px,#02a5ff 21px,#5791ff 56px,#ff6afe 120px,#ff57e0 132px,#ff46c7 145px,#ff37af 160px,#ff299a 177px,#ff1c87 196px,#ff1176 217px,#ff005a 267px)"></i><i style="background:linear-gradient(90deg,#00a5ff 18px,#02a3ff 21px,#568fff 56px,#ff67fe 121px,#ff55e1 133px,#ff44c7 146px,#ff35b0 161px,#ff279a 178px,#f17 217px,#ff005b 266px)"></i><i style="background:linear-gradient(90deg,#00a3ff 18px,#01a1ff 21px,#558eff 56px,#ff65fe 122px,#ff53e1 134px,#ff43c7 147px,#ff34b0 162px,#ff279c 178px,#ff1179 217px,#ff005d 265px)"></i><i style="background:linear-gradient(90deg,#00a1ff 18px,#019fff 21px,#518cff 55px,#9e7aff 86px,#ff63fe 123px,#ff51e1 135px,#ff41c8 148px,#ff33b2 162px,#ff279e 178px,#ff117b 216px,#ff005e 264px)"></i><i style="background:linear-gradient(90deg,#009fff 18px,#019dff 21px,#508aff 55px,#9f78ff 87px,#ff61fe 124px,#ff4fe1 136px,#ff40c8 149px,#ff32b2 163px,#ff269e 179px,#ff107b 217px,#ff0060 263px)"></i><i style="background:linear-gradient(90deg,#009dff 18px,#009bff 21px,#4d89ff 54px,#9d76ff 87px,#ff5ffe 125px,#ff4ee4 136px,#ff3fca 149px,#ff32b4 163px,#ff25a0 179px,#ff107d 216px,#ff0061 262px)"></i><i style="background:linear-gradient(90deg,#009aff 19px,#0299ff 22px,#5a84ff 60px,#ff5cfe 126px,#ff4de4 137px,#ff3ecb 150px,#ff30b5 164px,#ff24a0 180px,#ff107f 216px,#ff0063 261px)"></i><i style="background:linear-gradient(90deg,#0098ff 19px,#0297ff 22px,#5982ff 60px,#ff5afe 127px,#ff4be4 138px,#ff3ccb 151px,#ff2fb5 165px,#ff24a2 180px,#ff0f80 216px,#ff0064 260px)"></i><i style="background:linear-gradient(90deg,#0097ff 19px,#0195ff 22px,#5581ff 59px,#ff58fe 128px,#ff49e4 139px,#ff3acb 152px,#ff2eb6 166px,#ff22a2 181px,#ff0f81 216px,#f06 259px)"></i><i style="background:linear-gradient(90deg,#0095ff 19px,#0193ff 22px,#547fff 59px,#ff56fe 129px,#ff47e5 140px,#ff3acd 152px,#ff2db7 166px,#ff22a4 181px,#ff0f83 216px,#ff0067 258px)"></i><i style="background:linear-gradient(90deg,#0093ff 19px,#0191ff 22px,#537eff 59px,#a16bff 92px,#ff54fe 130px,#ff46e5 141px,#ff39ce 153px,#ff22a6 181px,#ff0f85 215px,#ff0069 257px)"></i><i style="background:linear-gradient(90deg,#0091ff 19px,#0090ff 22px,#507dff 58px,#9f6aff 92px,#ff52fe 131px,#ff44e5 142px,#ff37ce 154px,#ff21a6 182px,#ff0e86 215px,#ff006b 256px)"></i><i style="background:linear-gradient(90deg,#008fff 19px,#028dff 23px,#4f7bff 58px,#a067ff 93px,#ff50fe 132px,#ff42e5 143px,#ff36ce 155px,#ff20a8 182px,#ff0e87 215px,#ff006c 255px)"></i><i style="background:linear-gradient(90deg,#008dff 20px,#028cff 23px,#5b76ff 64px,#ff4efe 133px,#ff41e5 144px,#ff35d0 155px,#ff20a9 182px,#ff0e89 215px,#ff006e 254px)"></i><i style="background:linear-gradient(90deg,#008cff 20px,#018aff 23px,#5875ff 63px,#ff4cfe 134px,#ff3fe5 145px,#ff34d1 156px,#ff1faa 183px,#ff0d8a 215px,#ff0070 253px)"></i><i style="background:linear-gradient(90deg,#008aff 20px,#0188ff 23px,#5774ff 63px,#ff4bfe 135px,#ff3de6 146px,#ff32d1 157px,#ff1eac 183px,#ff0d8c 214px,#ff0071 252px)"></i><i style="background:linear-gradient(90deg,#08f 20px,#0187ff 23px,#5672ff 63px,#ff49fe 136px,#ff31d1 158px,#ff1dac 184px,#ff0d8d 215px,#ff0073 251px)"></i><i style="background:linear-gradient(90deg,#0087ff 20px,#0085ff 23px,#5371ff 62px,#a15eff 97px,#ff47fe 137px,#ff30d3 158px,#ff1dae 184px,#ff0d8f 214px,#ff0075 250px)"></i><i style="background:linear-gradient(90deg,#0085ff 20px,#0084ff 23px,#5270ff 62px,#a25cff 98px,#ff45fe 138px,#ff2fd4 159px,#ff1caf 184px,#ff0c90 214px,#ff0076 249px)"></i><i style="background:linear-gradient(90deg,#0083ff 21px,#0282ff 24px,#5c6cff 67px,#ff43fe 139px,#ff2ed4 160px,#ff1bb0 185px,#ff0c92 214px,#ff0078 248px)"></i><i style="background:linear-gradient(90deg,#0082ff 21px,#0180ff 24px,#5b6aff 67px,#ff42fe 140px,#ff2cd4 161px,#ff1bb1 185px,#ff0c94 213px,#ff007a 247px)"></i><i style="background:linear-gradient(90deg,#0080ff 21px,#017fff 24px,#5a69ff 67px,#ff40fe 141px,#ff2cd6 161px,#ff1ab3 185px,#ff0c95 213px,#ff007c 246px)"></i><i style="background:linear-gradient(90deg,#007fff 21px,#017dff 24px,#5768ff 66px,#ff3efe 142px,#ff2bd6 162px,#ff19b3 186px,#ff0b97 213px,#ff007e 245px)"></i><i style="background:linear-gradient(90deg,#007dff 21px,#007cff 24px,#5667ff 66px,#a354ff 102px,#ff3dfe 143px,#ff29d7 163px,#ff19b5 186px,#ff0b98 213px,#ff007f 244px)"></i><i style="background:linear-gradient(90deg,#007cff 21px,#007aff 24px,#5565ff 66px,#a352ff 103px,#ff3bfe 144px,#ff29d9 163px,#ff19b7 186px,#ff0b9a 212px,#ff0081 243px)"></i><i style="background:linear-gradient(90deg,#007aff 22px,#0278ff 25px,#5e61ff 71px,#ff39fe 145px,#ff28d9 164px,#ff18b8 186px,#ff0b9c 212px,#ff0083 242px)"></i><i style="background:linear-gradient(90deg,#0078ff 22px,#0177ff 25px,#5d60ff 71px,#ff38fe 146px,#ff26d9 165px,#ff17b9 187px,#ff0a9d 212px,#ff0085 241px)"></i><i style="background:linear-gradient(90deg,#07f 22px,#0176ff 25px,#5c5fff 71px,#ff36fe 147px,#ff25d9 166px,#ff17ba 187px,#ff0a9f 212px,#ff0087 240px)"></i><i style="background:linear-gradient(90deg,#0076ff 22px,#0174ff 25px,#595eff 70px,#ff35fe 148px,#ff25db 166px,#ff16bc 187px,#ff0aa1 211px,#ff0089 239px)"></i><i style="background:linear-gradient(90deg,#0074ff 22px,#0073ff 25px,#585dff 70px,#ff33fe 149px,#ff23db 167px,#ff15bc 188px,#ff0aa2 211px,#ff008b 238px)"></i><i style="background:linear-gradient(90deg,#0073ff 22px,#0072ff 25px,#555cff 69px,#a548ff 108px,#ff32fe 150px,#ff22dc 168px,#ff15be 188px,#ff09a4 211px,#ff008d 237px)"></i><i style="background:linear-gradient(90deg,#0071ff 23px,#0270ff 26px,#6058ff 75px,#ff30fe 151px,#ff22de 168px,#ff14c0 188px,#ff09a6 210px,#ff008f 236px)"></i><i style="background:linear-gradient(90deg,#0070ff 23px,#016eff 26px,#5f57ff 75px,#ff2ffe 152px,#ff20de 169px,#ff14c1 188px,#ff09a8 210px,#ff0091 235px)"></i><i style="background:linear-gradient(90deg,#006fff 23px,#016dff 26px,#5c56ff 74px,#ff2dfe 153px,#ff1fde 170px,#ff13c2 189px,#ff09a9 210px,#ff0093 234px)"></i><i style="background:linear-gradient(90deg,#006dff 23px,#016cff 26px,#5b55ff 74px,#ff2cff 154px,#ff1fe0 170px,#ff13c3 189px,#ff08aa 210px,#ff0095 233px)"></i><i style="background:linear-gradient(90deg,#006cff 23px,#006bff 26px,#5a54ff 74px,#ff2aff 155px,#ff1ee0 171px,#ff12c5 189px,#ff08ad 209px,#ff0097 232px)"></i><i style="background:linear-gradient(90deg,#006bff 23px,#006aff 26px,#5853ff 73px,#a640ff 113px,#ff29ff 156px,#ff1ce0 172px,#ff12c7 189px,#ff08ae 209px,#f09 231px)"></i><i style="background:linear-gradient(90deg,#0069ff 24px,#0268ff 27px,#624fff 79px,#ff28ff 157px,#ff1ce2 172px,#ff11c8 189px,#ff08b1 208px,#ff009b 230px)"></i><i style="background:linear-gradient(90deg,#0068ff 24px,#0167ff 27px,#614eff 79px,#ff26ff 158px,#ff1be2 173px,#ff10c8 190px,#ff07b2 208px,#ff009e 229px)"></i><i style="background:linear-gradient(90deg,#0067ff 24px,#0166ff 27px,#5e4eff 78px,#ff25ff 159px,#ff1ae2 174px,#ff10ca 190px,#ff07b4 208px,#ff00a0 228px)"></i><i style="background:linear-gradient(90deg,#06f 24px,#0164ff 27px,#5d4dff 78px,#ff24ff 160px,#ff19e4 174px,#ff10cc 190px,#ff07b5 208px,#ff00a2 227px)"></i><i style="background:linear-gradient(90deg,#0065ff 24px,#0063ff 27px,#5d4cff 78px,#f2f 161px,#ff18e4 175px,#ff0fcd 190px,#ff07b8 207px,#ff00a4 226px)"></i><i style="background:linear-gradient(90deg,#0063ff 24px,#0062ff 27px,#5a4bff 77px,#a737ff 118px,#ff21ff 162px,#ff17e5 176px,#ff0ece 191px,#ff00a6 226px)"></i><i style="background:linear-gradient(90deg,#0062ff 25px,#0261ff 28px,#6447ff 83px,#ff20ff 163px,#ff17e6 176px,#ff0ecf 191px,#ff00a8 225px)"></i><i style="background:linear-gradient(90deg,#0061ff 25px,#015fff 28px,#6147ff 82px,#ff1eff 164px,#ff15e7 177px,#ff0dd1 191px,#f0a 224px)"></i><i style="background:linear-gradient(90deg,#0060ff 25px,#015eff 28px,#6046ff 82px,#ff1dff 165px,#ff0dd3 191px,#ff00ad 223px)"></i><i style="background:linear-gradient(90deg,#005fff 25px,#015dff 28px,#5f45ff 82px,#ff1cff 166px,#ff0cd3 192px,#ff00af 222px)"></i><i style="background:linear-gradient(90deg,#005eff 25px,#005cff 28px,#5d45ff 81px,#ff1bff 167px,#ff0bd4 192px,#ff00b1 221px)"></i><i style="background:linear-gradient(90deg,#005dff 25px,#005bff 28px,#5c44ff 81px,#ff1aff 168px,#ff0bd6 192px,#ff00b4 220px)"></i><i style="background:linear-gradient(90deg,#005cff 25px,#025aff 29px,#5b43ff 81px,#a92fff 124px,#ff18ff 169px,#ff0bd8 192px,#ff00b6 219px)"></i><i style="background:linear-gradient(90deg,#005aff 26px,#0159ff 29px,#6340ff 86px,#ff17ff 170px,#ff0ad9 192px,#ff00b9 218px)"></i><i style="background:linear-gradient(90deg,#0059ff 26px,#0158ff 29px,#623fff 86px,#ff16ff 171px,#ff0adb 192px,#f0b 217px)"></i><i style="background:linear-gradient(90deg,#0058ff 26px,#0157ff 29px,#613eff 86px,#ff15ff 172px,#ff09db 193px,#ff00be 216px)"></i><i style="background:linear-gradient(90deg,#0057ff 26px,#0056ff 29px,#5f3dff 85px,#ff14ff 173px,#ff08dd 193px,#ff00c0 215px)"></i><i style="background:linear-gradient(90deg,#0056ff 26px,#05f 29px,#5e3dff 85px,#ff13ff 174px,#ff08df 193px,#ff00c3 214px)"></i><i style="background:linear-gradient(90deg,#05f 26px,#0254ff 30px,#5d3cff 85px,#ff12ff 175px,#ff08e0 193px,#ff00c6 213px)"></i><i style="background:linear-gradient(90deg,#0054ff 27px,#0153ff 30px,#6539ff 90px,#ff10ff 176px,#ff07e2 193px,#ff00c8 212px)"></i><i style="background:linear-gradient(90deg,#0053ff 27px,#0152ff 30px,#6438ff 90px,#ff0fff 177px,#ff07e4 193px,#ff00cb 211px)"></i><i style="background:linear-gradient(90deg,#0052ff 27px,#0151ff 30px,#6138ff 89px,#ff0eff 178px,#ff06e5 193px,#ff00ce 210px)"></i><i style="background:linear-gradient(90deg,#0051ff 27px,#0150ff 30px,#6037ff 89px,#ff0dff 179px,#ff06e7 193px,#ff00d0 209px)"></i><i style="background:linear-gradient(90deg,#0050ff 27px,#004fff 30px,#6036ff 89px,#ff0cff 180px,#ff00d3 208px)"></i><i style="background:linear-gradient(90deg,#004fff 27px,#004eff 30px,#5d36ff 88px,#ff0bff 181px,#ff00d6 207px)"></i><i style="background:linear-gradient(90deg,#004eff 28px,#014dff 31px,#6632ff 94px,#ff0aff 182px,#ff00d9 206px)"></i><i style="background:linear-gradient(90deg,#004dff 28px,#014cff 31px,#6532ff 94px,#ff09ff 183px,#ff00dc 205px)"></i><i style="background:linear-gradient(90deg,#004cff 28px,#014bff 31px,#6331ff 93px,#ff08ff 184px,#ff00df 204px)"></i><i style="background:linear-gradient(90deg,#004bff 28px,#014aff 31px,#6231ff 93px,#ff07ff 185px,#ff00e2 203px)"></i><i style="background:linear-gradient(90deg,#004bff 28px,#0049ff 31px,#6130ff 93px,#fd07ff 185px,#ff00e5 202px)"></i><i style="background:linear-gradient(90deg,#004aff 28px,#0049ff 31px,#5f30ff 92px,#ae1bff 140px,#fd06ff 186px,#ff00e8 201px)"></i><i style="background:linear-gradient(90deg,#0048ff 29px,#0646ff 35px,#682cff 98px,#fd05ff 187px,#ff00eb 200px)"></i><i style="background:linear-gradient(90deg,#0048ff 29px,#0146ff 32px,#672cff 98px,#fd04ff 188px,#f0e 199px)"></i><i style="background:linear-gradient(90deg,#0047ff 29px,#0146ff 32px,#642bff 97px,#fd03ff 189px,#ff00f2 198px)"></i><i style="background:linear-gradient(90deg,#0046ff 29px,#0145ff 32px,#642bff 97px,#fd02ff 190px,#ff00f5 197px)"></i><i style="background:linear-gradient(90deg,#0045ff 29px,#04f 32px,#612aff 96px,#fd01ff 191px,#ff00f8 196px)"></i><i style="background:linear-gradient(90deg,#0045ff 29px,#0043ff 32px,#4e2fff 84px,#a518ff 139px,#fd00ff 192px,#ff00fb 195px)"></i><i style="background:linear-gradient(90deg,#0043ff 30px,#0043ff 32px,#0940ff 38px,#6927ff 102px,#f0f 194px)"></i><i style="background:linear-gradient(90deg,#0043ff 30px,#0341ff 34px,#6726ff 101px,#fc00ff 193px)"></i><i style="background:linear-gradient(90deg,#0042ff 30px,#0141ff 33px,#6327ff 99px,#f800ff 192px)"></i><i style="background:linear-gradient(90deg,#0041ff 30px,#0140ff 33px,#5f27ff 97px,#f500ff 191px)"></i><i style="background:linear-gradient(90deg,#0040ff 30px,#003fff 33px,#5d27ff 96px,#f200ff 190px)"></i><i style="background:linear-gradient(90deg,#0040ff 30px,#003fff 33px,#5927ff 94px,#ef00ff 189px)"></i><i style="background:linear-gradient(90deg,#003fff 30px,#013dff 34px,#5527ff 92px,#eb00ff 188px)"></i><i style="background:linear-gradient(90deg,#003eff 31px,#013dff 34px,#5c24ff 97px,#e800ff 187px)"></i><i style="background:linear-gradient(90deg,#003dff 31px,#013cff 34px,#5825ff 95px,#e500ff 186px)"></i><i style="background:linear-gradient(90deg,#003cff 31px,#013bff 34px,#5624ff 94px,#e200ff 185px)"></i><i style="background:linear-gradient(90deg,#003cff 31px,#003bff 34px,#5325ff 92px,#df00ff 184px)"></i><i style="background:linear-gradient(90deg,#003bff 31px,#003aff 34px,#4f25ff 90px,#dc00ff 183px)"></i><i style="background:linear-gradient(90deg,#003aff 31px,#0139ff 35px,#4c25ff 88px,#d900ff 182px)"></i><i style="background:linear-gradient(90deg,#0039ff 32px,#0138ff 35px,#5222ff 93px,#d600ff 181px)"></i><i style="background:linear-gradient(90deg,#0039ff 32px,#0138ff 35px,#5022ff 92px,#d300ff 180px)"></i><i style="background:linear-gradient(90deg,#0038ff 32px,#0137ff 35px,#4d22ff 90px,#d200ff 180px)"></i><i style="background:linear-gradient(90deg,#0037ff 32px,#0036ff 35px,#4923ff 88px,#cf00ff 179px)"></i><i style="background:linear-gradient(90deg,#0037ff 32px,#0036ff 35px,#4722ff 87px,#c0f 178px)"></i><i style="background:linear-gradient(90deg,#0036ff 32px,#0035ff 35px,#4423ff 85px,#c900ff 177px)"></i><i style="background:linear-gradient(90deg,#0035ff 33px,#0134ff 36px,#4a20ff 90px,#c600ff 176px)"></i><i style="background:linear-gradient(90deg,#0034ff 33px,#0133ff 36px,#4720ff 88px,#c400ff 175px)"></i><i style="background:linear-gradient(90deg,#0034ff 33px,#0133ff 36px,#4421ff 86px,#c100ff 174px)"></i><i style="background:linear-gradient(90deg,#03f 33px,#0032ff 36px,#4021ff 84px,#be00ff 173px)"></i><i style="background:linear-gradient(90deg,#03f 33px,#0032ff 36px,#3d21ff 82px,#bc00ff 172px)"></i><i style="background:linear-gradient(90deg,#0032ff 33px,#0031ff 36px,#3a21ff 80px,#b900ff 171px)"></i><i style="background:linear-gradient(90deg,#0031ff 34px,#0130ff 37px,#411fff 86px,#b600ff 170px)"></i><i style="background:linear-gradient(90deg,#0031ff 34px,#012fff 37px,#3e1fff 84px,#b400ff 169px)"></i><i style="background:linear-gradient(90deg,#0030ff 34px,#012fff 37px,#3b1fff 82px,#b100ff 168px)"></i><i style="background:linear-gradient(90deg,#002fff 34px,#002eff 37px,#381fff 80px,#af00ff 167px)"></i><i style="background:linear-gradient(90deg,#002fff 34px,#002eff 37px,#351fff 78px,#ac00ff 166px)"></i><i style="background:linear-gradient(90deg,#002eff 34px,#002dff 37px,#3220ff 76px,#a0f 165px)"></i><i style="background:linear-gradient(90deg,#002dff 35px,#012cff 38px,#3a1dff 83px,#a700ff 164px)"></i><i style="background:linear-gradient(90deg,#002dff 35px,#012cff 38px,#361dff 80px,#a500ff 163px)"></i><i style="background:linear-gradient(90deg,#002cff 35px,#012bff 38px,#331dff 78px,#a300ff 162px)"></i><i style="background:linear-gradient(90deg,#002cff 35px,#002bff 38px,#301eff 76px,#a000ff 161px)"></i><i style="background:linear-gradient(90deg,#002bff 35px,#002aff 38px,#2d1eff 74px,#9e00ff 160px)"></i><i style="background:linear-gradient(90deg,#002bff 35px,#002aff 38px,#291eff 71px,#9c00ff 159px)"></i><i style="background:linear-gradient(90deg,#002aff 36px,#0129ff 39px,#331bff 79px,#90f 158px)"></i><i style="background:linear-gradient(90deg,#0029ff 36px,#0128ff 39px,#2e1cff 76px,#9700ff 157px)"></i><i style="background:linear-gradient(90deg,#0029ff 36px,#0128ff 39px,#2c1cff 74px,#9500ff 156px)"></i><i style="background:linear-gradient(90deg,#0028ff 36px,#0127ff 39px,#271cff 71px,#9300ff 155px)"></i><i style="background:linear-gradient(90deg,#0028ff 36px,#0027ff 39px,#251dff 69px,#9100ff 154px)"></i><i style="background:linear-gradient(90deg,#0027ff 36px,#0026ff 39px,#211dff 66px,#8e00ff 153px)"></i><i style="background:linear-gradient(90deg,#0027ff 36px,#0026ff 39px,#1e1dff 64px,#8c00ff 152px)"></i><i style="background:linear-gradient(90deg,#0026ff 37px,#0125ff 40px,#271aff 72px,#8a00ff 151px)"></i><i style="background:linear-gradient(90deg,#0025ff 37px,#0124ff 40px,#231bff 69px,#80f 150px)"></i><i style="background:linear-gradient(90deg,#0025ff 37px,#0124ff 40px,#201bff 67px,#8600ff 149px)"></i><i style="background:linear-gradient(90deg,#0024ff 37px,#0023ff 40px,#1d1cff 64px,#8400ff 148px)"></i><i style="background:linear-gradient(90deg,#0024ff 37px,#0023ff 40px,#191cff 61px,#8200ff 147px)"></i><i style="background:linear-gradient(90deg,#0023ff 37px,#02f 40px,#151dff 58px,#8000ff 146px)"></i><i style="background:linear-gradient(90deg,#0023ff 38px,#0122ff 41px,#1f19ff 67px,#7e00ff 145px)"></i><i style="background:linear-gradient(90deg,#02f 38px,#0121ff 41px,#1d19ff 65px,#7c00ff 144px)"></i><i style="background:linear-gradient(90deg,#02f 38px,#0121ff 41px,#191aff 62px,#7a00ff 143px)"></i><i style="background:linear-gradient(90deg,#0021ff 38px,#0020ff 41px,#151bff 59px,#7800ff 142px)"></i><i style="background:linear-gradient(90deg,#0021ff 38px,#0020ff 41px,#111bff 56px,#7600ff 141px)"></i><i style="background:linear-gradient(90deg,#0020ff 38px,#001fff 41px,#0e1cff 53px,#7400ff 140px)"></i><i style="background:linear-gradient(90deg,#0020ff 39px,#011fff 42px,#1918ff 63px,#7200ff 139px)"></i><i style="background:linear-gradient(90deg,#001fff 39px,#011eff 42px,#1419ff 59px,#7000ff 138px)"></i><i style="background:linear-gradient(90deg,#001fff 39px,#011eff 42px,#1019ff 56px,#6e00ff 137px)"></i><i style="background:linear-gradient(90deg,#001eff 39px,#001dff 42px,#0d1aff 53px,#6d00ff 136px)"></i><i style="background:linear-gradient(90deg,#001eff 39px,#001dff 42px,#091aff 50px,#6b00ff 135px)"></i><i style="background:linear-gradient(90deg,#001dff 39px,#001cff 42px,#071bff 48px,#6a00ff 135px)"></i><i style="background:linear-gradient(90deg,#001dff 40px,#1217ff 58px,#6800ff 134px)"></i><i style="background:linear-gradient(90deg,#001cff 40px,#011bff 43px,#0e18ff 55px,#6700ff 133px)"></i><i style="background:linear-gradient(90deg,#001cff 40px,#011bff 43px,#0a18ff 52px,#6500ff 132px)"></i><i style="background:linear-gradient(90deg,#001bff 40px,#0619ff 48px,#6300ff 131px)"></i><i style="background:linear-gradient(90deg,#001bff 40px,#0219ff 45px,#6100ff 130px)"></i><i style="background:linear-gradient(90deg,#001bff 40px,#001aff 43px,#6000ff 129px)"></i><i style="background:linear-gradient(90deg,#001aff 41px,#0b16ff 53px,#5e00ff 128px)"></i><i style="background:linear-gradient(90deg,#0019ff 41px,#0617ff 49px,#5c00ff 127px)"></i><i style="background:linear-gradient(90deg,#0019ff 41px,#0318ff 46px,#5a00ff 126px)"></i><i style="background:linear-gradient(90deg,#0019ff 41px,#0018ff 44px,#5900ff 125px)"></i><i style="background:linear-gradient(90deg,#0018ff 41px,#0017ff 44px,#5700ff 124px)"></i><i style="background:linear-gradient(90deg,#0018ff 41px,#0017ff 44px,#5600ff 123px)"></i><i style="background:linear-gradient(90deg,#0017ff 41px,#0116ff 45px,#5400ff 122px)"></i><i style="background:linear-gradient(90deg,#0017ff 42px,#0116ff 45px,#5200ff 121px)"></i><i style="background:linear-gradient(90deg,#0016ff 42px,#0116ff 45px,#5100ff 120px)"></i><i style="background:linear-gradient(90deg,#0016ff 42px,#0015ff 45px,#4f00ff 119px)"></i><i style="background:linear-gradient(90deg,#0016ff 42px,#0015ff 45px,#4e00ff 118px)"></i><i style="background:linear-gradient(90deg,#0015ff 42px,#0014ff 45px,#4c00ff 117px)"></i><i style="background:linear-gradient(90deg,#0015ff 42px,#0114ff 46px,#4a00ff 116px)"></i><i style="background:linear-gradient(90deg,#0014ff 43px,#0113ff 46px,#4900ff 115px)"></i><i style="background:linear-gradient(90deg,#0014ff 43px,#0113ff 46px,#4700ff 114px)"></i><i style="background:linear-gradient(90deg,#0014ff 43px,#0013ff 46px,#4600ff 113px)"></i><i style="background:linear-gradient(90deg,#0013ff 43px,#0012ff 46px,#40f 112px)"></i><i style="background:linear-gradient(90deg,#0013ff 43px,#0012ff 46px,#4300ff 111px)"></i><i style="background:linear-gradient(90deg,#0012ff 43px,#0012ff 46px,#4200ff 110px)"></i><i style="background:linear-gradient(90deg,#0012ff 44px,#0111ff 47px,#4000ff 109px)"></i><i style="background:linear-gradient(90deg,#0012ff 44px,#0111ff 47px,#3f00ff 108px)"></i><i style="background:linear-gradient(90deg,#01f 44px,#0110ff 47px,#3d00ff 107px)"></i><i style="background:linear-gradient(90deg,#01f 44px,#0010ff 47px,#3c00ff 106px)"></i><i style="background:linear-gradient(90deg,#0010ff 44px,#0010ff 47px,#3a00ff 105px)"></i><i style="background:linear-gradient(90deg,#0010ff 44px,#000fff 47px,#3900ff 104px)"></i><i style="background:linear-gradient(90deg,#0010ff 45px,#010fff 48px,#3800ff 103px)"></i><i style="background:linear-gradient(90deg,#000fff 45px,#010eff 48px,#3600ff 102px)"></i><i style="background:linear-gradient(90deg,#000fff 45px,#010eff 48px,#3500ff 101px)"></i><i style="background:linear-gradient(90deg,#000fff 45px,#000eff 48px,#3400ff 100px)"></i><i style="background:linear-gradient(90deg,#000eff 45px,#000dff 48px,#3200ff 99px)"></i><i style="background:linear-gradient(90deg,#000eff 45px,#000dff 48px,#3100ff 98px)"></i><i style="background:linear-gradient(90deg,#000dff 46px,#3000ff 97px)"></i><i style="background:linear-gradient(90deg,#000dff 46px,#010cff 49px,#2e00ff 96px)"></i><i style="background:linear-gradient(90deg,#000dff 46px,#010cff 49px,#2d00ff 95px)"></i><i style="background:linear-gradient(90deg,#000cff 46px,#000cff 49px,#2c00ff 94px)"></i><i style="background:linear-gradient(90deg,#000cff 46px,#000bff 49px,#2a00ff 93px)"></i><i style="background:linear-gradient(90deg,#000cff 46px,#000bff 49px,#2900ff 92px)"></i><i style="background:linear-gradient(90deg,#000bff 47px,#2800ff 91px)"></i><i style="background:linear-gradient(90deg,#000bff 47px,#2700ff 90px)"></i><i style="background:linear-gradient(90deg,#000bff 47px,#010aff 50px,#2500ff 89px)"></i><i style="background:linear-gradient(90deg,#000aff 47px,#000aff 50px,#2500ff 89px)"></i><i style="background:linear-gradient(90deg,#000aff 47px,#0009ff 50px,#2400ff 88px)"></i><i style="background:linear-gradient(90deg,#000aff 47px,#0009ff 50px,#2300ff 87px)"></i><i style="background:linear-gradient(90deg,#0009ff 47px,#0009ff 50px,#2100ff 86px)"></i><i style="background:linear-gradient(90deg,#0009ff 48px,#2000ff 85px)"></i><i style="background:linear-gradient(90deg,#0009ff 48px,#0108ff 51px,#1f00ff 84px)"></i><i style="background:linear-gradient(90deg,#0008ff 48px,#0008ff 51px,#1e00ff 83px)"></i><i style="background:linear-gradient(90deg,#0008ff 48px,#0007ff 51px,#1d00ff 82px)"></i><i style="background:linear-gradient(90deg,#0008ff 48px,#0007ff 51px,#1c00ff 81px)"></i><i style="background:linear-gradient(90deg,#0007ff 48px,#0007ff 51px,#1a00ff 80px)"></i><i style="background:linear-gradient(90deg,#0007ff 49px,#1900ff 79px)"></i><i style="background:linear-gradient(90deg,#0007ff 49px,#1800ff 78px)"></i><i style="background:linear-gradient(90deg,#0006ff 49px,#0006ff 52px,#1700ff 77px)"></i><i style="background:linear-gradient(90deg,#0006ff 49px,#0005ff 52px,#1600ff 76px)"></i><i style="background:linear-gradient(90deg,#0006ff 49px,#0005ff 52px,#1500ff 75px)"></i><i style="background:linear-gradient(90deg,#0006ff 49px,#0005ff 52px,#1400ff 74px)"></i><i style="background:linear-gradient(90deg,#0005ff 50px,#1200ff 73px)"></i><i style="background:linear-gradient(90deg,#0005ff 50px,#10f 72px)"></i><i style="background:linear-gradient(90deg,#0005ff 50px,#1000ff 71px)"></i><i style="background:linear-gradient(90deg,#0004ff 50px,#0f00ff 70px)"></i><i style="background:linear-gradient(90deg,#0004ff 50px,#0003ff 53px,#0e00ff 69px)"></i><i style="background:linear-gradient(90deg,#0004ff 50px,#0003ff 53px,#0d00ff 68px)"></i><i style="background:linear-gradient(90deg,#0003ff 51px,#0c00ff 67px)"></i><i style="background:linear-gradient(90deg,#0003ff 51px,#0b00ff 66px)"></i><i style="background:linear-gradient(90deg,#0003ff 51px,#0a00ff 65px)"></i><i style="background:linear-gradient(90deg,#0002ff 51px,#0900ff 64px)"></i><i style="background:linear-gradient(90deg,#0002ff 51px,#0800ff 63px)"></i><i style="background:linear-gradient(90deg,#0002ff 51px,#0700ff 62px)"></i><i style="background:linear-gradient(90deg,#0001ff 52px,#0600ff 61px)"></i><i style="background:linear-gradient(90deg,#0001ff 52px,#0500ff 60px)"></i><i style="background:linear-gradient(90deg,#0001ff 52px,#0400ff 59px)"></i><i style="background:linear-gradient(90deg,#0001ff 52px,#0300ff 58px)"></i><i style="background:linear-gradient(90deg,#0001ff 52px,#0200ff 57px)"></i><i></i></div></div>
<div class="a" style="left:1441px;top:430px;width:212px;height:144.5px;background:linear-gradient(129.1deg,#aeff00 0%,#ffff00 49.6%,#ffb900 100%)"><div class="a" style="left:0;top:0;width:212px;height:144.5px;background:rgba(0,0,0,.39);clip-path:polygon(0 0,212px 0,212px 128.5px,0 16px)"></div></div>
<svg id="ov" width="1664" height="944" viewBox="0 0 1664 944"><defs><linearGradient id="g1" x1="0" y1="0" x2="0" y2="1"><stop offset="0" stop-color="#404040"/><stop offset="1" stop-color="#333"/></linearGradient><linearGradient id="g2" x1="0" y1="0" x2="0" y2="1"><stop offset="0" stop-color="#2c2c2c"/><stop offset="1" stop-color="#484848"/></linearGradient><linearGradient id="g3" x1="0" y1="0" x2="0" y2="1"><stop offset="0" stop-color="#454545"/><stop offset="0.5" stop-color="#5a5a5a"/><stop offset="1" stop-color="#6c6c6c"/></linearGradient><linearGradient id="g4" x1="0" y1="0" x2="0" y2="1"><stop offset="0" stop-color="#343434"/><stop offset="1" stop-color="#727272"/></linearGradient><linearGradient id="g5" x1="0" y1="0" x2="0" y2="1"><stop offset="0" stop-color="#909090"/><stop offset="0.5" stop-color="#6c6c6c"/><stop offset="1" stop-color="#525252"/></linearGradient><linearGradient id="g6" x1="0" y1="0" x2="0" y2="1"><stop offset="0" stop-color="#585858"/><stop offset="1" stop-color="#8c8c8c"/></linearGradient><linearGradient id="g7" x1="0" y1="0" x2="1" y2="0"><stop offset="0" stop-color="#da5c5c"/><stop offset="0.3" stop-color="#c81010"/><stop offset="0.7" stop-color="#b80f0f"/><stop offset="1" stop-color="#5a0707"/></linearGradient><linearGradient id="g8" x1="0" y1="0" x2="1" y2="0"><stop offset="0" stop-color="#5cda5c"/><stop offset="0.3" stop-color="#10c810"/><stop offset="0.7" stop-color="#0fb80f"/><stop offset="1" stop-color="#075a07"/></linearGradient><linearGradient id="g9" x1="0" y1="0" x2="1" y2="0"><stop offset="0" stop-color="#5c5cda"/><stop offset="0.3" stop-color="#1010c8"/><stop offset="0.7" stop-color="#0f0fb8"/><stop offset="1" stop-color="#07075a"/></linearGradient><linearGradient id="g10" x1="0" y1="0" x2="1" y2="0"><stop offset="0" stop-color="#5cdada"/><stop offset="0.3" stop-color="#10c8c8"/><stop offset="0.7" stop-color="#0fb8b8"/><stop offset="1" stop-color="#075a5a"/></linearGradient><linearGradient id="g11" x1="0" y1="0" x2="1" y2="0"><stop offset="0" stop-color="#da5cda"/><stop offset="0.3" stop-color="#c810c8"/><stop offset="0.7" stop-color="#b80fb8"/><stop offset="1" stop-color="#5a075a"/></linearGradient><linearGradient id="g12" x1="0" y1="0" x2="1" y2="0"><stop offset="0" stop-color="#dada5c"/><stop offset="0.3" stop-color="#c8c810"/><stop offset="0.7" stop-color="#b8b80f"/><stop offset="1" stop-color="#5a5a07"/></linearGradient><linearGradient id="g13" x1="0" y1="0" x2="1" y2="0"><stop offset="0" stop-color="#da8181"/><stop offset="0.3" stop-color="#c84646"/><stop offset="0.7" stop-color="#b84040"/><stop offset="1" stop-color="#5a2020"/></linearGradient><linearGradient id="g14" x1="0" y1="0" x2="1" y2="0"><stop offset="0" stop-color="#81da81"/><stop offset="0.3" stop-color="#46c846"/><stop offset="0.7" stop-color="#40b840"/><stop offset="1" stop-color="#205a20"/></linearGradient><linearGradient id="g15" x1="0" y1="0" x2="1" y2="0"><stop offset="0" stop-color="#8181da"/><stop offset="0.3" stop-color="#4646c8"/><stop offset="0.7" stop-color="#4040b8"/><stop offset="1" stop-color="#20205a"/></linearGradient><linearGradient id="g16" x1="0" y1="0" x2="1" y2="0"><stop offset="0" stop-color="#81dada"/><stop offset="0.3" stop-color="#46c8c8"/><stop offset="0.7" stop-color="#40b8b8"/><stop offset="1" stop-color="#205a5a"/></linearGradient><linearGradient id="g17" x1="0" y1="0" x2="1" y2="0"><stop offset="0" stop-color="#da81da"/><stop offset="0.3" stop-color="#c846c8"/><stop offset="0.7" stop-color="#b840b8"/><stop offset="1" stop-color="#5a205a"/></linearGradient><linearGradient id="g18" x1="0" y1="0" x2="1" y2="0"><stop offset="0" stop-color="#dada81"/><stop offset="0.3" stop-color="#c8c846"/><stop offset="0.7" stop-color="#b8b840"/><stop offset="1" stop-color="#5a5a20"/></linearGradient><linearGradient id="g19" x1="0" y1="0" x2="1" y2="0"><stop offset="0" stop-color="#da9c9c"/><stop offset="0.3" stop-color="#c86e6e"/><stop offset="0.7" stop-color="#b86565"/><stop offset="1" stop-color="#5a3232"/></linearGradient><linearGradient id="g20" x1="0" y1="0" x2="1" y2="0"><stop offset="0" stop-color="#9cda9c"/><stop offset="0.3" stop-color="#6ec86e"/><stop offset="0.7" stop-color="#65b865"/><stop offset="1" stop-color="#325a32"/></linearGradient><linearGradient id="g21" x1="0" y1="0" x2="1" y2="0"><stop offset="0" stop-color="#9c9cda"/><stop offset="0.3" stop-color="#6e6ec8"/><stop offset="0.7" stop-color="#6565b8"/><stop offset="1" stop-color="#32325a"/></linearGradient><linearGradient id="g22" x1="0" y1="0" x2="1" y2="0"><stop offset="0" stop-color="#9cdada"/><stop offset="0.3" stop-color="#6ec8c8"/><stop offset="0.7" stop-color="#65b8b8"/><stop offset="1" stop-color="#325a5a"/></linearGradient><linearGradient id="g23" x1="0" y1="0" x2="1" y2="0"><stop offset="0" stop-color="#da9cda"/><stop offset="0.3" stop-color="#c86ec8"/><stop offset="0.7" stop-color="#b865b8"/><stop offset="1" stop-color="#5a325a"/></linearGradient><linearGradient id="g24" x1="0" y1="0" x2="1" y2="0"><stop offset="0" stop-color="#dada9c"/><stop offset="0.3" stop-color="#c8c86e"/><stop offset="0.7" stop-color="#b8b865"/><stop offset="1" stop-color="#5a5a32"/></linearGradient><linearGradient id="g25" x1="0" y1="0" x2="1" y2="0"><stop offset="0" stop-color="#dab3b3"/><stop offset="0.3" stop-color="#c88f8f"/><stop offset="0.7" stop-color="#b88484"/><stop offset="1" stop-color="#5a4141"/></linearGradient><linearGradient id="g26" x1="0" y1="0" x2="1" y2="0"><stop offset="0" stop-color="#b3dab3"/><stop offset="0.3" stop-color="#8fc88f"/><stop offset="0.7" stop-color="#84b884"/><stop offset="1" stop-color="#415a41"/></linearGradient><linearGradient id="g27" x1="0" y1="0" x2="1" y2="0"><stop offset="0" stop-color="#b3b3da"/><stop offset="0.3" stop-color="#8f8fc8"/><stop offset="0.7" stop-color="#8484b8"/><stop offset="1" stop-color="#41415a"/></linearGradient><linearGradient id="g28" x1="0" y1="0" x2="1" y2="0"><stop offset="0" stop-color="#b3dada"/><stop offset="0.3" stop-color="#8fc8c8"/><stop offset="0.7" stop-color="#84b8b8"/><stop offset="1" stop-color="#415a5a"/></linearGradient><linearGradient id="g29" x1="0" y1="0" x2="1" y2="0"><stop offset="0" stop-color="#dab3da"/><stop offset="0.3" stop-color="#c88fc8"/><stop offset="0.7" stop-color="#b884b8"/><stop offset="1" stop-color="#5a415a"/></linearGradient><linearGradient id="g30" x1="0" y1="0" x2="1" y2="0"><stop offset="0" stop-color="#dadab3"/><stop offset="0.3" stop-color="#c8c88f"/><stop offset="0.7" stop-color="#b8b884"/><stop offset="1" stop-color="#5a5a41"/></linearGradient><linearGradient id="g31" x1="0" y1="0" x2="1" y2="0"><stop offset="0" stop-color="#dac7c7"/><stop offset="0.3" stop-color="#c8adad"/><stop offset="0.7" stop-color="#b89f9f"/><stop offset="1" stop-color="#5a4e4e"/></linearGradient><linearGradient id="g32" x1="0" y1="0" x2="1" y2="0"><stop offset="0" stop-color="#c7dac7"/><stop offset="0.3" stop-color="#adc8ad"/><stop offset="0.7" stop-color="#9fb89f"/><stop offset="1" stop-color="#4e5a4e"/></linearGradient><linearGradient id="g33" x1="0" y1="0" x2="1" y2="0"><stop offset="0" stop-color="#c7c7da"/><stop offset="0.3" stop-color="#adadc8"/><stop offset="0.7" stop-color="#9f9fb8"/><stop offset="1" stop-color="#4e4e5a"/></linearGradient><linearGradient id="g34" x1="0" y1="0" x2="1" y2="0"><stop offset="0" stop-color="#c7dada"/><stop offset="0.3" stop-color="#adc8c8"/><stop offset="0.7" stop-color="#9fb8b8"/><stop offset="1" stop-color="#4e5a5a"/></linearGradient><linearGradient id="g35" x1="0" y1="0" x2="1" y2="0"><stop offset="0" stop-color="#dac7da"/><stop offset="0.3" stop-color="#c8adc8"/><stop offset="0.7" stop-color="#b89fb8"/><stop offset="1" stop-color="#5a4e5a"/></linearGradient><linearGradient id="g36" x1="0" y1="0" x2="1" y2="0"><stop offset="0" stop-color="#dadac7"/><stop offset="0.3" stop-color="#c8c8ad"/><stop offset="0.7" stop-color="#b8b89f"/><stop offset="1" stop-color="#5a5a4e"/></linearGradient><linearGradient id="g37" x1="0" y1="0" x2="1" y2="0"><stop offset="0" stop-color="#fff"/><stop offset="0.45" stop-color="#f4f4f4"/><stop offset="1" stop-color="#909090"/></linearGradient><linearGradient id="g38" x1="0" y1="0" x2="0" y2="1"><stop offset="0" stop-color="#d6d650"/><stop offset="0.18" stop-color="#caca10"/><stop offset="0.5" stop-color="#c4c400"/><stop offset="0.72" stop-color="#aaaa00"/><stop offset="1" stop-color="#5a5a00"/></linearGradient><linearGradient id="g39" x1="0" y1="0" x2="0" y2="1"><stop offset="0" stop-color="#d6d650"/><stop offset="0.18" stop-color="#caca10"/><stop offset="0.5" stop-color="#c4c400"/><stop offset="0.72" stop-color="#aaaa00"/><stop offset="1" stop-color="#5a5a00"/></linearGradient><linearGradient id="g40" x1="0" y1="0" x2="0" y2="1"><stop offset="0" stop-color="#d6d650"/><stop offset="0.18" stop-color="#caca10"/><stop offset="0.5" stop-color="#c4c400"/><stop offset="0.72" stop-color="#aaaa00"/><stop offset="1" stop-color="#5a5a00"/></linearGradient><linearGradient id="g41" x1="0" y1="0" x2="0" y2="1"><stop offset="0" stop-color="#ff5c5c"/><stop offset="0.5" stop-color="#ff3838"/><stop offset="1" stop-color="#ff1616"/></linearGradient><linearGradient id="g42" x1="0" y1="0" x2="0" y2="1"><stop offset="0" stop-color="#5cae5c"/><stop offset="0.5" stop-color="#389a38"/><stop offset="1" stop-color="#108410"/></linearGradient><linearGradient id="g43" x1="0" y1="0" x2="0" y2="1"><stop offset="0" stop-color="#5c5cff"/><stop offset="0.5" stop-color="#2a2aff"/><stop offset="0.8" stop-color="#0404ff"/><stop offset="1" stop-color="#0000fa"/></linearGradient><linearGradient id="g44" x1="0" y1="0" x2="0" y2="1"><stop offset="0" stop-color="#2d2d2d"/><stop offset="0.5" stop-color="#2a2a2a"/><stop offset="0.52" stop-color="#131313"/><stop offset="1" stop-color="#1c1c1c"/></linearGradient><linearGradient id="g45" x1="0" y1="0" x2="0" y2="1"><stop offset="0" stop-color="#4a4a4a"/><stop offset="0.5" stop-color="#383838"/><stop offset="1" stop-color="#2a2a2a"/></linearGradient><linearGradient id="g46" x1="0" y1="0" x2="0" y2="1"><stop offset="0" stop-color="#a0a0a0"/><stop offset="0.08" stop-color="#8e8e8e"/><stop offset="1" stop-color="#555"/></linearGradient><linearGradient id="g47" x1="0" y1="0" x2="0" y2="1"><stop offset="0" stop-color="#191919"/><stop offset="1" stop-color="#383838"/></linearGradient><linearGradient id="g48" x1="0" y1="0" x2="0" y2="1"><stop offset="0" stop-color="#707070"/><stop offset="1" stop-color="#a6a6a6"/></linearGradient><linearGradient id="g49" x1="0" y1="0" x2="0" y2="1"><stop offset="0" stop-color="#a6a6a6"/><stop offset="0.1" stop-color="#8c8c8c"/><stop offset="1" stop-color="#686868"/></linearGradient><linearGradient id="g50" x1="0" y1="0" x2="0" y2="1"><stop offset="0" stop-color="#bcbcbc"/><stop offset="0.51" stop-color="#b0b0b0"/><stop offset="0.52" stop-color="#8e8e8e"/><stop offset="1" stop-color="#8c8c8c"/></linearGradient><linearGradient id="g51" x1="0" y1="0" x2="0" y2="1"><stop offset="0" stop-color="#1e1e1e"/><stop offset="0.5" stop-color="#1a1a1a"/><stop offset="0.52" stop-color="#000"/><stop offset="1" stop-color="#000"/></linearGradient><linearGradient id="g52" x1="0" y1="0" x2="0" y2="1"><stop offset="0" stop-color="#a8a8a8"/><stop offset="0.06" stop-color="#a0a0a0"/><stop offset="1" stop-color="#686868"/></linearGradient><linearGradient id="g53" x1="0" y1="0" x2="0" y2="1"><stop offset="0" stop-color="#7c7c7c"/><stop offset="0.5" stop-color="#8c8c8c"/><stop offset="1" stop-color="#a8a8a8"/></linearGradient><linearGradient id="g54" x1="0" y1="0" x2="0" y2="1"><stop offset="0" stop-color="#343434"/><stop offset="1" stop-color="#2c2c2c"/></linearGradient><linearGradient id="g55" x1="0" y1="0" x2="0" y2="1"><stop offset="0" stop-color="#262626"/><stop offset="1" stop-color="#3c3c3c"/></linearGradient><linearGradient id="g56" x1="0" y1="0" x2="0" y2="1"><stop offset="0" stop-color="#b0b0b0"/><stop offset="0.12" stop-color="#9a9a9a"/><stop offset="1" stop-color="#868686"/></linearGradient><linearGradient id="g57" x1="0" y1="0" x2="0" y2="1"><stop offset="0" stop-color="#868686"/><stop offset="1" stop-color="#b2b2b2"/></linearGradient></defs>
<rect x="0.00" y="0.00" width="1664.00" height="39.20" fill="#222"/>
<rect x="1.00" y="38.00" width="1.10" height="906.00" fill="#232323"/>
<rect x="0.00" y="0.00" width="1.00" height="944.00" fill="#585858"/>
<path d="M1.5 38.200V6.500a5 5 0 0 1 5-5H110.500a5 5 0 0 1 5 5V38.200" fill="url(#g1)" stroke="#8a8a8a" stroke-width="1"/>
<line x1="74.50" y1="2.00" x2="74.50" y2="38.50" stroke="#808080" stroke-width="1"/>
<text x="8.5" y="26.0" font-size="14" fill="#e8e8e8" textLength="58.5" lengthAdjust="spacingAndGlyphs">History 1</text>
<circle cx="93.7" cy="21.6" r="12" fill="url(#g2)"/>
<path d="M90.300 23.500h7M93.800 20v7" stroke="#8c8c8c" stroke-width="1" fill="none"/>
<path d="M1056.0 38.5V6a5 5 0 0 1 5-5H1229.0a5 5 0 0 1 5 5V38.5z" fill="url(#g3)"/>
<path d="M1056.0 38.5V6a5 5 0 0 1 5-5h2V38.5z" fill="#14d214"/>
<text x="1067.0" y="15.3" font-size="13.5" fill="#f0f0f0" textLength="82.0" lengthAdjust="spacingAndGlyphs">X-Rite i1Pro 3</text>
<text x="1067.0" y="34.0" font-size="13.5" fill="#f0f0f0" textLength="69.5" lengthAdjust="spacingAndGlyphs">Direct View</text>
<circle cx="1165.4" cy="19.2" r="12" fill="url(#g4)"/>
<path d="M1159.2 17.8h12.4l-6.2 6.6z" fill="#fff"/>
<line x1="1189.50" y1="3.00" x2="1189.50" y2="38.00" stroke="#444" stroke-width="1"/>
<line x1="1190.50" y1="3.00" x2="1190.50" y2="38.00" stroke="#777" stroke-width="1"/>
<circle cx="1215.4" cy="19.6" r="15.6" fill="#0000f2" stroke="#fff" stroke-width="1.2"/>
<text x="1215.4" y="24.2" font-size="13" fill="#fff" text-anchor="middle" textLength="20.0" lengthAdjust="spacingAndGlyphs">694</text>
<path d="M1242.0 38.5V6a5 5 0 0 1 5-5H1398.5a5 5 0 0 1 5 5V38.5z" fill="url(#g3)"/>
<path d="M1242.0 38.5V6a5 5 0 0 1 5-5h2V38.5z" fill="#14d214"/>
<text x="1253.5" y="15.3" font-size="13.5" fill="#f0f0f0" textLength="80.0" lengthAdjust="spacingAndGlyphs">Mobile Forge</text>
<circle cx="1384.0" cy="19.2" r="12" fill="url(#g4)"/>
<path d="M1377.8 17.8h12.4l-6.2 6.6z" fill="#fff"/>
<path d="M1413.0 38.5V6a5 5 0 0 1 5-5H1585.7a5 5 0 0 1 5 5V38.5z" fill="url(#g3)"/>
<path d="M1413.0 38.5V6a5 5 0 0 1 5-5h2V38.5z" fill="#e6e000"/>
<text x="1423.2" y="15.3" font-size="13.5" fill="#f0f0f0" textLength="131.0" lengthAdjust="spacingAndGlyphs">Direct Display Control</text>
<circle cx="1571.0" cy="19.2" r="12" fill="url(#g4)"/>
<path d="M1564.8 17.8h12.4l-6.2 6.6z" fill="#fff"/>
<rect x="1595.6" y="1.4" width="41.2" height="34.2" rx="5" fill="url(#g5)" stroke="#d4d4d4" stroke-width="1.3"/>
<rect x="1638.4" y="1.4" width="41.2" height="34.2" rx="5" fill="url(#g5)" stroke="#d4d4d4" stroke-width="1.3"/>
<circle cx="1616" cy="18.4" r="12" fill="url(#g6)"/>
<circle cx="1655" cy="18.4" r="12" fill="url(#g6)"/>
<path d="M1624.11 17.17 L1624.11 19.63 L1622.05 19.75 L1621.24 21.72 L1622.60 23.27 L1620.87 25.00 L1619.32 23.64 L1617.35 24.45 L1617.23 26.51 L1614.77 26.51 L1614.65 24.45 L1612.68 23.64 L1611.13 25.00 L1609.40 23.27 L1610.76 21.72 L1609.95 19.75 L1607.89 19.63 L1607.89 17.17 L1609.95 17.05 L1610.76 15.08 L1609.40 13.53 L1611.13 11.80 L1612.68 13.16 L1614.65 12.35 L1614.77 10.29 L1617.23 10.29 L1617.35 12.35 L1619.32 13.16 L1620.87 11.80 L1622.60 13.53 L1621.24 15.08 L1622.05 17.05 z M1620.2 18.4a4.2 4.2 0 1 0 -8.4 0a4.2 4.2 0 1 0 8.4 0z" fill="#e2e2e2" fill-rule="evenodd"/>
<path d="M1658.2 11.2v13.2l-7-6.6z" fill="#fff"/>
<text x="25.5" y="103.3" font-size="38.6" fill="#f2f2f2" textLength="326.0" lengthAdjust="spacingAndGlyphs">Saturation Sweeps</text>
<rect x="45.50" y="160.00" width="312.00" height="413.00" fill="#242424"/>
<text x="183.3" y="154.8" font-size="13.5" fill="#cfcfcf" text-anchor="middle" textLength="78.5" lengthAdjust="spacingAndGlyphs">DeltaE 2000</text>
<line x1="85.86" y1="160.00" x2="85.86" y2="573.00" stroke="#909090" stroke-width="1.1"/>
<line x1="127.52" y1="160.00" x2="127.52" y2="573.00" stroke="#909090" stroke-width="1.1"/>
<line x1="169.18" y1="160.00" x2="169.18" y2="573.00" stroke="#909090" stroke-width="1.1"/>
<line x1="210.84" y1="160.00" x2="210.84" y2="573.00" stroke="#909090" stroke-width="1.1"/>
<line x1="252.50" y1="160.00" x2="252.50" y2="573.00" stroke="#909090" stroke-width="1.1"/>
<line x1="294.16" y1="160.00" x2="294.16" y2="573.00" stroke="#909090" stroke-width="1.1"/>
<line x1="335.82" y1="160.00" x2="335.82" y2="573.00" stroke="#909090" stroke-width="1.1"/>
<rect x="45.30" y="166.95" width="135.55" height="6.00" fill="url(#g7)" stroke="#000" stroke-width="1.5"/>
<rect x="45.30" y="175.15" width="76.45" height="6.00" fill="url(#g8)" stroke="#000" stroke-width="1.5"/>
<rect x="45.30" y="183.35" width="16.70" height="6.00" fill="url(#g9)" stroke="#000" stroke-width="1.5"/>
<rect x="45.30" y="191.55" width="158.55" height="6.00" fill="url(#g10)" stroke="#000" stroke-width="1.5"/>
<rect x="45.30" y="199.75" width="120.20" height="6.00" fill="url(#g11)" stroke="#000" stroke-width="1.5"/>
<rect x="45.30" y="207.95" width="46.45" height="6.00" fill="url(#g12)" stroke="#000" stroke-width="1.5"/>
<rect x="45.30" y="235.95" width="121.35" height="6.00" fill="url(#g13)" stroke="#000" stroke-width="1.5"/>
<rect x="45.30" y="244.15" width="64.25" height="6.00" fill="url(#g14)" stroke="#000" stroke-width="1.5"/>
<rect x="45.30" y="252.35" width="54.55" height="6.00" fill="url(#g15)" stroke="#000" stroke-width="1.5"/>
<rect x="45.30" y="260.55" width="148.45" height="6.00" fill="url(#g16)" stroke="#000" stroke-width="1.5"/>
<rect x="45.30" y="268.75" width="124.35" height="6.00" fill="url(#g17)" stroke="#000" stroke-width="1.5"/>
<rect x="45.30" y="276.95" width="57.55" height="6.00" fill="url(#g18)" stroke="#000" stroke-width="1.5"/>
<rect x="45.30" y="304.95" width="101.35" height="6.00" fill="url(#g19)" stroke="#000" stroke-width="1.5"/>
<rect x="45.30" y="313.15" width="60.35" height="6.00" fill="url(#g20)" stroke="#000" stroke-width="1.5"/>
<rect x="45.30" y="321.35" width="69.45" height="6.00" fill="url(#g21)" stroke="#000" stroke-width="1.5"/>
<rect x="45.30" y="329.55" width="139.55" height="6.00" fill="url(#g22)" stroke="#000" stroke-width="1.5"/>
<rect x="45.30" y="337.75" width="132.65" height="6.00" fill="url(#g23)" stroke="#000" stroke-width="1.5"/>
<rect x="45.30" y="345.95" width="69.45" height="6.00" fill="url(#g24)" stroke="#000" stroke-width="1.5"/>
<rect x="45.30" y="373.65" width="110.75" height="6.00" fill="url(#g25)" stroke="#000" stroke-width="1.5"/>
<rect x="45.30" y="381.85" width="64.65" height="6.00" fill="url(#g26)" stroke="#000" stroke-width="1.5"/>
<rect x="45.30" y="390.05" width="87.65" height="6.00" fill="url(#g27)" stroke="#000" stroke-width="1.5"/>
<rect x="45.30" y="398.25" width="131.65" height="6.00" fill="url(#g28)" stroke="#000" stroke-width="1.5"/>
<rect x="45.30" y="406.45" width="136.75" height="6.00" fill="url(#g29)" stroke="#000" stroke-width="1.5"/>
<rect x="45.30" y="414.65" width="95.55" height="6.00" fill="url(#g30)" stroke="#000" stroke-width="1.5"/>
<rect x="45.30" y="442.95" width="137.25" height="6.00" fill="url(#g31)" stroke="#000" stroke-width="1.5"/>
<rect x="45.30" y="451.15" width="87.15" height="6.00" fill="url(#g32)" stroke="#000" stroke-width="1.5"/>
<rect x="45.30" y="459.35" width="110.25" height="6.00" fill="url(#g33)" stroke="#000" stroke-width="1.5"/>
<rect x="45.30" y="467.55" width="125.25" height="6.00" fill="url(#g34)" stroke="#000" stroke-width="1.5"/>
<rect x="45.30" y="475.75" width="140.15" height="6.00" fill="url(#g35)" stroke="#000" stroke-width="1.5"/>
<rect x="45.30" y="483.95" width="123.95" height="6.00" fill="url(#g36)" stroke="#000" stroke-width="1.5"/>
<rect x="45.30" y="560.55" width="165.25" height="6.00" fill="url(#g37)" stroke="#000" stroke-width="1.5"/>
<line x1="85.86" y1="160.00" x2="85.86" y2="573.00" stroke="#bbb" stroke-width="1" opacity=".12"/>
<line x1="127.52" y1="160.00" x2="127.52" y2="573.00" stroke="#bbb" stroke-width="1" opacity=".12"/>
<line x1="169.18" y1="160.00" x2="169.18" y2="573.00" stroke="#bbb" stroke-width="1" opacity=".12"/>
<line x1="210.84" y1="160.00" x2="210.84" y2="573.00" stroke="#bbb" stroke-width="1" opacity=".12"/>
<line x1="252.50" y1="160.00" x2="252.50" y2="573.00" stroke="#bbb" stroke-width="1" opacity=".12"/>
<line x1="294.16" y1="160.00" x2="294.16" y2="573.00" stroke="#bbb" stroke-width="1" opacity=".12"/>
<line x1="335.82" y1="160.00" x2="335.82" y2="573.00" stroke="#bbb" stroke-width="1" opacity=".12"/>
<path d="M45.5 160.0H357.5V573.0H45.5V159.4" fill="none" stroke="#a8a8a8" stroke-width="1.2"/>
<line x1="39.90" y1="160.00" x2="45.50" y2="160.00" stroke="#d0d0d0" stroke-width="1.3"/>
<line x1="39.90" y1="229.00" x2="45.50" y2="229.00" stroke="#d0d0d0" stroke-width="1.3"/>
<line x1="39.90" y1="298.00" x2="45.50" y2="298.00" stroke="#d0d0d0" stroke-width="1.3"/>
<line x1="39.90" y1="366.70" x2="45.50" y2="366.70" stroke="#d0d0d0" stroke-width="1.3"/>
<line x1="39.90" y1="436.00" x2="45.50" y2="436.00" stroke="#d0d0d0" stroke-width="1.3"/>
<line x1="39.90" y1="504.50" x2="45.50" y2="504.50" stroke="#d0d0d0" stroke-width="1.3"/>
<line x1="39.90" y1="573.00" x2="45.50" y2="573.00" stroke="#d0d0d0" stroke-width="1.3"/>
<line x1="44.20" y1="573.00" x2="44.20" y2="577.50" stroke="#c0c0c0" stroke-width="1.2"/>
<text x="43.5" y="595.3" font-size="14.2" fill="#cfcfcf" text-anchor="middle">0</text>
<line x1="85.86" y1="573.00" x2="85.86" y2="577.50" stroke="#c0c0c0" stroke-width="1.2"/>
<text x="85.2" y="595.3" font-size="14.2" fill="#cfcfcf" text-anchor="middle">2</text>
<line x1="127.52" y1="573.00" x2="127.52" y2="577.50" stroke="#c0c0c0" stroke-width="1.2"/>
<text x="126.8" y="595.3" font-size="14.2" fill="#cfcfcf" text-anchor="middle">4</text>
<line x1="169.18" y1="573.00" x2="169.18" y2="577.50" stroke="#c0c0c0" stroke-width="1.2"/>
<text x="168.5" y="595.3" font-size="14.2" fill="#cfcfcf" text-anchor="middle">6</text>
<line x1="210.84" y1="573.00" x2="210.84" y2="577.50" stroke="#c0c0c0" stroke-width="1.2"/>
<text x="210.1" y="595.3" font-size="14.2" fill="#cfcfcf" text-anchor="middle">8</text>
<line x1="252.50" y1="573.00" x2="252.50" y2="577.50" stroke="#c0c0c0" stroke-width="1.2"/>
<text x="251.8" y="595.3" font-size="14.2" fill="#cfcfcf" text-anchor="middle">10</text>
<line x1="294.16" y1="573.00" x2="294.16" y2="577.50" stroke="#c0c0c0" stroke-width="1.2"/>
<text x="293.5" y="595.3" font-size="14.2" fill="#cfcfcf" text-anchor="middle">12</text>
<line x1="335.82" y1="573.00" x2="335.82" y2="577.50" stroke="#c0c0c0" stroke-width="1.2"/>
<text x="335.1" y="595.3" font-size="14.2" fill="#cfcfcf" text-anchor="middle">14</text>
<text x="43.5" y="201.3" font-size="14.2" fill="#cfcfcf" text-anchor="end">100%</text>
<text x="43.5" y="270.3" font-size="14.2" fill="#cfcfcf" text-anchor="end">80%</text>
<text x="43.5" y="339.3" font-size="14.2" fill="#cfcfcf" text-anchor="end">60%</text>
<text x="43.5" y="408.0" font-size="14.2" fill="#cfcfcf" text-anchor="end">40%</text>
<text x="43.5" y="477.3" font-size="14.2" fill="#cfcfcf" text-anchor="end">20%</text>
<text x="43.5" y="544.5" font-size="14.2" fill="#cfcfcf" text-anchor="end">100</text>
<rect x="410.00" y="92.50" width="144.70" height="317.50" fill="#242424"/>
<line x1="410.00" y1="145.50" x2="554.70" y2="145.50" stroke="#9a9a9a" stroke-width="1.1"/>
<line x1="410.00" y1="198.50" x2="554.70" y2="198.50" stroke="#9a9a9a" stroke-width="1.1"/>
<line x1="410.00" y1="251.50" x2="554.70" y2="251.50" stroke="#9a9a9a" stroke-width="1.1"/>
<line x1="410.00" y1="304.50" x2="554.70" y2="304.50" stroke="#9a9a9a" stroke-width="1.1"/>
<line x1="410.00" y1="357.50" x2="554.70" y2="357.50" stroke="#9a9a9a" stroke-width="1.1"/>
<rect x="424.70" y="251.50" width="114.50" height="10.90" fill="url(#g38)" stroke="#000" stroke-width="1.2"/>
<path d="M410.0 92.5H554.7V410.0H410.0V91.9" fill="none" stroke="#a8a8a8" stroke-width="1.2"/>
<line x1="404.60" y1="92.50" x2="410.00" y2="92.50" stroke="#d4d4d4" stroke-width="1.3"/>
<text x="404.5" y="97.8" font-size="14.2" fill="#cfcfcf" text-anchor="end">15</text>
<line x1="404.60" y1="145.50" x2="410.00" y2="145.50" stroke="#d4d4d4" stroke-width="1.3"/>
<text x="404.5" y="150.8" font-size="14.2" fill="#cfcfcf" text-anchor="end">10</text>
<line x1="404.60" y1="198.50" x2="410.00" y2="198.50" stroke="#d4d4d4" stroke-width="1.3"/>
<text x="404.5" y="203.8" font-size="14.2" fill="#cfcfcf" text-anchor="end">5</text>
<line x1="404.60" y1="251.50" x2="410.00" y2="251.50" stroke="#d4d4d4" stroke-width="1.3"/>
<text x="404.5" y="256.8" font-size="14.2" fill="#cfcfcf" text-anchor="end">0</text>
<line x1="404.60" y1="304.50" x2="410.00" y2="304.50" stroke="#d4d4d4" stroke-width="1.3"/>
<text x="404.5" y="309.8" font-size="14.2" fill="#cfcfcf" text-anchor="end">-5</text>
<line x1="404.60" y1="357.50" x2="410.00" y2="357.50" stroke="#d4d4d4" stroke-width="1.3"/>
<text x="404.5" y="362.8" font-size="14.2" fill="#cfcfcf" text-anchor="end">-10</text>
<line x1="404.60" y1="410.50" x2="410.00" y2="410.50" stroke="#d4d4d4" stroke-width="1.3"/>
<text x="404.5" y="415.8" font-size="14.2" fill="#cfcfcf" text-anchor="end">-15</text>
<line x1="410.00" y1="410.00" x2="410.00" y2="415.00" stroke="#c8c8c8" stroke-width="1.2"/>
<line x1="554.70" y1="410.00" x2="554.70" y2="415.00" stroke="#c8c8c8" stroke-width="1.2"/>
<text x="468.6" y="87.3" font-size="13.5" fill="#cfcfcf" text-anchor="middle" textLength="45.5" lengthAdjust="spacingAndGlyphs">Delta L</text>
<text x="481.7" y="425.5" font-size="14.2" fill="#cfcfcf" text-anchor="middle">100%</text>
<rect x="607.00" y="92.50" width="144.50" height="317.50" fill="#242424"/>
<line x1="607.00" y1="145.50" x2="751.50" y2="145.50" stroke="#9a9a9a" stroke-width="1.1"/>
<line x1="607.00" y1="198.50" x2="751.50" y2="198.50" stroke="#9a9a9a" stroke-width="1.1"/>
<line x1="607.00" y1="251.50" x2="751.50" y2="251.50" stroke="#9a9a9a" stroke-width="1.1"/>
<line x1="607.00" y1="304.50" x2="751.50" y2="304.50" stroke="#9a9a9a" stroke-width="1.1"/>
<line x1="607.00" y1="357.50" x2="751.50" y2="357.50" stroke="#9a9a9a" stroke-width="1.1"/>
<rect x="622.20" y="251.50" width="114.20" height="45.70" fill="url(#g39)" stroke="#000" stroke-width="1.2"/>
<path d="M607.0 92.5H751.5V410.0H607.0V91.9" fill="none" stroke="#a8a8a8" stroke-width="1.2"/>
<line x1="601.60" y1="92.50" x2="607.00" y2="92.50" stroke="#d4d4d4" stroke-width="1.3"/>
<text x="601.5" y="97.8" font-size="14.2" fill="#cfcfcf" text-anchor="end">15</text>
<line x1="601.60" y1="145.50" x2="607.00" y2="145.50" stroke="#d4d4d4" stroke-width="1.3"/>
<text x="601.5" y="150.8" font-size="14.2" fill="#cfcfcf" text-anchor="end">10</text>
<line x1="601.60" y1="198.50" x2="607.00" y2="198.50" stroke="#d4d4d4" stroke-width="1.3"/>
<text x="601.5" y="203.8" font-size="14.2" fill="#cfcfcf" text-anchor="end">5</text>
<line x1="601.60" y1="251.50" x2="607.00" y2="251.50" stroke="#d4d4d4" stroke-width="1.3"/>
<text x="601.5" y="256.8" font-size="14.2" fill="#cfcfcf" text-anchor="end">0</text>
<line x1="601.60" y1="304.50" x2="607.00" y2="304.50" stroke="#d4d4d4" stroke-width="1.3"/>
<text x="601.5" y="309.8" font-size="14.2" fill="#cfcfcf" text-anchor="end">-5</text>
<line x1="601.60" y1="357.50" x2="607.00" y2="357.50" stroke="#d4d4d4" stroke-width="1.3"/>
<text x="601.5" y="362.8" font-size="14.2" fill="#cfcfcf" text-anchor="end">-10</text>
<line x1="601.60" y1="410.50" x2="607.00" y2="410.50" stroke="#d4d4d4" stroke-width="1.3"/>
<text x="601.5" y="415.8" font-size="14.2" fill="#cfcfcf" text-anchor="end">-15</text>
<line x1="607.00" y1="410.00" x2="607.00" y2="415.00" stroke="#c8c8c8" stroke-width="1.2"/>
<line x1="751.50" y1="410.00" x2="751.50" y2="415.00" stroke="#c8c8c8" stroke-width="1.2"/>
<text x="666.0" y="87.3" font-size="13.5" fill="#cfcfcf" text-anchor="middle" textLength="47.5" lengthAdjust="spacingAndGlyphs">Delta C</text>
<text x="679.0" y="425.5" font-size="14.2" fill="#cfcfcf" text-anchor="middle">100%</text>
<rect x="804.50" y="92.50" width="144.80" height="317.50" fill="#242424"/>
<line x1="804.50" y1="145.50" x2="949.30" y2="145.50" stroke="#9a9a9a" stroke-width="1.1"/>
<line x1="804.50" y1="198.50" x2="949.30" y2="198.50" stroke="#9a9a9a" stroke-width="1.1"/>
<line x1="804.50" y1="251.50" x2="949.30" y2="251.50" stroke="#9a9a9a" stroke-width="1.1"/>
<line x1="804.50" y1="304.50" x2="949.30" y2="304.50" stroke="#9a9a9a" stroke-width="1.1"/>
<line x1="804.50" y1="357.50" x2="949.30" y2="357.50" stroke="#9a9a9a" stroke-width="1.1"/>
<rect x="819.80" y="214.70" width="113.30" height="36.60" fill="url(#g40)" stroke="#000" stroke-width="1.2"/>
<path d="M804.5 92.5H949.3V410.0H804.5V91.9" fill="none" stroke="#a8a8a8" stroke-width="1.2"/>
<line x1="799.10" y1="92.50" x2="804.50" y2="92.50" stroke="#d4d4d4" stroke-width="1.3"/>
<text x="799.0" y="97.8" font-size="14.2" fill="#cfcfcf" text-anchor="end">15</text>
<line x1="799.10" y1="145.50" x2="804.50" y2="145.50" stroke="#d4d4d4" stroke-width="1.3"/>
<text x="799.0" y="150.8" font-size="14.2" fill="#cfcfcf" text-anchor="end">10</text>
<line x1="799.10" y1="198.50" x2="804.50" y2="198.50" stroke="#d4d4d4" stroke-width="1.3"/>
<text x="799.0" y="203.8" font-size="14.2" fill="#cfcfcf" text-anchor="end">5</text>
<line x1="799.10" y1="251.50" x2="804.50" y2="251.50" stroke="#d4d4d4" stroke-width="1.3"/>
<text x="799.0" y="256.8" font-size="14.2" fill="#cfcfcf" text-anchor="end">0</text>
<line x1="799.10" y1="304.50" x2="804.50" y2="304.50" stroke="#d4d4d4" stroke-width="1.3"/>
<text x="799.0" y="309.8" font-size="14.2" fill="#cfcfcf" text-anchor="end">-5</text>
<line x1="799.10" y1="357.50" x2="804.50" y2="357.50" stroke="#d4d4d4" stroke-width="1.3"/>
<text x="799.0" y="362.8" font-size="14.2" fill="#cfcfcf" text-anchor="end">-10</text>
<line x1="799.10" y1="410.50" x2="804.50" y2="410.50" stroke="#d4d4d4" stroke-width="1.3"/>
<text x="799.0" y="415.8" font-size="14.2" fill="#cfcfcf" text-anchor="end">-15</text>
<line x1="804.50" y1="410.00" x2="804.50" y2="415.00" stroke="#c8c8c8" stroke-width="1.2"/>
<line x1="949.30" y1="410.00" x2="949.30" y2="415.00" stroke="#c8c8c8" stroke-width="1.2"/>
<text x="863.3" y="87.3" font-size="13.5" fill="#cfcfcf" text-anchor="middle" textLength="48.5" lengthAdjust="spacingAndGlyphs">Delta H</text>
<text x="876.5" y="425.5" font-size="14.2" fill="#cfcfcf" text-anchor="middle">100%</text>
<rect x="376.60" y="440.80" width="592.80" height="164.00" fill="#000"/>
<rect x="377" y="441.2" width="592" height="163.2" fill="none" stroke="#1c1c1c" stroke-width="1"/>
<rect x="397.10" y="449.00" width="99.60" height="66.00" fill="#b5bfb1"/>
<rect x="397.10" y="514.80" width="99.60" height="66.20" fill="#c0c0a4"/>
<rect x="397.70" y="449.6" width="98.4" height="130.8" fill="none" stroke="#f2f2ea" stroke-width="1.3"/>
<text x="447.3" y="595.5" font-size="13.5" fill="#fff" text-anchor="middle" textLength="24.5" lengthAdjust="spacingAndGlyphs" stroke="#fff" stroke-width=".25">20%</text>
<rect x="513.00" y="449.00" width="99.60" height="66.00" fill="#b8c098"/>
<rect x="513.00" y="514.80" width="99.60" height="66.20" fill="#c2c088"/>
<rect x="513.60" y="449.6" width="98.4" height="130.8" fill="none" stroke="#f2f2ea" stroke-width="1.3"/>
<text x="563.2" y="595.5" font-size="13.5" fill="#fff" text-anchor="middle" textLength="24.5" lengthAdjust="spacingAndGlyphs" stroke="#fff" stroke-width=".25">40%</text>
<rect x="628.80" y="449.00" width="99.60" height="66.00" fill="#b8c07a"/>
<rect x="628.80" y="514.80" width="99.60" height="66.20" fill="#c4c068"/>
<rect x="629.40" y="449.6" width="98.4" height="130.8" fill="none" stroke="#f2f2ea" stroke-width="1.3"/>
<text x="679.0" y="595.5" font-size="13.5" fill="#fff" text-anchor="middle" textLength="24.5" lengthAdjust="spacingAndGlyphs" stroke="#fff" stroke-width=".25">60%</text>
<rect x="744.20" y="449.00" width="99.60" height="66.00" fill="#b8bc5a"/>
<rect x="744.20" y="514.80" width="99.60" height="66.20" fill="#c2c04c"/>
<rect x="744.80" y="449.6" width="98.4" height="130.8" fill="none" stroke="#f2f2ea" stroke-width="1.3"/>
<text x="794.4" y="595.5" font-size="13.5" fill="#fff" text-anchor="middle" textLength="24.5" lengthAdjust="spacingAndGlyphs" stroke="#fff" stroke-width=".25">80%</text>
<rect x="860.10" y="449.00" width="99.60" height="66.00" fill="#b8b824"/>
<rect x="860.10" y="514.80" width="99.60" height="66.20" fill="#c4c000"/>
<rect x="860.70" y="449.6" width="98.4" height="130.8" fill="none" stroke="#f2f2ea" stroke-width="1.3"/>
<text x="910.3" y="595.5" font-size="13.5" fill="#fff" text-anchor="middle" textLength="31.0" lengthAdjust="spacingAndGlyphs" stroke="#fff" stroke-width=".25">100%</text>
<text transform="translate(390 495.3) rotate(-90)" font-size="13" fill="#fff" stroke="#fff" stroke-width=".3" textLength="35" lengthAdjust="spacingAndGlyphs">Actual</text>
<text transform="translate(390 569.6) rotate(-90)" font-size="13" fill="#fff" stroke="#fff" stroke-width=".3" textLength="35" lengthAdjust="spacingAndGlyphs">Target</text>
<text x="52.3" y="649.6" font-size="29.2" fill="#f0f0f0" textLength="231.5" lengthAdjust="spacingAndGlyphs">Avg dE2000: 5,07</text>
<text x="69.4" y="690.7" font-size="29.2" fill="#f0f0f0" textLength="199.0" lengthAdjust="spacingAndGlyphs">Max dE2000: 8</text>
<text x="16.0" y="738.0" font-size="29.6" fill="#f0f0f0" textLength="219.0" lengthAdjust="spacingAndGlyphs">Current Reading</text>
<text x="16.3" y="773.9" font-size="25.2" fill="#f0f0f0" textLength="102.7" lengthAdjust="spacingAndGlyphs">x: 0,4084</text>
<text x="172.6" y="773.9" font-size="25.2" fill="#f0f0f0" textLength="102.9" lengthAdjust="spacingAndGlyphs">y: 0,5015</text>
<text x="16.3" y="814.5" font-size="25.2" fill="#f0f0f0" textLength="97.2" lengthAdjust="spacingAndGlyphs">fL: 47,46</text>
<text x="16.3" y="848.5" font-size="25.2" fill="#f0f0f0" textLength="159.0" lengthAdjust="spacingAndGlyphs">cd/m²: 162,61</text>
<rect x="358.70" y="657.50" width="249.50" height="179.80" fill="#242424"/>
<line x1="358.70" y1="703.00" x2="608.20" y2="703.00" stroke="#9a9a9a" stroke-width="1.1"/>
<line x1="358.70" y1="748.20" x2="608.20" y2="748.20" stroke="#9a9a9a" stroke-width="1.1"/>
<line x1="358.70" y1="792.40" x2="608.20" y2="792.40" stroke="#9a9a9a" stroke-width="1.1"/>
<rect x="383.60" y="762.10" width="64.80" height="75.20" fill="url(#g41)" stroke="#000" stroke-width="1.2"/>
<rect x="449.60" y="750.90" width="65.10" height="86.40" fill="url(#g42)" stroke="#000" stroke-width="1.2"/>
<rect x="515.90" y="692.40" width="65.50" height="144.90" fill="url(#g43)" stroke="#000" stroke-width="1.2"/>
<path d="M358.7 657.5H608.2V837.3H358.7V656.9" fill="none" stroke="#a8a8a8" stroke-width="1.2"/>
<line x1="353.30" y1="657.50" x2="358.70" y2="657.50" stroke="#d4d4d4" stroke-width="1.3"/>
<text x="353.2" y="662.8" font-size="14.2" fill="#cfcfcf" text-anchor="end">120</text>
<line x1="353.30" y1="703.00" x2="358.70" y2="703.00" stroke="#d4d4d4" stroke-width="1.3"/>
<text x="353.2" y="708.3" font-size="14.2" fill="#cfcfcf" text-anchor="end">110</text>
<line x1="353.30" y1="748.20" x2="358.70" y2="748.20" stroke="#d4d4d4" stroke-width="1.3"/>
<text x="353.2" y="753.5" font-size="14.2" fill="#cfcfcf" text-anchor="end">100</text>
<line x1="353.30" y1="792.40" x2="358.70" y2="792.40" stroke="#d4d4d4" stroke-width="1.3"/>
<text x="353.2" y="797.7" font-size="14.2" fill="#cfcfcf" text-anchor="end">90</text>
<line x1="353.30" y1="837.30" x2="358.70" y2="837.30" stroke="#d4d4d4" stroke-width="1.3"/>
<text x="353.2" y="842.6" font-size="14.2" fill="#cfcfcf" text-anchor="end">80</text>
<line x1="358.70" y1="837.30" x2="358.70" y2="842.30" stroke="#c8c8c8" stroke-width="1.2"/>
<line x1="608.20" y1="837.30" x2="608.20" y2="842.30" stroke="#c8c8c8" stroke-width="1.2"/>
<text x="468.3" y="651.8" font-size="13.5" fill="#cfcfcf" text-anchor="middle" textLength="82.5" lengthAdjust="spacingAndGlyphs">RGB Balance</text>
<text x="484.0" y="853.8" font-size="14.2" fill="#cfcfcf" text-anchor="middle">100%</text>
<rect x="628.60" y="624.60" width="730.60" height="231.20" fill="#0a0a0a"/>
<rect x="630.20" y="626.00" width="726.80" height="31.60" fill="url(#g44)"/>
<rect x="630.20" y="657.50" width="726.80" height="28.35" fill="#404040"/>
<text x="648.3" y="678.2" font-size="17.5" fill="#f3f3ee" font-weight="bold" textLength="86.0" lengthAdjust="spacingAndGlyphs">x: CIE31</text>
<text x="831.0" y="678.2" font-size="18.2" fill="#f3f3ee" textLength="69.0" lengthAdjust="spacingAndGlyphs">0,3156</text>
<text x="937.4" y="678.2" font-size="18.2" fill="#f3f3ee" textLength="69.0" lengthAdjust="spacingAndGlyphs">0,3375</text>
<text x="1043.8" y="678.2" font-size="18.2" fill="#f3f3ee" textLength="69.0" lengthAdjust="spacingAndGlyphs">0,3610</text>
<text x="1150.2" y="678.2" font-size="18.2" fill="#f3f3ee" textLength="69.0" lengthAdjust="spacingAndGlyphs">0,3832</text>
<text x="1256.6" y="678.2" font-size="18.2" fill="#f3f3ee" textLength="69.0" lengthAdjust="spacingAndGlyphs">0,4084</text>
<rect x="630.20" y="685.85" width="726.80" height="28.35" fill="#808080"/>
<text x="648.3" y="706.6" font-size="17.5" fill="#f3f3ee" font-weight="bold" textLength="86.0" lengthAdjust="spacingAndGlyphs">y: CIE31</text>
<text x="831.0" y="706.6" font-size="18.2" fill="#f3f3ee" textLength="69.0" lengthAdjust="spacingAndGlyphs">0,3480</text>
<text x="937.4" y="706.6" font-size="18.2" fill="#f3f3ee" textLength="69.0" lengthAdjust="spacingAndGlyphs">0,3852</text>
<text x="1043.8" y="706.6" font-size="18.2" fill="#f3f3ee" textLength="69.0" lengthAdjust="spacingAndGlyphs">0,4235</text>
<text x="1150.2" y="706.6" font-size="18.2" fill="#f3f3ee" textLength="69.0" lengthAdjust="spacingAndGlyphs">0,4612</text>
<text x="1256.6" y="706.6" font-size="18.2" fill="#f3f3ee" textLength="69.0" lengthAdjust="spacingAndGlyphs">0,5015</text>
<rect x="630.20" y="714.20" width="726.80" height="28.35" fill="#404040"/>
<text x="648.3" y="734.9" font-size="17.5" fill="#f3f3ee" font-weight="bold" textLength="14.0" lengthAdjust="spacingAndGlyphs">Y</text>
<text x="831.0" y="734.9" font-size="18.2" fill="#f3f3ee" textLength="94.0" lengthAdjust="spacingAndGlyphs">175,7659</text>
<text x="937.4" y="734.9" font-size="18.2" fill="#f3f3ee" textLength="94.0" lengthAdjust="spacingAndGlyphs">172,0937</text>
<text x="1043.8" y="734.9" font-size="18.2" fill="#f3f3ee" textLength="94.0" lengthAdjust="spacingAndGlyphs">168,0871</text>
<text x="1150.2" y="734.9" font-size="18.2" fill="#f3f3ee" textLength="94.0" lengthAdjust="spacingAndGlyphs">165,3576</text>
<text x="1256.6" y="734.9" font-size="18.2" fill="#f3f3ee" textLength="94.0" lengthAdjust="spacingAndGlyphs">162,6118</text>
<rect x="630.20" y="742.55" width="726.80" height="28.35" fill="#808080"/>
<text x="648.3" y="763.2" font-size="17.5" fill="#f3f3ee" font-weight="bold" textLength="157.0" lengthAdjust="spacingAndGlyphs">Target x:CIE31</text>
<text x="831.0" y="763.2" font-size="18.2" fill="#f3f3ee" textLength="69.0" lengthAdjust="spacingAndGlyphs">0,3344</text>
<text x="937.4" y="763.2" font-size="18.2" fill="#f3f3ee" textLength="69.0" lengthAdjust="spacingAndGlyphs">0,3564</text>
<text x="1043.8" y="763.2" font-size="18.2" fill="#f3f3ee" textLength="69.0" lengthAdjust="spacingAndGlyphs">0,3773</text>
<text x="1150.2" y="763.2" font-size="18.2" fill="#f3f3ee" textLength="69.0" lengthAdjust="spacingAndGlyphs">0,3969</text>
<text x="1256.6" y="763.2" font-size="18.2" fill="#f3f3ee" textLength="69.0" lengthAdjust="spacingAndGlyphs">0,4193</text>
<rect x="630.20" y="770.90" width="726.80" height="28.35" fill="#404040"/>
<text x="648.3" y="791.6" font-size="17.5" fill="#f3f3ee" font-weight="bold" textLength="157.0" lengthAdjust="spacingAndGlyphs">Target y:CIE31</text>
<text x="831.0" y="791.6" font-size="18.2" fill="#f3f3ee" textLength="69.0" lengthAdjust="spacingAndGlyphs">0,3648</text>
<text x="937.4" y="791.6" font-size="18.2" fill="#f3f3ee" textLength="69.0" lengthAdjust="spacingAndGlyphs">0,4013</text>
<text x="1043.8" y="791.6" font-size="18.2" fill="#f3f3ee" textLength="69.0" lengthAdjust="spacingAndGlyphs">0,4358</text>
<text x="1150.2" y="791.6" font-size="18.2" fill="#f3f3ee" textLength="69.0" lengthAdjust="spacingAndGlyphs">0,4682</text>
<text x="1256.6" y="791.6" font-size="18.2" fill="#f3f3ee" textLength="69.0" lengthAdjust="spacingAndGlyphs">0,5053</text>
<rect x="630.20" y="799.25" width="726.80" height="28.35" fill="#808080"/>
<text x="648.3" y="820.0" font-size="17.5" fill="#f3f3ee" font-weight="bold" textLength="91.0" lengthAdjust="spacingAndGlyphs">Target Y</text>
<text x="831.0" y="820.0" font-size="18.2" fill="#f3f3ee" textLength="94.0" lengthAdjust="spacingAndGlyphs">177,6482</text>
<text x="937.4" y="820.0" font-size="18.2" fill="#f3f3ee" textLength="94.0" lengthAdjust="spacingAndGlyphs">174,5300</text>
<text x="1043.8" y="820.0" font-size="18.2" fill="#f3f3ee" textLength="94.0" lengthAdjust="spacingAndGlyphs">172,1341</text>
<text x="1150.2" y="820.0" font-size="18.2" fill="#f3f3ee" textLength="94.0" lengthAdjust="spacingAndGlyphs">170,2537</text>
<text x="1256.6" y="820.0" font-size="18.2" fill="#f3f3ee" textLength="94.0" lengthAdjust="spacingAndGlyphs">168,4359</text>
<rect x="630.20" y="827.60" width="726.80" height="27.95" fill="#404040"/>
<text x="648.3" y="848.3" font-size="17.5" fill="#f3f3ee" font-weight="bold" textLength="89.5" lengthAdjust="spacingAndGlyphs">ΔE 2000</text>
<text x="831.0" y="848.3" font-size="18.2" fill="#f3f3ee" textLength="69.0" lengthAdjust="spacingAndGlyphs">6,0689</text>
<text x="937.4" y="848.3" font-size="18.2" fill="#f3f3ee" textLength="69.0" lengthAdjust="spacingAndGlyphs">4,6684</text>
<text x="1043.8" y="848.3" font-size="18.2" fill="#f3f3ee" textLength="69.0" lengthAdjust="spacingAndGlyphs">3,4623</text>
<text x="1150.2" y="848.3" font-size="18.2" fill="#f3f3ee" textLength="69.0" lengthAdjust="spacingAndGlyphs">2,8206</text>
<text x="1256.6" y="848.3" font-size="18.2" fill="#f3f3ee" textLength="69.0" lengthAdjust="spacingAndGlyphs">2,3501</text>
<text x="878.2" y="648.2" font-size="16.2" fill="#f3f3ee" text-anchor="middle" textLength="40.0" lengthAdjust="spacingAndGlyphs" stroke="#f3f3ee" stroke-width=".45">20%</text>
<text x="984.6" y="648.2" font-size="16.2" fill="#f3f3ee" text-anchor="middle" textLength="40.0" lengthAdjust="spacingAndGlyphs" stroke="#f3f3ee" stroke-width=".45">40%</text>
<text x="1091.0" y="648.2" font-size="16.2" fill="#f3f3ee" text-anchor="middle" textLength="40.0" lengthAdjust="spacingAndGlyphs" stroke="#f3f3ee" stroke-width=".45">60%</text>
<text x="1197.4" y="648.2" font-size="16.2" fill="#f3f3ee" text-anchor="middle" textLength="40.0" lengthAdjust="spacingAndGlyphs" stroke="#f3f3ee" stroke-width=".45">80%</text>
<text x="1303.8" y="648.2" font-size="16.2" fill="#f3f3ee" text-anchor="middle" textLength="51.0" lengthAdjust="spacingAndGlyphs" stroke="#f3f3ee" stroke-width=".45">100%</text>
<rect x="1441" y="430.2" width="212" height="144.3" fill="none" stroke="#9c9c9c" stroke-width="1.6"/>
<path d="M1019.5 91H1659V583H1019.5V90.4" fill="none" stroke="#a8a8a8" stroke-width="1.2"/>
<line x1="1014.20" y1="583.30" x2="1019.50" y2="583.30" stroke="#d4d4d4" stroke-width="1.3"/>
<text x="1013.5" y="588.7" font-size="14.2" fill="#cfcfcf" text-anchor="end">0</text>
<line x1="1020.00" y1="583.00" x2="1020.00" y2="588.00" stroke="#c8c8c8" stroke-width="1.3"/>
<text x="1020.0" y="603.6" font-size="14.2" fill="#cfcfcf" text-anchor="middle">0</text>
<line x1="1014.20" y1="542.30" x2="1019.50" y2="542.30" stroke="#d4d4d4" stroke-width="1.3"/>
<text x="1013.5" y="547.7" font-size="14.2" fill="#cfcfcf" text-anchor="end">0,05</text>
<line x1="1073.20" y1="583.00" x2="1073.20" y2="588.00" stroke="#c8c8c8" stroke-width="1.3"/>
<text x="1073.2" y="603.6" font-size="14.2" fill="#cfcfcf" text-anchor="middle">0,05</text>
<line x1="1014.20" y1="501.30" x2="1019.50" y2="501.30" stroke="#d4d4d4" stroke-width="1.3"/>
<text x="1013.5" y="506.7" font-size="14.2" fill="#cfcfcf" text-anchor="end">0,1</text>
<line x1="1126.40" y1="583.00" x2="1126.40" y2="588.00" stroke="#c8c8c8" stroke-width="1.3"/>
<text x="1126.4" y="603.6" font-size="14.2" fill="#cfcfcf" text-anchor="middle">0,1</text>
<line x1="1014.20" y1="460.30" x2="1019.50" y2="460.30" stroke="#d4d4d4" stroke-width="1.3"/>
<text x="1013.5" y="465.7" font-size="14.2" fill="#cfcfcf" text-anchor="end">0,15</text>
<line x1="1179.60" y1="583.00" x2="1179.60" y2="588.00" stroke="#c8c8c8" stroke-width="1.3"/>
<text x="1179.6" y="603.6" font-size="14.2" fill="#cfcfcf" text-anchor="middle">0,15</text>
<line x1="1014.20" y1="419.30" x2="1019.50" y2="419.30" stroke="#d4d4d4" stroke-width="1.3"/>
<text x="1013.5" y="424.7" font-size="14.2" fill="#cfcfcf" text-anchor="end">0,2</text>
<line x1="1232.80" y1="583.00" x2="1232.80" y2="588.00" stroke="#c8c8c8" stroke-width="1.3"/>
<text x="1232.8" y="603.6" font-size="14.2" fill="#cfcfcf" text-anchor="middle">0,2</text>
<line x1="1014.20" y1="378.30" x2="1019.50" y2="378.30" stroke="#d4d4d4" stroke-width="1.3"/>
<text x="1013.5" y="383.7" font-size="14.2" fill="#cfcfcf" text-anchor="end">0,25</text>
<line x1="1286.00" y1="583.00" x2="1286.00" y2="588.00" stroke="#c8c8c8" stroke-width="1.3"/>
<text x="1286.0" y="603.6" font-size="14.2" fill="#cfcfcf" text-anchor="middle">0,25</text>
<line x1="1014.20" y1="337.30" x2="1019.50" y2="337.30" stroke="#d4d4d4" stroke-width="1.3"/>
<text x="1013.5" y="342.7" font-size="14.2" fill="#cfcfcf" text-anchor="end">0,3</text>
<line x1="1339.20" y1="583.00" x2="1339.20" y2="588.00" stroke="#c8c8c8" stroke-width="1.3"/>
<text x="1339.2" y="603.6" font-size="14.2" fill="#cfcfcf" text-anchor="middle">0,3</text>
<line x1="1014.20" y1="296.30" x2="1019.50" y2="296.30" stroke="#d4d4d4" stroke-width="1.3"/>
<text x="1013.5" y="301.7" font-size="14.2" fill="#cfcfcf" text-anchor="end">0,35</text>
<line x1="1392.40" y1="583.00" x2="1392.40" y2="588.00" stroke="#c8c8c8" stroke-width="1.3"/>
<text x="1392.4" y="603.6" font-size="14.2" fill="#cfcfcf" text-anchor="middle">0,35</text>
<line x1="1014.20" y1="255.30" x2="1019.50" y2="255.30" stroke="#d4d4d4" stroke-width="1.3"/>
<text x="1013.5" y="260.7" font-size="14.2" fill="#cfcfcf" text-anchor="end">0,4</text>
<line x1="1445.60" y1="583.00" x2="1445.60" y2="588.00" stroke="#c8c8c8" stroke-width="1.3"/>
<text x="1445.6" y="603.6" font-size="14.2" fill="#cfcfcf" text-anchor="middle">0,4</text>
<line x1="1014.20" y1="214.30" x2="1019.50" y2="214.30" stroke="#d4d4d4" stroke-width="1.3"/>
<text x="1013.5" y="219.7" font-size="14.2" fill="#cfcfcf" text-anchor="end">0,45</text>
<line x1="1498.80" y1="583.00" x2="1498.80" y2="588.00" stroke="#c8c8c8" stroke-width="1.3"/>
<text x="1498.8" y="603.6" font-size="14.2" fill="#cfcfcf" text-anchor="middle">0,45</text>
<line x1="1014.20" y1="173.30" x2="1019.50" y2="173.30" stroke="#d4d4d4" stroke-width="1.3"/>
<text x="1013.5" y="178.7" font-size="14.2" fill="#cfcfcf" text-anchor="end">0,5</text>
<line x1="1552.00" y1="583.00" x2="1552.00" y2="588.00" stroke="#c8c8c8" stroke-width="1.3"/>
<text x="1552.0" y="603.6" font-size="14.2" fill="#cfcfcf" text-anchor="middle">0,5</text>
<line x1="1014.20" y1="132.30" x2="1019.50" y2="132.30" stroke="#d4d4d4" stroke-width="1.3"/>
<text x="1013.5" y="137.7" font-size="14.2" fill="#cfcfcf" text-anchor="end">0,55</text>
<line x1="1605.20" y1="583.00" x2="1605.20" y2="588.00" stroke="#c8c8c8" stroke-width="1.3"/>
<text x="1605.2" y="603.6" font-size="14.2" fill="#cfcfcf" text-anchor="middle">0,55</text>
<text x="1322.5" y="85.0" font-size="13.5" fill="#cfcfcf" text-anchor="middle" textLength="84.0" lengthAdjust="spacingAndGlyphs">CIE 1976 u'v'</text>
<g fill="none" stroke="#fff" stroke-opacity=".88" stroke-width="1.6"><rect x="1145.9" y="113.7" width="13.2" height="13.2"/><rect x="1157.5" y="125.4" width="13.2" height="13.2"/><rect x="1169.9" y="137.9" width="13.2" height="13.2"/><rect x="1184.9" y="152.5" width="13.2" height="13.2"/><rect x="1203.0" y="169.6" width="13.2" height="13.2"/><rect x="1230.0" y="121.6" width="13.2" height="13.2"/><rect x="1229.3" y="134.7" width="13.2" height="13.2"/><rect x="1228.7" y="146.1" width="13.2" height="13.2"/><rect x="1227.4" y="159.5" width="13.2" height="13.2"/><rect x="1225.9" y="174.1" width="13.2" height="13.2"/><rect x="1160.7" y="201.8" width="13.2" height="13.2"/><rect x="1172.2" y="199.9" width="13.2" height="13.2"/><rect x="1185.2" y="197.9" width="13.2" height="13.2"/><rect x="1198.2" y="195.1" width="13.2" height="13.2"/><rect x="1209.6" y="193.2" width="13.2" height="13.2"/><rect x="1492.7" y="146.5" width="13.2" height="13.2"/><rect x="1428.8" y="156.8" width="13.2" height="13.2"/><rect x="1373.7" y="166.7" width="13.2" height="13.2"/><rect x="1324.8" y="173.6" width="13.2" height="13.2"/><rect x="1271.8" y="182.7" width="13.2" height="13.2"/><rect x="1337.8" y="303.9" width="13.2" height="13.2"/><rect x="1304.9" y="273.0" width="13.2" height="13.2"/><rect x="1279.0" y="246.9" width="13.2" height="13.2"/><rect x="1260.0" y="227.0" width="13.2" height="13.2"/><rect x="1241.1" y="207.7" width="13.2" height="13.2"/><rect x="1199.8" y="446.0" width="13.2" height="13.2"/><rect x="1207.8" y="360.0" width="13.2" height="13.2"/><rect x="1213.8" y="303.0" width="13.2" height="13.2"/><rect x="1217.9" y="257.9" width="13.2" height="13.2"/><rect x="1220.3" y="221.1" width="13.2" height="13.2"/></g>
<rect x="1223.2" y="190.900" width="13.2" height="13.2" fill="none" stroke="#000" stroke-width="1.800"/>
<g stroke="#000" stroke-width="1.2"><circle cx="1172.7" cy="125.8" r="4.2" fill="#07b107"/><circle cx="1179.5" cy="137.7" r="4.2" fill="#41ba41"/><circle cx="1189.1" cy="151.3" r="4.2" fill="#66ba66"/><circle cx="1197.1" cy="166.3" r="4.2" fill="#85ba85"/><circle cx="1209.5" cy="185.4" r="4.2" fill="#a1baa1"/><circle cx="1230.9" cy="129.9" r="4.2" fill="#baba0f"/><circle cx="1229.5" cy="143.5" r="4.2" fill="#baba41"/><circle cx="1228.6" cy="156.9" r="4.2" fill="#baba66"/><circle cx="1227.0" cy="171.9" r="4.2" fill="#baba85"/><circle cx="1225.5" cy="189.7" r="4.2" fill="#babaa1"/><circle cx="1180.4" cy="217.5" r="4.2" fill="#0fbaba"/><circle cx="1188.9" cy="215.3" r="4.2" fill="#41baba"/><circle cx="1195.9" cy="214.4" r="4.2" fill="#66baba"/><circle cx="1204.9" cy="211.3" r="4.2" fill="#85baba"/><circle cx="1213.5" cy="209.7" r="4.2" fill="#a1baba"/><circle cx="1451.5" cy="145.9" r="4.2" fill="#a70404"/><circle cx="1394.5" cy="158.4" r="4.2" fill="#ba4141"/><circle cx="1341.5" cy="174.9" r="4.2" fill="#ba6666"/><circle cx="1298.9" cy="187.0" r="4.2" fill="#ba8585"/><circle cx="1258.5" cy="199.4" r="4.2" fill="#baa1a1"/><circle cx="1293.4" cy="322.9" r="4.2" fill="#ba0795"/><circle cx="1274.4" cy="291.8" r="4.2" fill="#ba41ba"/><circle cx="1258.3" cy="264.2" r="4.2" fill="#ba66ba"/><circle cx="1245.9" cy="244.0" r="4.2" fill="#ba85ba"/><circle cx="1233.7" cy="225.0" r="4.2" fill="#baa1ba"/><circle cx="1206.7" cy="456.5" r="4.2" fill="#0f0f8c"/><circle cx="1204.9" cy="371.9" r="4.2" fill="#4141ba"/><circle cx="1210.6" cy="320.3" r="4.2" fill="#6666ba"/><circle cx="1215.0" cy="276.6" r="4.2" fill="#8585ba"/><circle cx="1219.2" cy="238.7" r="4.2" fill="#a1a1ba"/><circle cx="1223.2" cy="207.4" r="4.2" fill="#fff"/></g>
<rect x="1539.700" y="494.700" width="13.2" height="13.2" fill="none" stroke="#fff" stroke-width="1.600"/>
<circle cx="1500.5" cy="512.9" r="4.2" fill="#b8b800" stroke="#000" stroke-width="1.2"/>
<rect x="2.00" y="870.30" width="1662.00" height="74.00" fill="url(#g45)"/>
<path d="M2 944V875.3a5 5 0 0 1 5-5H53.5a5 5 0 0 1 5 5V944z" fill="url(#g46)"/>
<circle cx="30.3" cy="882.4" r="9.4" fill="url(#g48)"/>
<path d="M25 884h10.600l-5.300-5.400z" fill="#2c2c2c"/>
<rect x="8.5" y="903.5" width="44" height="37" rx="4.5" fill="#ffff00" stroke="#d8d800" stroke-width="1"/>
<path d="M66.1 944V875.3a5 5 0 0 1 5-5h177.2a5 5 0 0 1 5 5V944z" fill="url(#g46)"/>
<rect x="72.7" y="877.8" width="174" height="44" rx="4.5" fill="#c0c0a2" stroke="#a8a88c" stroke-width="1"/>
<text x="159.7" y="940.3" font-size="13" fill="#383838" text-anchor="middle" font-weight="bold" textLength="25.5" lengthAdjust="spacingAndGlyphs">20%</text>
<path d="M256.2 944V875.3a5 5 0 0 1 5-5h177.2a5 5 0 0 1 5 5V944z" fill="url(#g46)"/>
<rect x="262.8" y="877.8" width="174" height="44" rx="4.5" fill="#c2c088" stroke="#a8a874" stroke-width="1"/>
<text x="349.8" y="940.3" font-size="13" fill="#383838" text-anchor="middle" font-weight="bold" textLength="25.5" lengthAdjust="spacingAndGlyphs">40%</text>
<path d="M446.2 944V875.3a5 5 0 0 1 5-5h177.2a5 5 0 0 1 5 5V944z" fill="url(#g46)"/>
<rect x="452.8" y="877.8" width="174" height="44" rx="4.5" fill="#c2c06a" stroke="#a8a858" stroke-width="1"/>
<text x="539.8" y="940.3" font-size="13" fill="#383838" text-anchor="middle" font-weight="bold" textLength="25.5" lengthAdjust="spacingAndGlyphs">60%</text>
<path d="M636.3 944V875.3a5 5 0 0 1 5-5h177.2a5 5 0 0 1 5 5V944z" fill="url(#g46)"/>
<rect x="642.9" y="877.8" width="174" height="44" rx="4.5" fill="#c0c04e" stroke="#a6a640" stroke-width="1"/>
<text x="729.9" y="940.3" font-size="13" fill="#383838" text-anchor="middle" font-weight="bold" textLength="25.5" lengthAdjust="spacingAndGlyphs">80%</text>
<path d="M826.4 944V875.3a5 5 0 0 1 5-5h177.2a5 5 0 0 1 5 5V944z" fill="url(#g47)"/>
<rect x="833.0" y="877.8" width="174" height="44" rx="4.5" fill="#c4c000" stroke="#a0a000" stroke-width="1"/>
<text x="920.0" y="940.3" font-size="13" fill="#fff" text-anchor="middle" font-weight="bold" textLength="33.5" lengthAdjust="spacingAndGlyphs">100%</text>
<path d="M1267.2 944V875.3a5 5 0 0 1 5-5h49.6a5 5 0 0 1 5 5V944z" fill="url(#g49)"/>
<line x1="1267.20" y1="893.40" x2="1326.80" y2="893.40" stroke="#3c3c3c" stroke-width="1.1"/>
<line x1="1267.20" y1="894.50" x2="1326.80" y2="894.50" stroke="#959595" stroke-width="1"/>
<circle cx="1297.5" cy="881.9" r="9.4" fill="url(#g48)"/>
<path d="M1292.200 883.600h10.600l-5.300-5.400z" fill="#2c2c2c"/>
<rect x="1279.200" y="902.500" width="36.200" height="35.800" rx="4.500" fill="url(#g50)" stroke="#2a2a2a" stroke-width="2.800"/>
<rect x="1288.80" y="912.20" width="17.20" height="16.80" fill="url(#g51)"/>
<path d="M1327.8 908V875.3a5 5 0 0 1 5-5H1611.2V908z" fill="url(#g52)"/>
<line x1="1386.10" y1="870.30" x2="1386.10" y2="908.00" stroke="#383838" stroke-width="1.2"/>
<line x1="1387.10" y1="870.30" x2="1387.10" y2="908.00" stroke="#a0a0a0" stroke-width="1"/>
<line x1="1442.60" y1="870.30" x2="1442.60" y2="908.00" stroke="#383838" stroke-width="1.2"/>
<line x1="1443.60" y1="870.30" x2="1443.60" y2="908.00" stroke="#a0a0a0" stroke-width="1"/>
<line x1="1499.40" y1="870.30" x2="1499.40" y2="908.00" stroke="#383838" stroke-width="1.2"/>
<line x1="1500.40" y1="870.30" x2="1500.40" y2="908.00" stroke="#a0a0a0" stroke-width="1"/>
<line x1="1555.20" y1="870.30" x2="1555.20" y2="908.00" stroke="#383838" stroke-width="1.2"/>
<line x1="1556.20" y1="870.30" x2="1556.20" y2="908.00" stroke="#a0a0a0" stroke-width="1"/>
<circle cx="1357.1" cy="889.3" r="12.3" fill="url(#g53)"/>
<circle cx="1414.3" cy="889.3" r="12.3" fill="url(#g53)"/>
<circle cx="1471.2" cy="889.3" r="12.3" fill="url(#g53)"/>
<circle cx="1527.3" cy="889.3" r="12.3" fill="url(#g53)"/>
<circle cx="1583.6" cy="889.3" r="12.3" fill="url(#g53)"/>
<rect x="1352.50" y="884.40" width="9.60" height="9.40" fill="#2e2e2e"/>
<path d="M1411.2 883.6v12.2l10.4-6.1z" fill="#2e2e2e"/>
<path d="M1468.2 884.1h-3.2v11.200h3.200M1474.200 884.100h3.200v11.200h-3.200" fill="none" stroke="#2e2e2e" stroke-width="1.900"/>
<path d="M1467.600 889.600h2.800M1472 889.600h2.800" fill="none" stroke="#2e2e2e" stroke-width="1.800"/>
<path d="M1527.300 889.200c-1.800-2.900-3.300-3.400-4.600-3.400a3.400 3.400 0 0 0 0 6.800c1.300 0 2.800-.5 4.600-3.400c1.800-2.900 3.300-3.400 4.600-3.400a3.400 3.400 0 0 1 0 6.800c-1.300 0-2.800-.5-4.600-3.400z" fill="none" stroke="#2e2e2e" stroke-width="2.100"/>
<path d="M1578.200 888.600a5.600 5.600 0 0 1 9.400-3.200M1589 890.400a5.600 5.600 0 0 1-9.400 3.200" fill="none" stroke="#2e2e2e" stroke-width="2.600"/>
<path d="M1590.600 881.400v6.200h-6.200zM1576.600 897.600v-6.200h6.200z" fill="#2e2e2e"/>
<rect x="1611.20" y="870.30" width="53.00" height="38.40" fill="url(#g54)"/>
<circle cx="1641" cy="889.5" r="12.5" fill="url(#g55)"/>
<path d="M1328.3 944V914.300a5 5 0 0 1 5-5H1498.400V944z" fill="url(#g56)"/>
<path d="M1500.2 944V909.300H1664V944z" fill="url(#g56)"/>
<line x1="1499.30" y1="909.00" x2="1499.30" y2="944.00" stroke="#5a5a5a" stroke-width="1.2"/>
<line x1="1328.00" y1="908.50" x2="1664.00" y2="908.50" stroke="#4a4a4a" stroke-width="1.2"/>
<circle cx="1366.9" cy="928" r="12.500" fill="url(#g57)"/>
<circle cx="1634" cy="928" r="12.500" fill="url(#g57)"/>
<path d="M1366.200 922.800l-4.300 5.200 4.300 5.200M1371.800 922.800l-4.300 5.200 4.300 5.200" fill="none" stroke="#3a3a3a" stroke-width="2.300"/>
<path d="M1629.200 922.800l4.300 5.200-4.300 5.200M1634.800 922.800l4.300 5.200-4.300 5.200" fill="none" stroke="#3a3a3a" stroke-width="2.300"/>
<text x="1400.5" y="937.5" font-size="28.4" fill="#c4c4c4" textLength="62.5" lengthAdjust="spacingAndGlyphs" transform="translate(0 1)">Back</text>
<text x="1400.5" y="937.5" font-size="28.4" fill="#383838" textLength="62.5" lengthAdjust="spacingAndGlyphs" stroke="#383838" stroke-width="1">Back</text>
<text x="1534.0" y="937.5" font-size="28.4" fill="#c4c4c4" textLength="63.5" lengthAdjust="spacingAndGlyphs" transform="translate(0 1)">Next</text>
<text x="1534.0" y="937.5" font-size="28.4" fill="#383838" textLength="63.5" lengthAdjust="spacingAndGlyphs" stroke="#383838" stroke-width="1">Next</text>
</svg>
</body></html>
